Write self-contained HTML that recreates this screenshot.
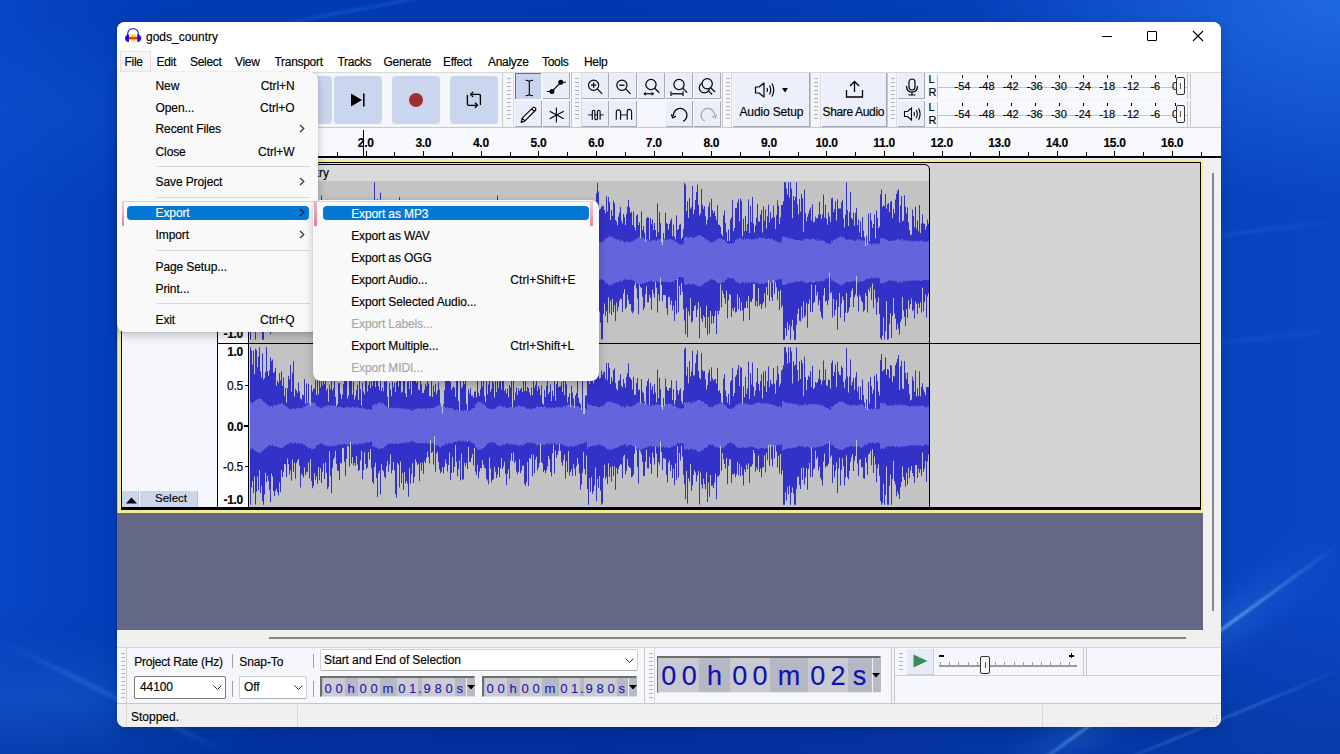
<!DOCTYPE html><html><head><meta charset="utf-8"><style>
*{margin:0;padding:0;box-sizing:border-box}
html,body{width:1340px;height:754px;overflow:hidden}
body{position:relative;font-family:"Liberation Sans",sans-serif;font-size:12px;color:#000;
 background:#003cb6;}
.abs{position:absolute}
.t{position:absolute;white-space:nowrap;line-height:1;-webkit-text-stroke:0.15px currentColor}
svg{position:absolute;overflow:visible}
</style></head><body>
<div class="abs" style="left:0;top:0;width:1340px;height:754px;background:linear-gradient(90deg,#0746c6 0%,#003cb6 12%,#0038b0 45%,#0540bc 80%,#0a46c4 100%)"></div>
<div class="abs" style="left:0;top:0;width:1340px;height:754px;background:linear-gradient(180deg,rgba(0,0,0,0) 0%,rgba(0,0,0,0) 80%,rgba(0,10,60,0.18) 100%)"></div>
<div class="abs" style="left:0;top:0;width:1340px;height:754px;background:radial-gradient(ellipse 380px 200px at 1340px 0px,rgba(40,120,235,0.7),rgba(40,120,235,0) 100%)"></div>
<div class="abs" style="left:0;top:0;width:1340px;height:754px;background:radial-gradient(ellipse 260px 90px at 60px 110px,rgba(30,100,220,0.22),rgba(30,100,220,0) 100%)"></div>
<div class="abs" style="left:980px;top:780.0px;width:442px;height:40px;transform-origin:0 50%;transform:rotate(-35.52deg);background:linear-gradient(90deg,rgba(60,140,240,0),rgba(60,140,240,0.22) 30%,rgba(60,140,240,0.22) 70%,rgba(60,140,240,0));filter:blur(10px)"></div>
<div class="abs" style="left:1000px;top:788.75px;width:420px;height:2.5px;transform-origin:0 50%;transform:rotate(-36.00deg);background:linear-gradient(90deg,rgba(130,195,250,0),rgba(130,195,250,0.6) 30%,rgba(130,195,250,0.6) 70%,rgba(130,195,250,0));filter:blur(1.3px)"></div>
<div class="abs" style="left:1100px;top:769.0px;width:260px;height:2px;transform-origin:0 50%;transform:rotate(-22.62deg);background:linear-gradient(90deg,rgba(120,180,250,0),rgba(120,180,250,0.35) 30%,rgba(120,180,250,0.35) 70%,rgba(120,180,250,0));filter:blur(1.3px)"></div>
<div class="abs" style="left:1180px;top:238.5px;width:161px;height:3px;transform-origin:0 50%;transform:rotate(-7.13deg);background:linear-gradient(90deg,rgba(90,150,240,0),rgba(90,150,240,0.15) 30%,rgba(90,150,240,0.15) 70%,rgba(90,150,240,0));filter:blur(1.5px)"></div>
<div class="abs" style="left:1190px;top:343.5px;width:151px;height:3px;transform-origin:0 50%;transform:rotate(-5.71deg);background:linear-gradient(90deg,rgba(90,150,240,0),rgba(90,150,240,0.12) 30%,rgba(90,150,240,0.12) 70%,rgba(90,150,240,0));filter:blur(1.5px)"></div>
<div class="abs" style="left:250px;top:29.0px;width:214px;height:2px;transform-origin:0 50%;transform:rotate(-10.78deg);background:linear-gradient(90deg,rgba(90,150,240,0),rgba(90,150,240,0.35) 30%,rgba(90,150,240,0.35) 70%,rgba(90,150,240,0));filter:blur(1.5px)"></div>
<div class="abs" style="left:0;top:0;width:1340px;height:754px;background:radial-gradient(ellipse 240px 70px at 60px 700px,rgba(40,120,230,0.28),rgba(40,120,230,0) 100%)"></div>
<div class="abs" style="left:0px;top:637.5px;width:257px;height:5px;transform-origin:0 50%;transform:rotate(26.37deg);background:linear-gradient(90deg,rgba(90,150,240,0),rgba(90,150,240,0.22) 30%,rgba(90,150,240,0.22) 70%,rgba(90,150,240,0));filter:blur(1.5px)"></div>
<div class="abs" style="left:117px;top:22px;width:1104px;height:705px;border-radius:8px;background:#f0f0f0;box-shadow:0 4px 14px rgba(0,0,20,0.18),0 0 1px rgba(0,0,0,0.3)"></div>
<div class="abs" style="left:117px;top:22px;width:1104px;height:51px;border-radius:8px 8px 0 0;background:#ffffff;"></div>
<svg style="left:122px;top:26px" width="24" height="20" viewBox="0 0 24 20">
<defs><radialGradient id="yg" cx="0.5" cy="0.45" r="0.55"><stop offset="0" stop-color="#f0d000"/><stop offset="0.7" stop-color="#ffd830"/><stop offset="1" stop-color="#fff0a0"/></radialGradient></defs>
<path d="M5.4 9.5 C5.2 4.8 7.8 2.7 11 2.7 C14.2 2.7 16.8 4.8 16.6 9.5" fill="none" stroke="#2a2ae8" stroke-width="1.3"/>
<ellipse cx="11.1" cy="11.8" rx="3.9" ry="3.8" fill="url(#yg)"/>
<rect x="7" y="11" width="8.4" height="2.3" fill="#ff2a00"/>
<path d="M7 8.2 V16 Q3 16 3 12.3 Q3 9 7 8.2Z" fill="#1010f0"/>
<path d="M15.2 8.2 V16 Q19.2 16 19.2 12.3 Q19.2 9 15.2 8.2Z" fill="#1010f0"/>
</svg>
<div class="t" style="left:146px;top:30.84px;font-size:12px;color:#000;">gods_country</div>
<div class="abs" style="left:1102px;top:36px;width:10px;height:1px;background:#000"></div>
<div class="abs" style="left:1147px;top:31px;width:10px;height:10px;border:1px solid #000;border-radius:1px"></div>
<svg style="left:1193px;top:31px" width="10" height="10"><path d="M0 0L10 10M10 0L0 10" stroke="#000" stroke-width="1.1"/></svg>
<div class="t" style="left:124.5px;top:55.64px;font-size:12px;color:#000;letter-spacing:-0.3px">File</div>
<div class="t" style="left:156.5px;top:55.64px;font-size:12px;color:#000;letter-spacing:-0.3px">Edit</div>
<div class="t" style="left:190px;top:55.64px;font-size:12px;color:#000;letter-spacing:-0.3px">Select</div>
<div class="t" style="left:235px;top:55.64px;font-size:12px;color:#000;letter-spacing:-0.3px">View</div>
<div class="t" style="left:274.5px;top:55.64px;font-size:12px;color:#000;letter-spacing:-0.3px">Transport</div>
<div class="t" style="left:337.5px;top:55.64px;font-size:12px;color:#000;letter-spacing:-0.3px">Tracks</div>
<div class="t" style="left:383.5px;top:55.64px;font-size:12px;color:#000;letter-spacing:-0.3px">Generate</div>
<div class="t" style="left:443px;top:55.64px;font-size:12px;color:#000;letter-spacing:-0.3px">Effect</div>
<div class="t" style="left:488px;top:55.64px;font-size:12px;color:#000;letter-spacing:-0.3px">Analyze</div>
<div class="t" style="left:542px;top:55.64px;font-size:12px;color:#000;letter-spacing:-0.3px">Tools</div>
<div class="t" style="left:584px;top:55.64px;font-size:12px;color:#000;letter-spacing:-0.3px">Help</div>
<div class="abs" style="left:120px;top:51px;width:31px;height:23px;border:1px solid #f4d8dc;border-bottom:none;background:#f6f6f6"></div>
<div class="t" style="left:124.5px;top:55.64px;font-size:12px;color:#000;letter-spacing:-0.3px">File</div>
<div class="abs" style="left:117px;top:72px;width:1104px;height:56px;background:#f4f6fb;border-top:1px solid #d8d8d8;border-bottom:1px solid #c8c8c8"></div>
<div class="abs" style="left:284px;top:76px;width:48px;height:48px;background:#cad6ee;border-radius:4px"></div>
<div class="abs" style="left:334px;top:76px;width:48px;height:48px;background:#cad6ee;border-radius:4px"></div>
<div class="abs" style="left:392px;top:76px;width:48px;height:48px;background:#cad6ee;border-radius:4px"></div>
<div class="abs" style="left:450px;top:76px;width:48px;height:48px;background:#cad6ee;border-radius:4px"></div>
<svg style="left:350px;top:93px" width="16" height="14"><path d="M1 0.5L12 7L1 13.5Z" fill="#000"/><rect x="13" y="0.5" width="1.6" height="13" fill="#000"/></svg>
<div class="abs" style="left:409px;top:93px;width:14px;height:14px;border-radius:50%;background:#a03030"></div>
<svg style="left:460px;top:86px" width="30" height="28"><g stroke="#000" stroke-width="1.35" fill="none" stroke-linecap="round" stroke-linejoin="round"><path d="M10.8 8.4H19.2Q20.4 8.4 20.4 9.6V18.6"/><path d="M12.8 6.2L10.6 8.4L12.8 10.6"/><path d="M7.4 9.3V18.1Q7.4 19.3 8.6 19.3H17.5"/><path d="M15.3 17.1L17.5 19.3L15.3 21.5"/></g></svg>
<div class="abs" style="left:502px;top:73px;width:1px;height:54px;background:#c8c8c8"></div>
<div class="abs" style="left:506px;top:75px;width:6px;height:50px"><div style="position:absolute;left:1px;top:3px;width:4px;height:1px;background:#b4b4b8"></div><div style="position:absolute;left:1px;top:7px;width:4px;height:1px;background:#b4b4b8"></div><div style="position:absolute;left:1px;top:11px;width:4px;height:1px;background:#b4b4b8"></div><div style="position:absolute;left:1px;top:15px;width:4px;height:1px;background:#b4b4b8"></div><div style="position:absolute;left:1px;top:19px;width:4px;height:1px;background:#b4b4b8"></div><div style="position:absolute;left:1px;top:23px;width:4px;height:1px;background:#b4b4b8"></div><div style="position:absolute;left:1px;top:27px;width:4px;height:1px;background:#b4b4b8"></div><div style="position:absolute;left:1px;top:31px;width:4px;height:1px;background:#b4b4b8"></div><div style="position:absolute;left:1px;top:35px;width:4px;height:1px;background:#b4b4b8"></div><div style="position:absolute;left:1px;top:39px;width:4px;height:1px;background:#b4b4b8"></div><div style="position:absolute;left:1px;top:43px;width:4px;height:1px;background:#b4b4b8"></div></div>
<div class="abs" style="left:513px;top:73px;width:1px;height:54px;background:#dcdcdc"></div>
<div class="abs" style="left:515px;top:73px;width:26px;height:26px;background:#c9d5ee;border-left:1px solid #6c7080;border-top:1px solid #6c7080"></div>
<div class="abs" style="left:543px;top:73px;width:27px;height:26px;background:#e9eef9;border-right:1px solid #a4a8b4;border-bottom:1px solid #a4a8b4"></div>
<div class="abs" style="left:515px;top:101px;width:27px;height:26px;background:#e9eef9;border-right:1px solid #a4a8b4;border-bottom:1px solid #a4a8b4"></div>
<div class="abs" style="left:543px;top:101px;width:27px;height:26px;background:#e9eef9;border-right:1px solid #a4a8b4;border-bottom:1px solid #a4a8b4"></div>
<svg style="left:515px;top:73px" width="28" height="28"><path d="M10.5 7.2Q12.5 7.2 14.3 8.2Q16.1 7.2 18.1 7.2M14.3 8.2V21.8M10.5 22.7Q12.5 22.7 14.3 21.7Q16.1 22.7 18.1 22.7" stroke="#000" fill="none" stroke-width="1.1"/></svg>
<svg style="left:543px;top:73px" width="28" height="28"><path d="M3.8 18.5H8.9L17.8 9.3H23" stroke="#000" fill="none" stroke-width="1.1"/><circle cx="8.9" cy="18.5" r="2.5" fill="#000"/><circle cx="17.8" cy="9.3" r="2.5" fill="#000"/></svg>
<svg style="left:515px;top:101px" width="28" height="28"><path d="M6.1 21.4L7.2 17.2L17.6 6.8A1.9 1.9 0 0 1 20.3 9.5L9.9 19.9Z M7.2 17.2L9.9 19.9 M16.6 7.8L19.3 10.5" stroke="#000" fill="none" stroke-width="1.1" stroke-linejoin="round"/><path d="M6.1 21.4L6.7 19.2L8.3 20.8Z" fill="#000"/></svg>
<svg style="left:543px;top:101px" width="28" height="28"><path d="M13.4 6.4V21.4M6.7 10.3L20.7 17.8M6.7 17.8L20.7 10.3" stroke="#000" fill="none" stroke-width="1.1"/><circle cx="13.4" cy="13.9" r="1" fill="#000"/></svg>
<div class="abs" style="left:571px;top:73px;width:1px;height:54px;background:#c8c8c8"></div>
<div class="abs" style="left:574px;top:75px;width:6px;height:50px"><div style="position:absolute;left:1px;top:3px;width:4px;height:1px;background:#b4b4b8"></div><div style="position:absolute;left:1px;top:7px;width:4px;height:1px;background:#b4b4b8"></div><div style="position:absolute;left:1px;top:11px;width:4px;height:1px;background:#b4b4b8"></div><div style="position:absolute;left:1px;top:15px;width:4px;height:1px;background:#b4b4b8"></div><div style="position:absolute;left:1px;top:19px;width:4px;height:1px;background:#b4b4b8"></div><div style="position:absolute;left:1px;top:23px;width:4px;height:1px;background:#b4b4b8"></div><div style="position:absolute;left:1px;top:27px;width:4px;height:1px;background:#b4b4b8"></div><div style="position:absolute;left:1px;top:31px;width:4px;height:1px;background:#b4b4b8"></div><div style="position:absolute;left:1px;top:35px;width:4px;height:1px;background:#b4b4b8"></div><div style="position:absolute;left:1px;top:39px;width:4px;height:1px;background:#b4b4b8"></div><div style="position:absolute;left:1px;top:43px;width:4px;height:1px;background:#b4b4b8"></div></div>
<div class="abs" style="left:581px;top:73px;width:1px;height:54px;background:#dcdcdc"></div>
<div class="abs" style="left:582px;top:73px;width:27px;height:26px;background:#e9eef9;border-right:1px solid #a4a8b4;border-bottom:1px solid #a4a8b4"></div>
<div class="abs" style="left:610px;top:73px;width:27px;height:26px;background:#e9eef9;border-right:1px solid #a4a8b4;border-bottom:1px solid #a4a8b4"></div>
<div class="abs" style="left:638px;top:73px;width:27px;height:26px;background:#e9eef9;border-right:1px solid #a4a8b4;border-bottom:1px solid #a4a8b4"></div>
<div class="abs" style="left:666px;top:73px;width:27px;height:26px;background:#e9eef9;border-right:1px solid #a4a8b4;border-bottom:1px solid #a4a8b4"></div>
<div class="abs" style="left:694px;top:73px;width:27px;height:26px;background:#e9eef9;border-right:1px solid #a4a8b4;border-bottom:1px solid #a4a8b4"></div>
<div class="abs" style="left:582px;top:101px;width:27px;height:26px;background:#e9eef9;border-right:1px solid #a4a8b4;border-bottom:1px solid #a4a8b4"></div>
<div class="abs" style="left:610px;top:101px;width:27px;height:26px;background:#e9eef9;border-right:1px solid #a4a8b4;border-bottom:1px solid #a4a8b4"></div>
<div class="abs" style="left:666px;top:101px;width:27px;height:26px;background:#e9eef9;border-right:1px solid #a4a8b4;border-bottom:1px solid #a4a8b4"></div>
<div class="abs" style="left:694px;top:101px;width:27px;height:26px;background:#e9eef9;border-right:1px solid #a4a8b4;border-bottom:1px solid #a4a8b4"></div>
<svg style="left:582px;top:73px" width="28" height="28"><circle cx="11.6" cy="12.2" r="5.1" stroke="#000" stroke-width="1.2" fill="none"/><path d="M15.3 15.899999999999999L20.2 20.8" stroke="#000" stroke-width="1.2"/><path d="M9 12.2H14.2M11.6 9.6V14.8" stroke="#000" stroke-width="1.3"/></svg>
<svg style="left:610px;top:73px" width="28" height="28"><circle cx="11.9" cy="12.2" r="5.1" stroke="#000" stroke-width="1.2" fill="none"/><path d="M15.600000000000001 15.899999999999999L20.5 20.8" stroke="#000" stroke-width="1.2"/><path d="M9.3 12.2H14.5" stroke="#000" stroke-width="1.3"/></svg>
<svg style="left:638px;top:73px" width="28" height="28"><circle cx="13" cy="11.5" r="5.1" stroke="#000" stroke-width="1.2" fill="none"/><path d="M16.7 15.2L21.3 19.7" stroke="#000" stroke-width="1.2"/><path d="M6 20.8H15.5" stroke="#000" stroke-width="1.2"/><path d="M5.3 20.8L7.8 18.8V22.8Z M16.2 20.8L13.7 18.8V22.8Z" fill="#000"/></svg>
<svg style="left:666px;top:73px" width="28" height="28"><circle cx="13" cy="11.5" r="5.1" stroke="#000" stroke-width="1.2" fill="none"/><path d="M16.7 15.2L21.2 19.7" stroke="#000" stroke-width="1.2"/><path d="M5.6 20.8H16.5" stroke="#000" stroke-width="1.3"/><path d="M5 18.6V23M17 18.6V23" stroke="#000" stroke-width="1.2"/></svg>
<svg style="left:694px;top:73px" width="28" height="28"><circle cx="10.4" cy="14.7" r="5.1" stroke="#000" fill="none" stroke-width="1.2"/><circle cx="13.2" cy="10.7" r="5.1" stroke="#000" stroke-width="1.2" fill="#e9eef9"/><path d="M16.6 14.8L21.1 19M14 17.3L18.2 21.5" stroke="#000" fill="none" stroke-width="1.2"/></svg>
<svg style="left:585px;top:105px" width="22" height="18"><path d="M3.2 9.9H18.7" stroke="#6a6e78" stroke-width="1.7"/><path d="M7.3 14.7V6.5A1.3 1.3 0 0 1 9.9 6.5V13.4A1.3 1.3 0 0 0 12.5 13.4V6.5A1.3 1.3 0 0 1 15.1 6.5V14.7" stroke="#000" stroke-width="1.1" fill="#e9eef9"/></svg>
<svg style="left:613px;top:105px" width="24" height="18"><path d="M7.6 9.9H14.2" stroke="#6a6e78" stroke-width="1.7"/><path d="M3.3 14.7V6.6A2.2 2.2 0 0 1 7.6 6.6V13.2A1.3 1.3 0 0 0 7.6 14.7" stroke="#000" stroke-width="1.1" fill="none"/><path d="M14.2 14.7V6.6A2.2 2.2 0 0 1 18.6 6.6V14.7" stroke="#000" stroke-width="1.1" fill="none"/></svg>
<svg style="left:666px;top:101px" width="28" height="28"><path d="M17.2 20.3A6.8 6.8 0 1 0 7.4 15" stroke="#000" stroke-width="1.3" fill="none"/><path d="M5.5 13.2L6.6 16.8L9.9 15.2" stroke="#000" stroke-width="1.3" fill="none" stroke-linejoin="round"/></svg>
<svg style="left:694px;top:101px" width="28" height="28"><path d="M10.8 20.3A6.8 6.8 0 1 1 20.6 15" stroke="#a0a0a8" stroke-width="1.1" fill="none"/><path d="M22.5 13.2L21.4 16.8L18.1 15.2" stroke="#a0a0a8" stroke-width="1.1" fill="none" stroke-linejoin="round"/></svg>
<div class="abs" style="left:722px;top:73px;width:1px;height:54px;background:#c8c8c8"></div>
<div class="abs" style="left:725px;top:75px;width:6px;height:50px"><div style="position:absolute;left:1px;top:3px;width:4px;height:1px;background:#b4b4b8"></div><div style="position:absolute;left:1px;top:7px;width:4px;height:1px;background:#b4b4b8"></div><div style="position:absolute;left:1px;top:11px;width:4px;height:1px;background:#b4b4b8"></div><div style="position:absolute;left:1px;top:15px;width:4px;height:1px;background:#b4b4b8"></div><div style="position:absolute;left:1px;top:19px;width:4px;height:1px;background:#b4b4b8"></div><div style="position:absolute;left:1px;top:23px;width:4px;height:1px;background:#b4b4b8"></div><div style="position:absolute;left:1px;top:27px;width:4px;height:1px;background:#b4b4b8"></div><div style="position:absolute;left:1px;top:31px;width:4px;height:1px;background:#b4b4b8"></div><div style="position:absolute;left:1px;top:35px;width:4px;height:1px;background:#b4b4b8"></div><div style="position:absolute;left:1px;top:39px;width:4px;height:1px;background:#b4b4b8"></div><div style="position:absolute;left:1px;top:43px;width:4px;height:1px;background:#b4b4b8"></div></div>
<div class="abs" style="left:731px;top:73px;width:1px;height:54px;background:#dcdcdc"></div>
<div class="abs" style="left:733px;top:73px;width:77px;height:54px;background:#edf0fa;border-right:1px solid #a4a8b4;border-bottom:1px solid #a4a8b4"></div>
<svg style="left:754px;top:82px" width="22" height="16"><path d="M1.5 5H5L10 1V15L5 11H1.5Z" stroke="#000" stroke-width="1.2" fill="none" stroke-linejoin="round"/><path d="M13 6Q14.2 8 13 10M15.5 3.5Q18 8 15.5 12.5M18 1.5Q21.5 8 18 14.5" stroke="#000" stroke-width="1.2" fill="none"/></svg>
<svg style="left:782px;top:88px" width="6" height="5"><path d="M0 0H6L3 4.5Z" fill="#000"/></svg>
<div class="t" style="left:739.5px;top:105.64px;font-size:12px;color:#000;letter-spacing:-0.15px">Audio Setup</div>
<div class="abs" style="left:810px;top:73px;width:1px;height:54px;background:#c8c8c8"></div>
<div class="abs" style="left:813px;top:75px;width:6px;height:50px"><div style="position:absolute;left:1px;top:3px;width:4px;height:1px;background:#b4b4b8"></div><div style="position:absolute;left:1px;top:7px;width:4px;height:1px;background:#b4b4b8"></div><div style="position:absolute;left:1px;top:11px;width:4px;height:1px;background:#b4b4b8"></div><div style="position:absolute;left:1px;top:15px;width:4px;height:1px;background:#b4b4b8"></div><div style="position:absolute;left:1px;top:19px;width:4px;height:1px;background:#b4b4b8"></div><div style="position:absolute;left:1px;top:23px;width:4px;height:1px;background:#b4b4b8"></div><div style="position:absolute;left:1px;top:27px;width:4px;height:1px;background:#b4b4b8"></div><div style="position:absolute;left:1px;top:31px;width:4px;height:1px;background:#b4b4b8"></div><div style="position:absolute;left:1px;top:35px;width:4px;height:1px;background:#b4b4b8"></div><div style="position:absolute;left:1px;top:39px;width:4px;height:1px;background:#b4b4b8"></div><div style="position:absolute;left:1px;top:43px;width:4px;height:1px;background:#b4b4b8"></div></div>
<div class="abs" style="left:820px;top:73px;width:1px;height:54px;background:#dcdcdc"></div>
<div class="abs" style="left:822px;top:73px;width:65px;height:54px;background:#edf0fa;border-right:1px solid #a4a8b4;border-bottom:1px solid #a4a8b4"></div>
<svg style="left:845px;top:80px" width="19" height="19"><path d="M9.5 1.5V12M5 6L9.5 1.5L14 6" stroke="#000" stroke-width="1.3" fill="none"/><path d="M1.5 10V17H17.5V10" stroke="#000" stroke-width="1.3" fill="none"/></svg>
<div class="t" style="left:822.5px;top:106.34px;font-size:12px;color:#000;letter-spacing:-0.35px">Share Audio</div>
<div class="abs" style="left:887px;top:73px;width:1px;height:54px;background:#c8c8c8"></div>
<div class="abs" style="left:890px;top:75px;width:6px;height:50px"><div style="position:absolute;left:1px;top:3px;width:4px;height:1px;background:#b4b4b8"></div><div style="position:absolute;left:1px;top:7px;width:4px;height:1px;background:#b4b4b8"></div><div style="position:absolute;left:1px;top:11px;width:4px;height:1px;background:#b4b4b8"></div><div style="position:absolute;left:1px;top:15px;width:4px;height:1px;background:#b4b4b8"></div><div style="position:absolute;left:1px;top:19px;width:4px;height:1px;background:#b4b4b8"></div><div style="position:absolute;left:1px;top:23px;width:4px;height:1px;background:#b4b4b8"></div><div style="position:absolute;left:1px;top:27px;width:4px;height:1px;background:#b4b4b8"></div><div style="position:absolute;left:1px;top:31px;width:4px;height:1px;background:#b4b4b8"></div><div style="position:absolute;left:1px;top:35px;width:4px;height:1px;background:#b4b4b8"></div><div style="position:absolute;left:1px;top:39px;width:4px;height:1px;background:#b4b4b8"></div><div style="position:absolute;left:1px;top:43px;width:4px;height:1px;background:#b4b4b8"></div></div>
<div class="abs" style="left:896px;top:73px;width:1px;height:54px;background:#dcdcdc"></div>
<div class="abs" style="left:898px;top:73px;width:27px;height:26px;background:#e9eef9;border-right:1px solid #a4a8b4;border-bottom:1px solid #a4a8b4"></div>
<div class="t" style="left:928.5px;top:73.89px;font-size:11px;color:#000;">L</div>
<div class="t" style="left:928.5px;top:87.49px;font-size:11px;color:#000;">R</div>
<div class="abs" style="left:937px;top:74px;width:250px;height:25px;background:#f8f9fd;border-left:1px solid #c4c4c8"></div>
<div class="abs" style="left:937px;top:87px;width:250px;height:1px;background:#c4c4c8"></div>
<div class="abs" style="left:962px;top:75px;width:1px;height:3px;background:#000"></div>
<div class="t" style="left:862.5px;width:200px;text-align:center;top:81.19px;font-size:11px;color:#000;">-54</div>
<div class="abs" style="left:987px;top:75px;width:1px;height:3px;background:#000"></div>
<div class="t" style="left:886.6px;width:200px;text-align:center;top:81.19px;font-size:11px;color:#000;">-48</div>
<div class="abs" style="left:1011px;top:75px;width:1px;height:3px;background:#000"></div>
<div class="t" style="left:910.7px;width:200px;text-align:center;top:81.19px;font-size:11px;color:#000;">-42</div>
<div class="abs" style="left:1035px;top:75px;width:1px;height:3px;background:#000"></div>
<div class="t" style="left:934.8px;width:200px;text-align:center;top:81.19px;font-size:11px;color:#000;">-36</div>
<div class="abs" style="left:1059px;top:75px;width:1px;height:3px;background:#000"></div>
<div class="t" style="left:958.9000000000001px;width:200px;text-align:center;top:81.19px;font-size:11px;color:#000;">-30</div>
<div class="abs" style="left:1083px;top:75px;width:1px;height:3px;background:#000"></div>
<div class="t" style="left:983.0px;width:200px;text-align:center;top:81.19px;font-size:11px;color:#000;">-24</div>
<div class="abs" style="left:1107px;top:75px;width:1px;height:3px;background:#000"></div>
<div class="t" style="left:1007.0999999999999px;width:200px;text-align:center;top:81.19px;font-size:11px;color:#000;">-18</div>
<div class="abs" style="left:1131px;top:75px;width:1px;height:3px;background:#000"></div>
<div class="t" style="left:1031.2px;width:200px;text-align:center;top:81.19px;font-size:11px;color:#000;">-12</div>
<div class="abs" style="left:1155px;top:75px;width:1px;height:3px;background:#000"></div>
<div class="t" style="left:1055.3px;width:200px;text-align:center;top:81.19px;font-size:11px;color:#000;">-6</div>
<div class="abs" style="left:1175px;top:75px;width:1px;height:3px;background:#000"></div>
<div class="t" style="left:1075px;width:200px;text-align:center;top:81.19px;font-size:11px;color:#000;">0</div>
<div class="abs" style="left:1176px;top:77px;width:9px;height:18px;background:#f8f8f8;border:1px solid #333;border-radius:2px"></div>
<div class="abs" style="left:1180px;top:83px;width:1px;height:6px;background:#555"></div>
<div class="abs" style="left:1187px;top:73px;width:1px;height:26px;background:#c8c8c8"></div>
<div class="abs" style="left:1190px;top:73px;width:1px;height:26px;background:#c8c8c8"></div>
<div class="abs" style="left:898px;top:101px;width:27px;height:26px;background:#e9eef9;border-right:1px solid #a4a8b4;border-bottom:1px solid #a4a8b4"></div>
<div class="t" style="left:928.5px;top:101.89px;font-size:11px;color:#000;">L</div>
<div class="t" style="left:928.5px;top:115.49px;font-size:11px;color:#000;">R</div>
<div class="abs" style="left:937px;top:102px;width:250px;height:25px;background:#f8f9fd;border-left:1px solid #c4c4c8"></div>
<div class="abs" style="left:937px;top:115px;width:250px;height:1px;background:#c4c4c8"></div>
<div class="abs" style="left:962px;top:103px;width:1px;height:3px;background:#000"></div>
<div class="t" style="left:862.5px;width:200px;text-align:center;top:109.19px;font-size:11px;color:#000;">-54</div>
<div class="abs" style="left:987px;top:103px;width:1px;height:3px;background:#000"></div>
<div class="t" style="left:886.6px;width:200px;text-align:center;top:109.19px;font-size:11px;color:#000;">-48</div>
<div class="abs" style="left:1011px;top:103px;width:1px;height:3px;background:#000"></div>
<div class="t" style="left:910.7px;width:200px;text-align:center;top:109.19px;font-size:11px;color:#000;">-42</div>
<div class="abs" style="left:1035px;top:103px;width:1px;height:3px;background:#000"></div>
<div class="t" style="left:934.8px;width:200px;text-align:center;top:109.19px;font-size:11px;color:#000;">-36</div>
<div class="abs" style="left:1059px;top:103px;width:1px;height:3px;background:#000"></div>
<div class="t" style="left:958.9000000000001px;width:200px;text-align:center;top:109.19px;font-size:11px;color:#000;">-30</div>
<div class="abs" style="left:1083px;top:103px;width:1px;height:3px;background:#000"></div>
<div class="t" style="left:983.0px;width:200px;text-align:center;top:109.19px;font-size:11px;color:#000;">-24</div>
<div class="abs" style="left:1107px;top:103px;width:1px;height:3px;background:#000"></div>
<div class="t" style="left:1007.0999999999999px;width:200px;text-align:center;top:109.19px;font-size:11px;color:#000;">-18</div>
<div class="abs" style="left:1131px;top:103px;width:1px;height:3px;background:#000"></div>
<div class="t" style="left:1031.2px;width:200px;text-align:center;top:109.19px;font-size:11px;color:#000;">-12</div>
<div class="abs" style="left:1155px;top:103px;width:1px;height:3px;background:#000"></div>
<div class="t" style="left:1055.3px;width:200px;text-align:center;top:109.19px;font-size:11px;color:#000;">-6</div>
<div class="abs" style="left:1175px;top:103px;width:1px;height:3px;background:#000"></div>
<div class="t" style="left:1075px;width:200px;text-align:center;top:109.19px;font-size:11px;color:#000;">0</div>
<div class="abs" style="left:1176px;top:105px;width:9px;height:18px;background:#f8f8f8;border:1px solid #333;border-radius:2px"></div>
<div class="abs" style="left:1180px;top:111px;width:1px;height:6px;background:#555"></div>
<div class="abs" style="left:1187px;top:101px;width:1px;height:26px;background:#c8c8c8"></div>
<div class="abs" style="left:1190px;top:101px;width:1px;height:26px;background:#c8c8c8"></div>
<svg style="left:905px;top:78px" width="14" height="18"><rect x="4" y="1" width="6" height="11" rx="3" stroke="#000" stroke-width="1.2" fill="none"/><path d="M1.5 8Q1.5 14 7 14Q12.5 14 12.5 8M7 14V17M3.5 17H10.5" stroke="#000" stroke-width="1.2" fill="none"/></svg>
<svg style="left:903px;top:107px" width="20" height="14"><path d="M1.5 4.5H4.5L8.5 1V13L4.5 9.5H1.5Z" stroke="#000" stroke-width="1.1" fill="none"/><path d="M11 5Q12 7 11 9M13.3 3Q15.3 7 13.3 11M15.6 1.2Q18.6 7 15.6 12.8" stroke="#000" stroke-width="1.1" fill="none"/></svg>
<div class="abs" style="left:117px;top:128px;width:1104px;height:29px;background:#f8f9fd"></div>
<div class="abs" style="left:117px;top:156px;width:1104px;height:2px;background:#000"></div>
<div class="abs" style="left:250px;top:151px;width:1px;height:5px;background:#000"></div>
<div class="abs" style="left:279px;top:152px;width:1px;height:4px;background:#000"></div>
<div class="abs" style="left:308px;top:151px;width:1px;height:5px;background:#000"></div>
<div class="t" style="left:208.10000000000002px;width:200px;text-align:center;top:137.34px;font-size:12px;color:#000;font-weight:bold;letter-spacing:-0.3px">1.0</div>
<div class="abs" style="left:337px;top:152px;width:1px;height:4px;background:#000"></div>
<div class="abs" style="left:366px;top:151px;width:1px;height:5px;background:#000"></div>
<div class="t" style="left:265.7px;width:200px;text-align:center;top:137.34px;font-size:12px;color:#000;font-weight:bold;letter-spacing:-0.3px">2.0</div>
<div class="abs" style="left:394px;top:152px;width:1px;height:4px;background:#000"></div>
<div class="abs" style="left:423px;top:151px;width:1px;height:5px;background:#000"></div>
<div class="t" style="left:323.3px;width:200px;text-align:center;top:137.34px;font-size:12px;color:#000;font-weight:bold;letter-spacing:-0.3px">3.0</div>
<div class="abs" style="left:452px;top:152px;width:1px;height:4px;background:#000"></div>
<div class="abs" style="left:481px;top:151px;width:1px;height:5px;background:#000"></div>
<div class="t" style="left:380.9px;width:200px;text-align:center;top:137.34px;font-size:12px;color:#000;font-weight:bold;letter-spacing:-0.3px">4.0</div>
<div class="abs" style="left:510px;top:152px;width:1px;height:4px;background:#000"></div>
<div class="abs" style="left:538px;top:151px;width:1px;height:5px;background:#000"></div>
<div class="t" style="left:438.5px;width:200px;text-align:center;top:137.34px;font-size:12px;color:#000;font-weight:bold;letter-spacing:-0.3px">5.0</div>
<div class="abs" style="left:567px;top:152px;width:1px;height:4px;background:#000"></div>
<div class="abs" style="left:596px;top:151px;width:1px;height:5px;background:#000"></div>
<div class="t" style="left:496.1px;width:200px;text-align:center;top:137.34px;font-size:12px;color:#000;font-weight:bold;letter-spacing:-0.3px">6.0</div>
<div class="abs" style="left:625px;top:152px;width:1px;height:4px;background:#000"></div>
<div class="abs" style="left:654px;top:151px;width:1px;height:5px;background:#000"></div>
<div class="t" style="left:553.7px;width:200px;text-align:center;top:137.34px;font-size:12px;color:#000;font-weight:bold;letter-spacing:-0.3px">7.0</div>
<div class="abs" style="left:682px;top:152px;width:1px;height:4px;background:#000"></div>
<div class="abs" style="left:711px;top:151px;width:1px;height:5px;background:#000"></div>
<div class="t" style="left:611.3px;width:200px;text-align:center;top:137.34px;font-size:12px;color:#000;font-weight:bold;letter-spacing:-0.3px">8.0</div>
<div class="abs" style="left:740px;top:152px;width:1px;height:4px;background:#000"></div>
<div class="abs" style="left:769px;top:151px;width:1px;height:5px;background:#000"></div>
<div class="t" style="left:668.9px;width:200px;text-align:center;top:137.34px;font-size:12px;color:#000;font-weight:bold;letter-spacing:-0.3px">9.0</div>
<div class="abs" style="left:798px;top:152px;width:1px;height:4px;background:#000"></div>
<div class="abs" style="left:826px;top:151px;width:1px;height:5px;background:#000"></div>
<div class="t" style="left:726.5px;width:200px;text-align:center;top:137.34px;font-size:12px;color:#000;font-weight:bold;letter-spacing:-0.3px">10.0</div>
<div class="abs" style="left:855px;top:152px;width:1px;height:4px;background:#000"></div>
<div class="abs" style="left:884px;top:151px;width:1px;height:5px;background:#000"></div>
<div class="t" style="left:784.1px;width:200px;text-align:center;top:137.34px;font-size:12px;color:#000;font-weight:bold;letter-spacing:-0.3px">11.0</div>
<div class="abs" style="left:913px;top:152px;width:1px;height:4px;background:#000"></div>
<div class="abs" style="left:942px;top:151px;width:1px;height:5px;background:#000"></div>
<div class="t" style="left:841.7px;width:200px;text-align:center;top:137.34px;font-size:12px;color:#000;font-weight:bold;letter-spacing:-0.3px">12.0</div>
<div class="abs" style="left:970px;top:152px;width:1px;height:4px;background:#000"></div>
<div class="abs" style="left:999px;top:151px;width:1px;height:5px;background:#000"></div>
<div class="t" style="left:899.3000000000001px;width:200px;text-align:center;top:137.34px;font-size:12px;color:#000;font-weight:bold;letter-spacing:-0.3px">13.0</div>
<div class="abs" style="left:1028px;top:152px;width:1px;height:4px;background:#000"></div>
<div class="abs" style="left:1057px;top:151px;width:1px;height:5px;background:#000"></div>
<div class="t" style="left:956.9000000000001px;width:200px;text-align:center;top:137.34px;font-size:12px;color:#000;font-weight:bold;letter-spacing:-0.3px">14.0</div>
<div class="abs" style="left:1086px;top:152px;width:1px;height:4px;background:#000"></div>
<div class="abs" style="left:1114px;top:151px;width:1px;height:5px;background:#000"></div>
<div class="t" style="left:1014.5px;width:200px;text-align:center;top:137.34px;font-size:12px;color:#000;font-weight:bold;letter-spacing:-0.3px">15.0</div>
<div class="abs" style="left:1143px;top:152px;width:1px;height:4px;background:#000"></div>
<div class="abs" style="left:1172px;top:151px;width:1px;height:5px;background:#000"></div>
<div class="t" style="left:1072.1px;width:200px;text-align:center;top:137.34px;font-size:12px;color:#000;font-weight:bold;letter-spacing:-0.3px">16.0</div>
<div class="abs" style="left:1201px;top:152px;width:1px;height:4px;background:#000"></div>
<div class="abs" style="left:363px;top:130px;width:1px;height:27px;background:#000"></div>
<div class="abs" style="left:117px;top:159px;width:1087px;height:354px;background:#f2ee90"></div>
<div class="abs" style="left:117px;top:159px;width:1px;height:354px;background:#c4c488"></div>
<div class="abs" style="left:121px;top:162px;width:1080px;height:348px;background:#000"></div>
<div class="abs" style="left:122px;top:163px;width:95px;height:345px;background:#f5f7fc"></div>
<div class="abs" style="left:218px;top:163px;width:30px;height:345px;background:#fdfdff"></div>
<div class="abs" style="left:249px;top:163px;width:951px;height:345px;background:#d4d4d4"></div>
<div class="abs" style="left:250px;top:165px;width:680px;height:343px;background:#c3c3c3;border-radius:5px 5px 0 0"></div>
<div class="abs" style="left:250px;top:165px;width:680px;height:16px;background:#d9d9d9;border-radius:5px 5px 0 0"></div>
<div class="abs" style="left:929px;top:168px;width:1px;height:340px;background:#000"></div>
<svg style="left:924px;top:164px" width="6" height="6"><path d="M0 0.5Q5.5 0.5 5.5 6" stroke="#000" stroke-width="1" fill="none"/></svg>
<div class="abs" style="left:250px;top:164px;width:675px;height:1px;background:#000"></div>
<div class="t" style="left:257.2px;top:166.84px;font-size:12px;color:#000;letter-spacing:-0.03px">gods_country</div>
<div class="abs" style="left:218px;top:343px;width:982px;height:1px;background:#000"></div>
<div class="abs" style="left:122px;top:343px;width:95px;height:1px;background:#f5f7fc"></div>
<div class="t" style="left:-57px;width:300px;text-align:right;top:328.34px;font-size:12px;color:#000;font-weight:bold;letter-spacing:-0.3px">-1.0</div>
<div class="t" style="left:-57px;width:300px;text-align:right;top:345.84px;font-size:12px;color:#000;font-weight:bold;letter-spacing:-0.3px">1.0</div>
<div class="t" style="left:-57px;width:300px;text-align:right;top:379.84px;font-size:12px;color:#000;letter-spacing:-0.2px">0.5</div>
<div class="abs" style="left:245px;top:385px;width:3px;height:1px;background:#000"></div>
<div class="t" style="left:-57px;width:300px;text-align:right;top:420.84px;font-size:12px;color:#000;font-weight:bold;letter-spacing:-0.3px">0.0</div>
<div class="abs" style="left:244px;top:425px;width:4px;height:2px;background:#000"></div>
<div class="t" style="left:-57px;width:300px;text-align:right;top:460.84px;font-size:12px;color:#000;letter-spacing:-0.2px">-0.5</div>
<div class="abs" style="left:245px;top:466px;width:3px;height:1px;background:#000"></div>
<div class="t" style="left:-57px;width:300px;text-align:right;top:494.34px;font-size:12px;color:#000;font-weight:bold;letter-spacing:-0.3px">-1.0</div>
<div class="abs" style="left:245px;top:507px;width:3px;height:1px;background:#000"></div>
<svg style="left:250px;top:181px;overflow:hidden" width="679" height="162"><path d="M0 1.3L1 1.3L1 2.6L2 2.6L2 20.4L3 20.4L3 3.1L4 3.1L4 27.9L5 27.9L5 4.6L6 4.6L6 2.8L7 2.8L7 24.0L8 24.0L8 14.2L9 14.2L9 1.3L10 1.3L10 24.3L11 24.3L11 31.7L12 31.7L12 5.8L13 5.8L13 31.7L14 31.7L14 31.5L15 31.5L15 25.7L16 25.7L16 1.3L17 1.3L17 25.7L18 25.7L18 26.3L19 26.3L19 24.7L20 24.7L20 13.6L21 13.6L21 15.8L22 15.8L22 13.2L23 13.2L23 30.2L24 30.2L24 28.7L25 28.7L25 23.5L26 23.5L26 43.3L27 43.3L27 31.1L28 31.1L28 40.3L29 40.3L29 24.7L30 24.7L30 35.9L31 35.9L31 25.8L32 25.8L32 41.1L33 41.1L33 32.9L34 32.9L34 48.8L35 48.8L35 38.8L36 38.8L36 55.8L37 55.8L37 45.3L38 45.3L38 30.3L39 30.3L39 31.6L40 31.6L40 21.2L41 21.2L41 45.1L42 45.1L42 27.3L43 27.3L43 15.2L44 15.2L44 48.7L45 48.7L45 43.7L46 43.7L46 47.8L47 47.8L47 49.2L48 49.2L48 35.1L49 35.1L49 45.2L50 45.2L50 52.9L51 52.9L51 54.6L52 54.6L52 46.6L53 46.6L53 48.1L54 48.1L54 33.8L55 33.8L55 56.4L56 56.4L56 35.0L57 35.0L57 52.8L58 52.8L58 36.1L59 36.1L59 54.8L60 54.8L60 61.9L61 61.9L61 40.1L62 40.1L62 41.4L63 41.4L63 44.4L64 44.4L64 42.0L65 42.0L65 34.0L66 34.0L66 51.1L67 51.1L67 33.7L68 33.7L68 49.3L69 49.3L69 20.5L70 20.5L70 40.0L71 40.0L71 14.6L72 14.6L72 40.6L73 40.6L73 31.4L74 31.4L74 37.2L75 37.2L75 30.9L76 30.9L76 46.0L77 46.0L77 43.6L78 43.6L78 54.6L79 54.6L79 39.7L80 39.7L80 40.3L81 40.3L81 33.5L82 33.5L82 43.0L83 43.0L83 41.3L84 41.3L84 35.1L85 35.1L85 52.5L86 52.5L86 59.9L87 59.9L87 58.2L88 58.2L88 38.0L89 38.0L89 36.4L90 36.4L90 48.9L91 48.9L91 54.5L92 54.5L92 48.7L93 48.7L93 36.6L94 36.6L94 25.7L95 25.7L95 29.7L96 29.7L96 37.1L97 37.1L97 49.4L98 49.4L98 47.8L99 47.8L99 31.7L100 31.7L100 37.7L101 37.7L101 22.6L102 22.6L102 50.4L103 50.4L103 34.6L104 34.6L104 51.5L105 51.5L105 49.9L106 49.9L106 44.4L107 44.4L107 36.3L108 36.3L108 54.7L109 54.7L109 33.1L110 33.1L110 42.4L111 42.4L111 57.3L112 57.3L112 38.4L113 38.4L113 46.5L114 46.5L114 48.0L115 48.0L115 30.3L116 30.3L116 27.3L117 27.3L117 47.1L118 47.1L118 37.5L119 37.5L119 32.5L120 32.5L120 39.5L121 39.5L121 33.1L122 33.1L122 41.0L123 41.0L123 22.3L124 22.3L124 1.3L125 1.3L125 41.1L126 41.1L126 30.2L127 30.2L127 18.1L128 18.1L128 40.7L129 40.7L129 41.2L130 41.2L130 11.8L131 11.8L131 45.9L132 45.9L132 41.8L133 41.8L133 45.8L134 45.8L134 26.2L135 26.2L135 35.4L136 35.4L136 29.7L137 29.7L137 47.9L138 47.9L138 59.8L139 59.8L139 36.7L140 36.7L140 40.3L141 40.3L141 49.6L142 49.6L142 39.0L143 39.0L143 40.8L144 40.8L144 39.0L145 39.0L145 43.6L146 43.6L146 38.0L147 38.0L147 29.5L148 29.5L148 41.8L149 41.8L149 16.2L150 16.2L150 21.3L151 21.3L151 43.0L152 43.0L152 47.6L153 47.6L153 32.3L154 32.3L154 34.8L155 34.8L155 47.6L156 47.6L156 48.8L157 48.8L157 33.0L158 33.0L158 22.6L159 22.6L159 41.3L160 41.3L160 36.0L161 36.0L161 47.5L162 47.5L162 28.0L163 28.0L163 30.5L164 30.5L164 27.0L165 27.0L165 23.6L166 23.6L166 35.6L167 35.6L167 31.8L168 31.8L168 44.5L169 44.5L169 45.9L170 45.9L170 35.3L171 35.3L171 42.3L172 42.3L172 49.2L173 49.2L173 49.4L174 49.4L174 44.7L175 44.7L175 38.6L176 38.6L176 39.7L177 39.7L177 23.7L178 23.7L178 41.3L179 41.3L179 48.4L180 48.4L180 51.3L181 51.3L181 25.2L182 25.2L182 53.8L183 53.8L183 41.1L184 41.1L184 47.5L185 47.5L185 38.1L186 38.1L186 50.8L187 50.8L187 45.5L188 45.5L188 37.8L189 37.8L189 43.1L190 43.1L190 58.1L191 58.1L191 59.7L192 59.7L192 65.4L193 65.4L193 57.2L194 57.2L194 45.9L195 45.9L195 21.1L196 21.1L196 27.3L197 27.3L197 33.2L198 33.2L198 30.6L199 30.6L199 32.8L200 32.8L200 38.8L201 38.8L201 45.3L202 45.3L202 40.3L203 40.3L203 40.1L204 40.1L204 46.3L205 46.3L205 52.8L206 52.8L206 28.0L207 28.0L207 28.6L208 28.6L208 57.5L209 57.5L209 65.9L210 65.9L210 33.5L211 33.5L211 39.5L212 39.5L212 38.9L213 38.9L213 32.2L214 32.2L214 40.1L215 40.1L215 28.9L216 28.9L216 59.1L217 59.1L217 64.1L218 64.1L218 44.9L219 44.9L219 50.6L220 50.6L220 44.6L221 44.6L221 48.0L222 48.0L222 50.6L223 50.6L223 51.8L224 51.8L224 45.2L225 45.2L225 43.4L226 43.4L226 54.4L227 54.4L227 22.3L228 22.3L228 48.2L229 48.2L229 48.1L230 48.1L230 43.6L231 43.6L231 26.9L232 26.9L232 40.0L233 40.0L233 27.0L234 27.0L234 47.0L235 47.0L235 57.0L236 57.0L236 30.2L237 30.2L237 45.2L238 45.2L238 41.9L239 41.9L239 27.8L240 27.8L240 46.1L241 46.1L241 43.3L242 43.3L242 32.0L243 32.0L243 33.7L244 33.7L244 47.8L245 47.8L245 29.1L246 29.1L246 43.6L247 43.6L247 14.5L248 14.5L248 44.0L249 44.0L249 34.0L250 34.0L250 30.6L251 30.6L251 40.1L252 40.1L252 24.0L253 24.0L253 28.9L254 28.9L254 46.7L255 46.7L255 46.6L256 46.6L256 47.7L257 47.7L257 44.9L258 44.9L258 54.1L259 54.1L259 37.0L260 37.0L260 42.7L261 42.7L261 30.8L262 30.8L262 59.2L263 59.2L263 31.7L264 31.7L264 55.4L265 55.4L265 45.1L266 45.1L266 44.0L267 44.0L267 46.1L268 46.1L268 44.6L269 44.6L269 45.4L270 45.4L270 41.9L271 41.9L271 40.6L272 40.6L272 48.7L273 48.7L273 29.5L274 29.5L274 45.7L275 45.7L275 35.0L276 35.0L276 44.4L277 44.4L277 40.0L278 40.0L278 40.0L279 40.0L279 44.9L280 44.9L280 49.6L281 49.6L281 43.7L282 43.7L282 49.5L283 49.5L283 20.7L284 20.7L284 41.8L285 41.8L285 38.1L286 38.1L286 32.4L287 32.4L287 43.1L288 43.1L288 39.5L289 39.5L289 43.8L290 43.8L290 47.5L291 47.5L291 38.8L292 38.8L292 52.7L293 52.7L293 58.2L294 58.2L294 43.7L295 43.7L295 48.6L296 48.6L296 36.9L297 36.9L297 21.2L298 21.2L298 47.0L299 47.0L299 45.6L300 45.6L300 38.7L301 38.7L301 55.4L302 55.4L302 44.6L303 44.6L303 50.5L304 50.5L304 36.3L305 36.3L305 51.8L306 51.8L306 40.1L307 40.1L307 28.4L308 28.4L308 38.0L309 38.0L309 42.7L310 42.7L310 36.5L311 36.5L311 34.4L312 34.4L312 43.7L313 43.7L313 25.0L314 25.0L314 51.6L315 51.6L315 34.1L316 34.1L316 41.8L317 41.8L317 54.1L318 54.1L318 48.3L319 48.3L319 48.2L320 48.2L320 62.5L321 62.5L321 38.6L322 38.6L322 46.6L323 46.6L323 52.5L324 52.5L324 59.4L325 59.4L325 50.1L326 50.1L326 46.2L327 46.2L327 31.7L328 31.7L328 51.5L329 51.5L329 55.6L330 55.6L330 55.8L331 55.8L331 66.1L332 66.1L332 32.7L333 32.7L333 66.7L334 66.7L334 65.8L335 65.8L335 49.0L336 49.0L336 49.4L337 49.4L337 27.4L338 27.4L338 31.3L339 31.3L339 37.1L340 37.1L340 30.9L341 30.9L341 23.2L342 23.2L342 26.2L343 26.2L343 37.1L344 37.1L344 30.0L345 30.0L345 35.4L346 35.4L346 12.3L347 12.3L347 1.7L348 1.7L348 10.4L349 10.4L349 29.0L350 29.0L350 27.7L351 27.7L351 25.9L352 25.9L352 24.6L353 24.6L353 25.2L354 25.2L354 29.1L355 29.1L355 32.2L356 32.2L356 15.3L357 15.3L357 30.6L358 30.6L358 16.1L359 16.1L359 21.3L360 21.3L360 39.1L361 39.1L361 28.9L362 28.9L362 34.8L363 34.8L363 19.8L364 19.8L364 22.2L365 22.2L365 38.9L366 38.9L366 40.6L367 40.6L367 44.3L368 44.3L368 35.5L369 35.5L369 31.6L370 31.6L370 25.9L371 25.9L371 39.6L372 39.6L372 42.5L373 42.5L373 33.0L374 33.0L374 36.3L375 36.3L375 43.9L376 43.9L376 33.3L377 33.3L377 25.6L378 25.6L378 18.9L379 18.9L379 26.3L380 26.3L380 32.1L381 32.1L381 30.8L382 30.8L382 43.9L383 43.9L383 30.5L384 30.5L384 46.0L385 46.0L385 49.3L386 49.3L386 34.5L387 34.5L387 33.2L388 33.2L388 43.9L389 43.9L389 41.2L390 41.2L390 57.0L391 57.0L391 30.6L392 30.6L392 48.9L393 48.9L393 45.1L394 45.1L394 51.6L395 51.6L395 60.9L396 60.9L396 37.5L397 37.5L397 36.0L398 36.0L398 36.6L399 36.6L399 58.8L400 58.8L400 37.1L401 37.1L401 43.2L402 43.2L402 38.6L403 38.6L403 49.0L404 49.0L404 42.1L405 42.1L405 48.9L406 48.9L406 55.8L407 55.8L407 22.6L408 22.6L408 51.2L409 51.2L409 31.2L410 31.2L410 42.0L411 42.0L411 61.4L412 61.4L412 64.5L413 64.5L413 51.9L414 51.9L414 57.7L415 57.7L415 31.8L416 31.8L416 42.0L417 42.0L417 42.9L418 42.9L418 48.5L419 48.5L419 42.7L420 42.7L420 39.4L421 39.4L421 37.5L422 37.5L422 55.2L423 55.2L423 43.5L424 43.5L424 55.6L425 55.6L425 58.2L426 58.2L426 34.3L427 34.3L427 48.9L428 48.9L428 48.0L429 48.0L429 43.7L430 43.7L430 42.8L431 42.8L431 58.0L432 58.0L432 56.3L433 56.3L433 48.1L434 48.1L434 1.9L435 1.9L435 3.4L436 3.4L436 29.9L437 29.9L437 20.2L438 20.2L438 37.1L439 37.1L439 16.8L440 16.8L440 27.7L441 27.7L441 25.9L442 25.9L442 4.9L443 4.9L443 33.2L444 33.2L444 28.4L445 28.4L445 19.1L446 19.1L446 11.0L447 11.0L447 3.6L448 3.6L448 23.7L449 23.7L449 34.6L450 34.6L450 32.6L451 32.6L451 8.0L452 8.0L452 23.8L453 23.8L453 27.7L454 27.7L454 25.0L455 25.0L455 35.3L456 35.3L456 43.4L457 43.4L457 38.7L458 38.7L458 25.7L459 25.7L459 21.6L460 21.6L460 36.1L461 36.1L461 17.8L462 17.8L462 29.1L463 29.1L463 32.0L464 32.0L464 29.9L465 29.9L465 35.1L466 35.1L466 39.3L467 39.3L467 24.3L468 24.3L468 43.4L469 43.4L469 44.0L470 44.0L470 45.7L471 45.7L471 53.0L472 53.0L472 55.3L473 55.3L473 34.5L474 34.5L474 29.6L475 29.6L475 41.9L476 41.9L476 51.3L477 51.3L477 59.9L478 59.9L478 48.6L479 48.6L479 60.1L480 60.1L480 38.5L481 38.5L481 36.4L482 36.4L482 19.3L483 19.3L483 50.2L484 50.2L484 46.9L485 46.9L485 27.1L486 27.1L486 27.3L487 27.3L487 21.5L488 21.5L488 18.2L489 18.2L489 40.2L490 40.2L490 17.6L491 17.6L491 19.7L492 19.7L492 55.6L493 55.6L493 37.7L494 37.7L494 50.2L495 50.2L495 34.8L496 34.8L496 49.9L497 49.9L497 43.1L498 43.1L498 18.2L499 18.2L499 52.0L500 52.0L500 24.8L501 24.8L501 41.1L502 41.1L502 16.1L503 16.1L503 42.4L504 42.4L504 51.5L505 51.5L505 44.5L506 44.5L506 36.8L507 36.8L507 23.0L508 23.0L508 40.4L509 40.4L509 40.6L510 40.6L510 33.6L511 33.6L511 29.0L512 29.0L512 51.6L513 51.6L513 25.6L514 25.6L514 39.8L515 39.8L515 28.4L516 28.4L516 47.4L517 47.4L517 35.3L518 35.3L518 23.4L519 23.4L519 41.6L520 41.6L520 30.8L521 30.8L521 37.9L522 37.9L522 36.6L523 36.6L523 24.6L524 24.6L524 36.3L525 36.3L525 48.1L526 48.1L526 34.0L527 34.0L527 19.3L528 19.3L528 24.7L529 24.7L529 43.1L530 43.1L530 36.3L531 36.3L531 24.0L532 24.0L532 23.7L533 23.7L533 20.0L534 20.0L534 1.3L535 1.3L535 1.3L536 1.3L536 7.6L537 7.6L537 13.7L538 13.7L538 1.3L539 1.3L539 16.7L540 16.7L540 1.3L541 1.3L541 7.7L542 7.7L542 37.3L543 37.3L543 15.0L544 15.0L544 19.3L545 19.3L545 16.1L546 16.1L546 1.3L547 1.3L547 23.3L548 23.3L548 33.4L549 33.4L549 18.0L550 18.0L550 30.5L551 30.5L551 13.0L552 13.0L552 17.2L553 17.2L553 50.7L554 50.7L554 8.6L555 8.6L555 31.9L556 31.9L556 40.3L557 40.3L557 35.7L558 35.7L558 32.6L559 32.6L559 29.3L560 29.3L560 26.4L561 26.4L561 39.6L562 39.6L562 23.3L563 23.3L563 41.3L564 41.3L564 40.8L565 40.8L565 35.4L566 35.4L566 37.6L567 37.6L567 37.1L568 37.1L568 33.5L569 33.5L569 20.8L570 20.8L570 33.4L571 33.4L571 38.1L572 38.1L572 33.2L573 33.2L573 13.4L574 13.4L574 36.4L575 36.4L575 23.7L576 23.7L576 37.8L577 37.8L577 43.8L578 43.8L578 31.5L579 31.5L579 35.5L580 35.5L580 41.1L581 41.1L581 17.4L582 17.4L582 16.7L583 16.7L583 30.9L584 30.9L584 28.1L585 28.1L585 20.3L586 20.3L586 39.5L587 39.5L587 18.3L588 18.3L588 27.4L589 27.4L589 27.5L590 27.5L590 27.4L591 27.4L591 21.2L592 21.2L592 18.8L593 18.8L593 37.6L594 37.6L594 46.4L595 46.4L595 33.7L596 33.7L596 1.3L597 1.3L597 29.0L598 29.0L598 44.9L599 44.9L599 31.0L600 31.0L600 10.9L601 10.9L601 36.9L602 36.9L602 38.6L603 38.6L603 31.4L604 31.4L604 44.8L605 44.8L605 31.9L606 31.9L606 27.1L607 27.1L607 43.9L608 43.9L608 38.5L609 38.5L609 51.5L610 51.5L610 40.0L611 40.0L611 56.1L612 56.1L612 36.1L613 36.1L613 49.7L614 49.7L614 56.2L615 56.2L615 65.4L616 65.4L616 54.4L617 54.4L617 64.5L618 64.5L618 32.7L619 32.7L619 60.2L620 60.2L620 31.8L621 31.8L621 39.5L622 39.5L622 47.1L623 47.1L623 43.0L624 43.0L624 33.4L625 33.4L625 57.5L626 57.5L626 29.5L627 29.5L627 37.1L628 37.1L628 47.3L629 47.3L629 45.6L630 45.6L630 13.5L631 13.5L631 8.4L632 8.4L632 25.9L633 25.9L633 24.3L634 24.3L634 25.2L635 25.2L635 13.1L636 13.1L636 27.8L637 27.8L637 23.2L638 23.2L638 22.3L639 22.3L639 31.1L640 31.1L640 20.8L641 20.8L641 19.9L642 19.9L642 37.3L643 37.3L643 27.8L644 27.8L644 32.4L645 32.4L645 18.4L646 18.4L646 12.9L647 12.9L647 10.1L648 10.1L648 8.2L649 8.2L649 41.6L650 41.6L650 24.6L651 24.6L651 14.9L652 14.9L652 40.4L653 40.4L653 39.6L654 39.6L654 14.3L655 14.3L655 25.8L656 25.8L656 32.4L657 32.4L657 26.5L658 26.5L658 41.6L659 41.6L659 48.9L660 48.9L660 54.3L661 54.3L661 53.4L662 53.4L662 28.5L663 28.5L663 35.1L664 35.1L664 46.2L665 46.2L665 25.8L666 25.8L666 47.8L667 47.8L667 39.6L668 39.6L668 50.3L669 50.3L669 23.9L670 23.9L670 51.9L671 51.9L671 42.6L672 42.6L672 33.4L673 33.4L673 42.2L674 42.2L674 42.9L675 42.9L675 48.6L676 48.6L676 45.1L677 45.1L677 38.5L678 38.5L678 42.4L679 42.4L679 35.6L680 35.6L680 121.2L679 121.2L679 112.4L678 112.4L678 115.6L677 115.6L677 136.6L676 136.6L676 113.6L675 113.6L675 120.7L674 120.7L674 130.3L673 130.3L673 106.7L672 106.7L672 131.5L671 131.5L671 121.2L670 121.2L670 127.0L669 127.0L669 122.6L668 122.6L668 133.1L667 133.1L667 122.8L666 122.8L666 120.6L665 120.6L665 137.6L664 137.6L664 128.6L663 128.6L663 130.0L662 130.0L662 117.6L661 117.6L661 123.0L660 123.0L660 127.6L659 127.6L659 119.2L658 119.2L658 136.9L657 136.9L657 128.3L656 128.3L656 144.9L655 144.9L655 135.7L654 135.7L654 129.6L653 129.6L653 116.0L652 116.0L652 138.2L651 138.2L651 141.0L650 141.0L650 153.7L649 153.7L649 147.7L648 147.7L648 142.8L647 142.8L647 148.8L646 148.8L646 137.7L645 137.7L645 132.6L644 132.6L644 117.1L643 117.1L643 135.1L642 135.1L642 157.0L641 157.0L641 132.2L640 132.2L640 142.8L639 142.8L639 158.1L638 158.1L638 158.7L637 158.7L637 120.3L636 120.3L636 150.3L635 150.3L635 158.7L634 158.7L634 136.5L633 136.5L633 154.8L632 154.8L632 158.7L631 158.7L631 157.2L630 157.2L630 133.0L629 133.0L629 116.5L628 116.5L628 121.2L627 121.2L627 133.8L626 133.8L626 117.5L625 117.5L625 108.4L624 108.4L624 127.0L623 127.0L623 102.4L622 102.4L622 119.0L621 119.0L621 106.2L620 106.2L620 110.4L619 110.4L619 108.0L618 108.0L618 131.4L617 131.4L617 114.9L616 114.9L616 111.9L615 111.9L615 129.3L614 129.3L614 130.7L613 130.7L613 121.5L612 121.5L612 120.0L611 120.0L611 115.8L610 115.8L610 114.0L609 114.0L609 130.4L608 130.4L608 115.6L607 115.6L607 94.5L606 94.5L606 113.5L605 113.5L605 116.1L604 116.1L604 125.9L603 125.9L603 107.2L602 107.2L602 110.0L601 110.0L601 116.6L600 116.6L600 126.4L599 126.4L599 130.6L598 130.6L598 132.0L597 132.0L597 112.0L596 112.0L596 131.7L595 131.7L595 140.4L594 140.4L594 119.3L593 119.3L593 115.6L592 115.6L592 122.5L591 122.5L591 136.8L590 136.8L590 111.9L589 111.9L589 125.9L588 125.9L588 148.8L587 148.8L587 119.1L586 119.1L586 129.1L585 129.1L585 134.7L584 134.7L584 117.7L583 117.7L583 136.6L582 136.6L582 111.3L581 111.3L581 112.2L580 112.2L580 91.5L579 91.5L579 119.3L578 119.3L578 123.9L577 123.9L577 119.8L576 119.8L576 120.5L575 120.5L575 107.0L574 107.0L574 114.4L573 114.4L573 138.0L572 138.0L572 135.8L571 135.8L571 130.5L570 130.5L570 119.5L569 119.5L569 124.3L568 124.3L568 111.1L567 111.1L567 114.4L566 114.4L566 104.1L565 104.1L565 120.9L564 120.9L564 122.2L563 122.2L563 131.0L562 131.0L562 103.5L561 103.5L561 131.2L560 131.2L560 118.7L559 118.7L559 123.1L558 123.1L558 146.8L557 146.8L557 122.0L556 122.0L556 134.5L555 134.5L555 136.3L554 136.3L554 120.6L553 120.6L553 137.4L552 137.4L552 125.4L551 125.4L551 140.6L550 140.6L550 139.7L549 139.7L549 127.7L548 127.7L548 132.9L547 132.9L547 143.8L546 143.8L546 158.7L545 158.7L545 158.7L544 158.7L544 149.6L543 149.6L543 138.9L542 138.9L542 145.6L541 145.6L541 158.6L540 158.6L540 143.8L539 143.8L539 149.0L538 149.0L538 141.1L537 141.1L537 154.8L536 154.8L536 147.0L535 147.0L535 158.7L534 158.7L534 158.7L533 158.7L533 124.3L532 124.3L532 126.6L531 126.6L531 108.9L530 108.9L530 128.9L529 128.9L529 110.2L528 110.2L528 119.1L527 119.1L527 106.3L526 106.3L526 101.1L525 101.1L525 112.7L524 112.7L524 98.6L523 98.6L523 120.1L522 120.1L522 116.2L521 116.2L521 101.2L520 101.2L520 120.3L519 120.3L519 98.8L518 98.8L518 113.9L517 113.9L517 106.0L516 106.0L516 126.5L515 126.5L515 112.5L514 112.5L514 121.2L513 121.2L513 123.5L512 123.5L512 128.1L511 128.1L511 122.8L510 122.8L510 124.4L509 124.4L509 107.2L508 107.2L508 125.6L507 125.6L507 120.0L506 120.0L506 125.2L505 125.2L505 102.9L504 102.9L504 103.1L503 103.1L503 117.8L502 117.8L502 120.9L501 120.9L501 120.5L500 120.5L500 139.3L499 139.3L499 114.8L498 114.8L498 127.0L497 127.0L497 120.3L496 120.3L496 127.1L495 127.1L495 126.8L494 126.8L494 140.1L493 140.1L493 129.4L492 129.4L492 121.3L491 121.3L491 130.1L490 130.1L490 116.8L489 116.8L489 128.2L488 128.2L488 113.4L487 113.4L487 130.8L486 130.8L486 131.6L485 131.6L485 126.6L484 126.6L484 130.0L483 130.0L483 127.4L482 127.4L482 136.0L481 136.0L481 114.0L480 114.0L480 113.0L479 113.0L479 119.2L478 119.2L478 137.4L477 137.4L477 109.5L476 109.5L476 122.7L475 122.7L475 117.2L474 117.2L474 113.1L473 113.1L473 109.4L472 109.4L472 126.2L471 126.2L471 103.2L470 103.2L470 129.2L469 129.2L469 133.3L468 133.3L468 130.1L467 130.1L467 153.0L466 153.0L466 129.8L465 129.8L465 135.2L464 135.2L464 142.2L463 142.2L463 134.8L462 134.8L462 142.7L461 142.7L461 130.0L460 130.0L460 152.4L459 152.4L459 136.1L458 136.1L458 154.3L457 154.3L457 124.8L456 124.8L456 146.8L455 146.8L455 136.1L454 136.1L454 134.6L453 134.6L453 141.0L452 141.0L452 137.6L451 137.6L451 126.3L450 126.3L450 157.2L449 157.2L449 120.9L448 120.9L448 128.6L447 128.6L447 136.1L446 136.1L446 124.0L445 124.0L445 125.2L444 125.2L444 130.0L443 130.0L443 140.3L442 140.3L442 141.6L441 141.6L441 117.0L440 117.0L440 134.6L439 134.6L439 130.2L438 130.2L438 156.2L437 156.2L437 126.8L436 126.8L436 153.3L435 153.3L435 139.4L434 139.4L434 128.2L433 128.2L433 111.0L432 111.0L432 102.3L431 102.3L431 114.1L430 114.1L430 104.9L429 104.9L429 131.2L428 131.2L428 97.8L427 97.8L427 132.8L426 132.8L426 119.8L425 119.8L425 140.0L424 140.0L424 124.4L423 124.4L423 129.5L422 129.5L422 119.6L421 119.6L421 123.8L420 123.8L420 115.8L419 115.8L419 116.3L418 116.3L418 134.0L417 134.0L417 127.3L416 127.3L416 114.2L415 114.2L415 113.9L414 113.9L414 113.9L413 113.9L413 120.2L412 120.2L412 104.0L411 104.0L411 96.4L410 96.4L410 119.9L409 119.9L409 113.2L408 113.2L408 131.4L407 131.4L407 106.7L406 106.7L406 100.8L405 100.8L405 116.5L404 116.5L404 112.6L403 112.6L403 108.5L402 108.5L402 128.7L401 128.7L401 117.1L400 117.1L400 114.0L399 114.0L399 121.2L398 121.2L398 121.2L397 121.2L397 105.3L396 105.3L396 113.2L395 113.2L395 126.5L394 126.5L394 129.1L393 129.1L393 115.8L392 115.8L392 106.9L391 106.9L391 105.9L390 105.9L390 103.9L389 103.9L389 133.2L388 133.2L388 117.4L387 117.4L387 107.6L386 107.6L386 101.5L385 101.5L385 104.5L384 104.5L384 130.5L383 130.5L383 132.2L382 132.2L382 130.5L381 130.5L381 122.9L380 122.9L380 123.2L379 123.2L379 119.1L378 119.1L378 113.7L377 113.7L377 126.6L376 126.6L376 128.0L375 128.0L375 108.1L374 108.1L374 112.4L373 112.4L373 131.1L372 131.1L372 118.2L371 118.2L371 117.4L370 117.4L370 119.8L369 119.8L369 125.9L368 125.9L368 130.2L367 130.2L367 121.4L366 121.4L366 140.0L365 140.0L365 124.3L364 124.3L364 131.2L363 131.2L363 118.0L362 118.0L362 134.1L361 134.1L361 119.7L360 119.7L360 132.1L359 132.1L359 116.6L358 116.6L358 141.6L357 141.6L357 129.9L356 129.9L356 135.0L355 135.0L355 122.4L354 122.4L354 133.1L353 133.1L353 157.9L352 157.9L352 158.7L351 158.7L351 141.6L350 141.6L350 130.6L349 130.6L349 143.8L348 143.8L348 132.6L347 132.6L347 155.7L346 155.7L346 122.1L345 122.1L345 137.3L344 137.3L344 147.7L343 147.7L343 148.5L342 148.5L342 130.2L341 130.2L341 144.5L340 144.5L340 134.8L339 134.8L339 158.7L338 158.7L338 141.7L337 141.7L337 113.6L336 113.6L336 126.4L335 126.4L335 123.8L334 123.8L334 107.6L333 107.6L333 127.6L332 127.6L332 140.0L331 140.0L331 141.5L330 141.5L330 128.8L329 128.8L329 118.5L328 118.5L328 111.1L327 111.1L327 118.4L326 118.4L326 127.2L325 127.2L325 122.6L324 122.6L324 119.3L323 119.3L323 127.3L322 127.3L322 122.6L321 122.6L321 127.5L320 127.5L320 129.4L319 129.4L319 108.1L318 108.1L318 128.5L317 128.5L317 118.1L316 118.1L316 130.4L315 130.4L315 111.5L314 111.5L314 112.9L313 112.9L313 116.4L312 116.4L312 113.9L311 113.9L311 103.6L310 103.6L310 98.1L309 98.1L309 107.5L308 107.5L308 107.9L307 107.9L307 112.1L306 112.1L306 103.6L305 103.6L305 128.8L304 128.8L304 101.7L303 101.7L303 109.0L302 109.0L302 128.0L301 128.0L301 128.6L300 128.6L300 110.9L299 110.9L299 105.4L298 105.4L298 119.1L297 119.1L297 124.7L296 124.7L296 124.8L295 124.8L295 120.0L294 120.0L294 127.5L293 127.5L293 117.7L292 117.7L292 117.1L291 117.1L291 100.7L290 100.7L290 117.7L289 117.7L289 121.0L288 121.0L288 126.3L287 126.3L287 112.4L286 112.4L286 113.2L285 113.2L285 126.3L284 126.3L284 106.2L283 106.2L283 129.1L282 129.1L282 110.4L281 110.4L281 113.2L280 113.2L280 111.7L279 111.7L279 139.0L278 139.0L278 120.1L277 120.1L277 135.6L276 135.6L276 142.5L275 142.5L275 135.0L274 135.0L274 117.2L273 117.2L273 122.6L272 122.6L272 123.1L271 123.1L271 129.3L270 129.3L270 113.6L269 113.6L269 125.1L268 125.1L268 129.0L267 129.0L267 123.2L266 123.2L266 115.0L265 115.0L265 115.9L264 115.9L264 108.6L263 108.6L263 114.2L262 114.2L262 108.1L261 108.1L261 115.2L260 115.2L260 135.9L259 135.9L259 125.9L258 125.9L258 125.7L257 125.7L257 141.5L256 141.5L256 125.3L255 125.3L255 115.3L254 115.3L254 117.5L253 117.5L253 124.3L252 124.3L252 111.9L251 111.9L251 122.3L250 122.3L250 129.2L249 129.2L249 120.2L248 120.2L248 128.0L247 128.0L247 130.2L246 130.2L246 126.8L245 126.8L245 120.5L244 120.5L244 136.8L243 136.8L243 131.8L242 131.8L242 137.5L241 137.5L241 125.4L240 125.4L240 109.8L239 109.8L239 141.1L238 141.1L238 133.2L237 133.2L237 132.7L236 132.7L236 123.6L235 123.6L235 123.4L234 123.4L234 120.4L233 120.4L233 113.7L232 113.7L232 123.0L231 123.0L231 121.5L230 121.5L230 123.5L229 123.5L229 132.4L228 132.4L228 115.8L227 115.8L227 126.5L226 126.5L226 127.5L225 127.5L225 104.5L224 104.5L224 118.9L223 118.9L223 108.8L222 108.8L222 110.8L221 110.8L221 116.6L220 116.6L220 116.6L219 116.6L219 97.8L218 97.8L218 121.5L217 121.5L217 116.8L216 116.8L216 121.1L215 121.1L215 119.5L214 119.5L214 132.4L213 132.4L213 131.0L212 131.0L212 110.1L211 110.1L211 134.5L210 134.5L210 117.1L209 117.1L209 124.6L208 124.6L208 130.1L207 130.1L207 115.8L206 115.8L206 101.1L205 101.1L205 118.2L204 118.2L204 127.6L203 127.6L203 111.6L202 111.6L202 125.8L201 125.8L201 132.7L200 132.7L200 110.2L199 110.2L199 118.3L198 118.3L198 127.3L197 127.3L197 116.2L196 116.2L196 111.9L195 111.9L195 118.7L194 118.7L194 128.0L193 128.0L193 120.9L192 120.9L192 126.7L191 126.7L191 131.4L190 131.4L190 126.6L189 126.6L189 116.5L188 116.5L188 107.1L187 107.1L187 111.8L186 111.8L186 125.7L185 125.7L185 89.8L184 89.8L184 118.7L183 118.7L183 102.8L182 102.8L182 109.7L181 109.7L181 93.4L180 93.4L180 115.4L179 115.4L179 114.4L178 114.4L178 105.8L177 105.8L177 112.1L176 112.1L176 120.8L175 120.8L175 118.5L174 118.5L174 125.2L173 125.2L173 118.4L172 118.4L172 123.4L171 123.4L171 116.6L170 116.6L170 138.5L169 138.5L169 116.9L168 116.9L168 118.6L167 118.6L167 115.9L166 115.9L166 113.0L165 113.0L165 129.3L164 129.3L164 140.5L163 140.5L163 120.0L162 120.0L162 128.1L161 128.1L161 140.6L160 140.6L160 123.4L159 123.4L159 147.9L158 147.9L158 136.6L157 136.6L157 132.0L156 132.0L156 133.8L155 133.8L155 127.0L154 127.0L154 146.1L153 146.1L153 125.4L152 125.4L152 136.5L151 136.5L151 118.6L150 118.6L150 144.4L149 144.4L149 115.8L148 115.8L148 116.7L147 116.7L147 147.0L146 147.0L146 147.6L145 147.6L145 125.2L144 125.2L144 117.7L143 117.7L143 124.5L142 124.5L142 125.4L141 125.4L141 106.2L140 106.2L140 117.9L139 117.9L139 122.6L138 122.6L138 115.6L137 115.6L137 119.5L136 119.5L136 131.5L135 131.5L135 130.1L134 130.1L134 127.7L133 127.7L133 119.8L132 119.8L132 118.5L131 118.5L131 147.3L130 147.3L130 124.5L129 124.5L129 125.6L128 125.6L128 152.7L127 152.7L127 127.6L126 127.6L126 116.9L125 116.9L125 118.2L124 118.2L124 139.1L123 139.1L123 134.4L122 134.4L122 123.6L121 123.6L121 102.8L120 102.8L120 112.4L119 112.4L119 105.5L118 105.5L118 124.2L117 124.2L117 119.6L116 119.6L116 121.0L115 121.0L115 107.6L114 107.6L114 122.8L113 122.8L113 135.9L112 135.9L112 102.8L111 102.8L111 114.2L110 114.2L110 125.1L109 125.1L109 124.1L108 124.1L108 116.5L107 116.5L107 107.4L106 107.4L106 119.8L105 119.8L105 116.5L104 116.5L104 115.4L103 115.4L103 110.9L102 110.9L102 115.7L101 115.7L101 99.9L100 99.9L100 119.7L99 119.7L99 100.0L98 100.0L98 103.2L97 103.2L97 112.7L96 112.7L96 131.9L95 131.9L95 117.0L94 117.0L94 104.1L93 104.1L93 105.1L92 105.1L92 119.6L91 119.6L91 114.0L90 114.0L90 134.0L89 134.0L89 123.9L88 123.9L88 126.6L87 126.6L87 115.3L86 115.3L86 102.4L85 102.4L85 108.6L84 108.6L84 111.1L83 111.1L83 123.4L82 123.4L82 147.5L81 147.5L81 131.8L80 131.8L80 104.1L79 104.1L79 141.2L78 141.2L78 141.5L77 141.5L77 126.5L76 126.5L76 119.2L75 119.2L75 131.3L74 131.3L74 117.6L73 117.6L73 126.4L72 126.4L72 134.3L71 134.3L71 124.0L70 124.0L70 131.2L69 131.2L69 117.6L68 117.6L68 140.1L67 140.1L67 130.6L66 130.6L66 133.3L65 133.3L65 130.9L64 130.9L64 141.5L63 141.5L63 142.4L62 142.4L62 133.9L61 133.9L61 112.0L60 112.0L60 132.3L59 132.3L59 118.5L58 118.5L58 125.7L57 125.7L57 125.1L56 125.1L56 132.5L55 132.5L55 123.6L54 123.6L54 131.9L53 131.9L53 129.2L52 129.2L52 126.2L51 126.2L51 141.1L50 141.1L50 120.0L49 120.0L49 109.3L48 109.3L48 112.8L47 112.8L47 115.9L46 115.9L46 135.3L45 135.3L45 117.5L44 117.5L44 125.6L43 125.6L43 114.9L42 114.9L42 133.7L41 133.7L41 126.2L40 126.2L40 125.8L39 125.8L39 119.8L38 119.8L38 115.5L37 115.5L37 132.2L36 132.2L36 117.7L35 117.7L35 116.2L34 116.2L34 124.3L33 124.3L33 129.4L32 129.4L32 121.0L31 121.0L31 143.5L30 143.5L30 134.4L29 134.4L29 146.7L28 146.7L28 145.3L27 145.3L27 142.1L26 142.1L26 141.6L25 141.6L25 149.1L24 149.1L24 144.3L23 144.3L23 128.9L22 128.9L22 127.2L21 127.2L21 153.3L20 153.3L20 143.4L19 143.4L19 136.5L18 136.5L18 130.3L17 130.3L17 138.4L16 138.4L16 128.1L15 128.1L15 148.3L14 148.3L14 158.7L13 158.7L13 158.7L12 158.7L12 139.0L11 139.0L11 149.9L10 149.9L10 123.3L9 123.3L9 143.6L8 143.6L8 129.9L7 129.9L7 148.5L6 148.5L6 158.7L5 158.7L5 134.1L4 134.1L4 146.3L3 146.3L3 136.9L2 136.9L2 141.1L1 141.1L1 158.7L0 158.7Z" fill="#3232c8"/><path d="M0 56.0L1 56.0L1 56.7L2 56.7L2 56.4L3 56.4L3 56.6L4 56.6L4 55.2L5 55.2L5 54.1L6 54.1L6 55.0L7 55.0L7 54.6L8 54.6L8 54.2L9 54.2L9 52.4L10 52.4L10 53.1L11 53.1L11 53.8L12 53.8L12 53.3L13 53.3L13 55.3L14 55.3L14 55.3L15 55.3L15 57.1L16 57.1L16 58.9L17 58.9L17 58.9L18 58.9L18 60.5L19 60.5L19 60.7L20 60.7L20 59.6L21 59.6L21 61.0L22 61.0L22 59.7L23 59.7L23 60.0L24 60.0L24 60.2L25 60.2L25 59.1L26 59.1L26 57.5L27 57.5L27 57.2L28 57.2L28 56.8L29 56.8L29 56.3L30 56.3L30 56.7L31 56.7L31 58.3L32 58.3L32 58.4L33 58.4L33 58.6L34 58.6L34 59.1L35 59.1L35 60.7L36 60.7L36 61.2L37 61.2L37 60.6L38 60.6L38 61.3L39 61.3L39 63.2L40 63.2L40 63.2L41 63.2L41 62.0L42 62.0L42 63.3L43 63.3L43 63.1L44 63.1L44 62.3L45 62.3L45 63.0L46 63.0L46 62.4L47 62.4L47 62.4L48 62.4L48 62.3L49 62.3L49 61.7L50 61.7L50 62.8L51 62.8L51 61.2L52 61.2L52 62.5L53 62.5L53 60.6L54 60.6L54 61.2L55 61.2L55 58.8L56 58.8L56 58.2L57 58.2L57 57.7L58 57.7L58 57.6L59 57.6L59 57.0L60 57.0L60 61.9L61 61.9L61 55.1L62 55.1L62 55.5L63 55.5L63 56.5L64 56.5L64 58.4L65 58.4L65 58.3L66 58.3L66 59.0L67 59.0L67 59.5L68 59.5L68 61.4L69 61.4L69 62.2L70 62.2L70 61.9L71 61.9L71 61.4L72 61.4L72 61.0L73 61.0L73 61.5L74 61.5L74 61.6L75 61.6L75 59.8L76 59.8L76 60.5L77 60.5L77 60.1L78 60.1L78 59.2L79 59.2L79 58.5L80 58.5L80 60.0L81 60.0L81 60.2L82 60.2L82 59.8L83 59.8L83 60.3L84 60.3L84 59.2L85 59.2L85 61.0L86 61.0L86 60.1L87 60.1L87 59.7L88 59.7L88 60.8L89 60.8L89 61.0L90 61.0L90 61.4L91 61.4L91 61.0L92 61.0L92 61.3L93 61.3L93 61.9L94 61.9L94 61.9L95 61.9L95 60.4L96 60.4L96 60.5L97 60.5L97 61.4L98 61.4L98 60.9L99 60.9L99 61.0L100 61.0L100 60.5L101 60.5L101 60.9L102 60.9L102 60.7L103 60.7L103 61.6L104 61.6L104 61.5L105 61.5L105 62.3L106 62.3L106 61.7L107 61.7L107 62.1L108 62.1L108 60.7L109 60.7L109 61.4L110 61.4L110 61.9L111 61.9L111 61.0L112 61.0L112 61.0L113 61.0L113 62.2L114 62.2L114 62.8L115 62.8L115 62.6L116 62.6L116 62.9L117 62.9L117 64.2L118 64.2L118 63.8L119 63.8L119 63.8L120 63.8L120 63.8L121 63.8L121 62.9L122 62.9L122 60.5L123 60.5L123 58.6L124 58.6L124 59.4L125 59.4L125 59.0L126 59.0L126 58.2L127 58.2L127 57.5L128 57.5L128 57.4L129 57.4L129 56.4L130 56.4L130 56.3L131 56.3L131 56.8L132 56.8L132 57.7L133 57.7L133 57.7L134 57.7L134 57.9L135 57.9L135 58.9L136 58.9L136 60.8L137 60.8L137 60.2L138 60.2L138 62.4L139 62.4L139 63.2L140 63.2L140 62.0L141 62.0L141 62.3L142 62.3L142 62.3L143 62.3L143 63.3L144 63.3L144 62.5L145 62.5L145 63.3L146 63.3L146 62.2L147 62.2L147 62.9L148 62.9L148 61.5L149 61.5L149 62.9L150 62.9L150 62.2L151 62.2L151 62.3L152 62.3L152 62.2L153 62.2L153 62.0L154 62.0L154 62.5L155 62.5L155 63.9L156 63.9L156 62.7L157 62.7L157 63.0L158 63.0L158 63.8L159 63.8L159 63.5L160 63.5L160 63.7L161 63.7L161 64.4L162 64.4L162 63.7L163 63.7L163 64.1L164 64.1L164 64.1L165 64.1L165 63.8L166 63.8L166 63.8L167 63.8L167 63.4L168 63.4L168 62.8L169 62.8L169 62.5L170 62.5L170 61.8L171 61.8L171 62.3L172 62.3L172 63.6L173 63.6L173 63.4L174 63.4L174 62.4L175 62.4L175 62.3L176 62.3L176 61.7L177 61.7L177 61.7L178 61.7L178 62.8L179 62.8L179 62.0L180 62.0L180 61.2L181 61.2L181 61.8L182 61.8L182 61.4L183 61.4L183 60.9L184 60.9L184 61.3L185 61.3L185 59.8L186 59.8L186 59.3L187 59.3L187 58.5L188 58.5L188 59.1L189 59.1L189 59.2L190 59.2L190 58.2L191 58.2L191 59.7L192 59.7L192 65.4L193 65.4L193 60.4L194 60.4L194 60.2L195 60.2L195 61.1L196 61.1L196 60.7L197 60.7L197 60.9L198 60.9L198 63.0L199 63.0L199 62.3L200 62.3L200 62.3L201 62.3L201 62.5L202 62.5L202 63.4L203 63.4L203 62.4L204 62.4L204 63.8L205 63.8L205 64.5L206 64.5L206 64.8L207 64.8L207 64.0L208 64.0L208 65.1L209 65.1L209 65.9L210 65.9L210 64.1L211 64.1L211 65.3L212 65.3L212 64.0L213 64.0L213 63.6L214 63.6L214 63.9L215 63.9L215 64.5L216 64.5L216 64.9L217 64.9L217 64.1L218 64.1L218 63.3L219 63.3L219 63.5L220 63.5L220 63.3L221 63.3L221 64.3L222 64.3L222 63.5L223 63.5L223 62.5L224 62.5L224 61.1L225 61.1L225 58.8L226 58.8L226 56.8L227 56.8L227 57.3L228 57.3L228 56.7L229 56.7L229 56.0L230 56.0L230 55.4L231 55.4L231 55.8L232 55.8L232 57.8L233 57.8L233 57.6L234 57.6L234 58.1L235 58.1L235 59.2L236 59.2L236 60.4L237 60.4L237 61.6L238 61.6L238 62.4L239 62.4L239 62.7L240 62.7L240 63.7L241 63.7L241 63.1L242 63.1L242 62.7L243 62.7L243 62.9L244 62.9L244 61.6L245 61.6L245 60.9L246 60.9L246 61.1L247 61.1L247 60.8L248 60.8L248 59.7L249 59.7L249 60.6L250 60.6L250 60.3L251 60.3L251 60.3L252 60.3L252 59.6L253 59.6L253 60.4L254 60.4L254 61.6L255 61.6L255 61.5L256 61.5L256 61.1L257 61.1L257 62.0L258 62.0L258 62.1L259 62.1L259 62.0L260 62.0L260 61.2L261 61.2L261 61.1L262 61.1L262 62.7L263 62.7L263 61.9L264 61.9L264 61.8L265 61.8L265 61.6L266 61.6L266 61.1L267 61.1L267 60.4L268 60.4L268 60.7L269 60.7L269 60.2L270 60.2L270 60.7L271 60.7L271 59.8L272 59.8L272 59.8L273 59.8L273 61.2L274 61.2L274 61.2L275 61.2L275 61.3L276 61.3L276 61.3L277 61.3L277 63.0L278 63.0L278 62.4L279 62.4L279 62.1L280 62.1L280 63.6L281 63.6L281 62.3L282 62.3L282 63.3L283 63.3L283 61.4L284 61.4L284 62.9L285 62.9L285 62.1L286 62.1L286 62.2L287 62.2L287 61.5L288 61.5L288 60.8L289 60.8L289 60.7L290 60.7L290 60.8L291 60.8L291 60.8L292 60.8L292 60.1L293 60.1L293 61.5L294 61.5L294 60.6L295 60.6L295 61.3L296 61.3L296 62.2L297 62.2L297 62.3L298 62.3L298 60.9L299 60.9L299 61.6L300 61.6L300 62.1L301 62.1L301 62.9L302 62.9L302 60.9L303 60.9L303 61.5L304 61.5L304 61.9L305 61.9L305 61.7L306 61.7L306 60.6L307 60.6L307 60.6L308 60.6L308 61.3L309 61.3L309 60.5L310 60.5L310 60.5L311 60.5L311 60.0L312 60.0L312 61.5L313 61.5L313 60.1L314 60.1L314 60.6L315 60.6L315 59.1L316 59.1L316 59.7L317 59.7L317 60.0L318 60.0L318 58.7L319 58.7L319 58.5L320 58.5L320 62.5L321 62.5L321 59.8L322 59.8L322 60.3L323 60.3L323 58.8L324 58.8L324 59.6L325 59.6L325 60.2L326 60.2L326 61.3L327 61.3L327 61.2L328 61.2L328 61.3L329 61.3L329 61.8L330 61.8L330 61.2L331 61.2L331 66.1L332 66.1L332 61.7L333 61.7L333 66.7L334 66.7L334 65.8L335 65.8L335 63.3L336 63.3L336 63.6L337 63.6L337 56.8L338 56.8L338 57.7L339 57.7L339 58.4L340 58.4L340 58.6L341 58.6L341 59.1L342 59.1L342 60.1L343 60.1L343 59.9L344 59.9L344 60.1L345 60.1L345 58.9L346 58.9L346 60.2L347 60.2L347 59.8L348 59.8L348 61.2L349 61.2L349 60.5L350 60.5L350 61.3L351 61.3L351 61.6L352 61.6L352 60.5L353 60.5L353 60.6L354 60.6L354 59.3L355 59.3L355 57.1L356 57.1L356 57.6L357 57.6L357 57.0L358 57.0L358 55.9L359 55.9L359 54.4L360 54.4L360 55.9L361 55.9L361 56.3L362 56.3L362 55.1L363 55.1L363 57.0L364 57.0L364 57.0L365 57.0L365 57.8L366 57.8L366 58.7L367 58.7L367 58.0L368 58.0L368 58.3L369 58.3L369 59.7L370 59.7L370 60.0L371 60.0L371 58.7L372 58.7L372 59.8L373 59.8L373 60.6L374 60.6L374 61.4L375 61.4L375 61.5L376 61.5L376 60.2L377 60.2L377 60.9L378 60.9L378 60.5L379 60.5L379 61.2L380 61.2L380 61.0L381 61.0L381 60.6L382 60.6L382 60.0L383 60.0L383 60.4L384 60.4L384 58.9L385 58.9L385 57.9L386 57.9L386 58.2L387 58.2L387 56.8L388 56.8L388 56.3L389 56.3L389 55.4L390 55.4L390 57.0L391 57.0L391 56.3L392 56.3L392 57.3L393 57.3L393 56.8L394 56.8L394 58.0L395 58.0L395 60.9L396 60.9L396 58.7L397 58.7L397 58.0L398 58.0L398 59.7L399 59.7L399 58.8L400 58.8L400 59.7L401 59.7L401 60.3L402 60.3L402 58.5L403 58.5L403 58.9L404 58.9L404 58.5L405 58.5L405 59.5L406 59.5L406 59.9L407 59.9L407 58.5L408 58.5L408 58.8L409 58.8L409 58.0L410 58.0L410 57.9L411 57.9L411 61.4L412 61.4L412 64.5L413 64.5L413 58.5L414 58.5L414 58.8L415 58.8L415 57.9L416 57.9L416 59.0L417 59.0L417 58.8L418 58.8L418 58.5L419 58.5L419 57.8L420 57.8L420 58.3L421 58.3L421 58.5L422 58.5L422 59.3L423 59.3L423 58.3L424 58.3L424 60.1L425 60.1L425 60.8L426 60.8L426 60.4L427 60.4L427 62.0L428 62.0L428 62.7L429 62.7L429 63.6L430 63.6L430 63.7L431 63.7L431 63.8L432 63.8L432 62.7L433 62.7L433 63.3L434 63.3L434 56.9L435 56.9L435 55.7L436 55.7L436 55.4L437 55.4L437 56.5L438 56.5L438 57.3L439 57.3L439 55.9L440 55.9L440 56.3L441 56.3L441 56.3L442 56.3L442 55.9L443 55.9L443 57.1L444 57.1L444 56.8L445 56.8L445 55.5L446 55.5L446 55.3L447 55.3L447 54.4L448 54.4L448 54.7L449 54.7L449 54.1L450 54.1L450 53.9L451 53.9L451 54.9L452 54.9L452 56.0L453 56.0L453 55.9L454 55.9L454 57.7L455 57.7L455 57.5L456 57.5L456 59.2L457 59.2L457 58.6L458 58.6L458 59.3L459 59.3L459 60.5L460 60.5L460 61.4L461 61.4L461 61.2L462 61.2L462 61.4L463 61.4L463 60.5L464 60.5L464 60.3L465 60.3L465 59.6L466 59.6L466 58.7L467 58.7L467 57.7L468 57.7L468 57.4L469 57.4L469 57.6L470 57.6L470 57.6L471 57.6L471 57.1L472 57.1L472 58.6L473 58.6L473 58.4L474 58.4L474 58.8L475 58.8L475 60.5L476 60.5L476 60.8L477 60.8L477 62.4L478 62.4L478 63.0L479 63.0L479 62.7L480 62.7L480 62.1L481 62.1L481 62.8L482 62.8L482 62.1L483 62.1L483 62.4L484 62.4L484 60.9L485 60.9L485 59.3L486 59.3L486 58.0L487 58.0L487 58.3L488 58.3L488 58.3L489 58.3L489 56.6L490 56.6L490 57.1L491 57.1L491 57.7L492 57.7L492 58.5L493 58.5L493 58.6L494 58.6L494 56.8L495 56.8L495 58.7L496 58.7L496 58.1L497 58.1L497 57.3L498 57.3L498 57.8L499 57.8L499 58.3L500 58.3L500 57.5L501 57.5L501 58.9L502 58.9L502 58.1L503 58.1L503 58.9L504 58.9L504 57.5L505 57.5L505 57.6L506 57.6L506 58.2L507 58.2L507 57.5L508 57.5L508 57.0L509 57.0L509 56.2L510 56.2L510 56.3L511 56.3L511 56.9L512 56.9L512 57.5L513 57.5L513 56.3L514 56.3L514 56.9L515 56.9L515 58.2L516 58.2L516 58.0L517 58.0L517 57.8L518 57.8L518 57.1L519 57.1L519 57.5L520 57.5L520 58.4L521 58.4L521 57.8L522 57.8L522 57.6L523 57.6L523 59.3L524 59.3L524 59.1L525 59.1L525 59.9L526 59.9L526 60.3L527 60.3L527 60.8L528 60.8L528 61.5L529 61.5L529 61.5L530 61.5L530 60.7L531 60.7L531 61.8L532 61.8L532 56.0L533 56.0L533 55.6L534 55.6L534 56.1L535 56.1L535 55.4L536 55.4L536 56.4L537 56.4L537 56.8L538 56.8L538 57.5L539 57.5L539 57.8L540 57.8L540 56.7L541 56.7L541 58.1L542 58.1L542 57.8L543 57.8L543 58.0L544 58.0L544 59.2L545 59.2L545 58.8L546 58.8L546 59.1L547 59.1L547 58.9L548 58.9L548 59.0L549 59.0L549 59.2L550 59.2L550 59.6L551 59.6L551 60.0L552 60.0L552 59.7L553 59.7L553 58.4L554 58.4L554 58.4L555 58.4L555 58.2L556 58.2L556 57.5L557 57.5L557 57.8L558 57.8L558 58.1L559 58.1L559 58.5L560 58.5L560 58.8L561 58.8L561 58.1L562 58.1L562 57.5L563 57.5L563 57.5L564 57.5L564 58.7L565 58.7L565 58.8L566 58.8L566 59.4L567 59.4L567 58.1L568 58.1L568 59.7L569 59.7L569 58.7L570 58.7L570 59.6L571 59.6L571 60.2L572 60.2L572 59.3L573 59.3L573 59.6L574 59.6L574 60.1L575 60.1L575 61.8L576 61.8L576 61.9L577 61.9L577 61.7L578 61.7L578 62.9L579 62.9L579 62.6L580 62.6L580 63.2L581 63.2L581 59.8L582 59.8L582 60.9L583 60.9L583 59.1L584 59.1L584 58.7L585 58.7L585 58.5L586 58.5L586 57.6L587 57.6L587 57.2L588 57.2L588 56.5L589 56.5L589 56.3L590 56.3L590 54.9L591 54.9L591 56.2L592 56.2L592 56.0L593 56.0L593 55.8L594 55.8L594 57.3L595 57.3L595 57.9L596 57.9L596 59.0L597 59.0L597 58.8L598 58.8L598 58.6L599 58.6L599 58.3L600 58.3L600 58.8L601 58.8L601 58.5L602 58.5L602 59.6L603 59.6L603 58.4L604 58.4L604 59.9L605 59.9L605 59.9L606 59.9L606 58.7L607 58.7L607 58.2L608 58.2L608 59.4L609 59.4L609 57.9L610 57.9L610 59.6L611 59.6L611 58.7L612 58.7L612 59.5L613 59.5L613 59.4L614 59.4L614 60.1L615 60.1L615 65.4L616 65.4L616 61.8L617 61.8L617 64.5L618 64.5L618 61.5L619 61.5L619 62.5L620 62.5L620 62.0L621 62.0L621 63.7L622 63.7L622 62.3L623 62.3L623 62.7L624 62.7L624 63.2L625 63.2L625 62.1L626 62.1L626 63.6L627 63.6L627 62.0L628 62.0L628 62.5L629 62.5L629 62.7L630 62.7L630 56.9L631 56.9L631 57.2L632 57.2L632 56.9L633 56.9L633 57.1L634 57.1L634 58.3L635 58.3L635 58.1L636 58.1L636 58.5L637 58.5L637 59.2L638 59.2L638 60.0L639 60.0L639 60.3L640 60.3L640 59.8L641 59.8L641 60.1L642 60.1L642 60.0L643 60.0L643 59.0L644 59.0L644 59.8L645 59.8L645 59.2L646 59.2L646 59.3L647 59.3L647 57.7L648 57.7L648 58.9L649 58.9L649 58.2L650 58.2L650 59.4L651 59.4L651 57.8L652 57.8L652 58.0L653 58.0L653 60.0L654 60.0L654 58.9L655 58.9L655 60.2L656 60.2L656 59.1L657 59.1L657 59.9L658 59.9L658 59.5L659 59.5L659 59.4L660 59.4L660 61.0L661 61.0L661 59.4L662 59.4L662 60.8L663 60.8L663 59.6L664 59.6L664 60.2L665 60.2L665 60.3L666 60.3L666 60.0L667 60.0L667 59.4L668 59.4L668 60.5L669 60.5L669 60.2L670 60.2L670 59.7L671 59.7L671 59.8L672 59.8L672 59.9L673 59.9L673 60.5L674 60.5L674 60.8L675 60.8L675 60.9L676 60.9L676 60.8L677 60.8L677 60.4L678 60.4L678 60.0L679 60.0L679 61.4L680 61.4L680 98.2L679 98.2L679 99.6L678 99.6L678 99.2L677 99.2L677 98.8L676 98.8L676 98.7L675 98.7L675 98.8L674 98.8L674 99.1L673 99.1L673 99.7L672 99.7L672 99.7L671 99.7L671 99.9L670 99.9L670 99.4L669 99.4L669 99.1L668 99.1L668 100.2L667 100.2L667 99.6L666 99.6L666 99.3L665 99.3L665 99.4L664 99.4L664 100.0L663 100.0L663 98.8L662 98.8L662 100.2L661 100.2L661 98.7L660 98.7L660 100.2L659 100.2L659 100.1L658 100.1L658 99.7L657 99.7L657 100.5L656 100.5L656 99.4L655 99.4L655 100.7L654 100.7L654 99.6L653 99.6L653 101.6L652 101.6L652 101.7L651 101.7L651 100.2L650 100.2L650 101.4L649 101.4L649 100.7L648 100.7L648 101.8L647 101.8L647 100.3L646 100.3L646 100.3L645 100.3L645 99.8L644 99.8L644 100.6L643 100.6L643 99.6L642 99.6L642 99.6L641 99.6L641 99.8L640 99.8L640 99.3L639 99.3L639 99.6L638 99.6L638 100.4L637 100.4L637 101.0L636 101.0L636 101.5L635 101.5L635 101.3L634 101.3L634 102.4L633 102.4L633 102.6L632 102.6L632 102.3L631 102.3L631 102.6L630 102.6L630 96.9L629 96.9L629 97.1L628 97.1L628 97.6L627 97.6L627 96.0L626 96.0L626 97.5L625 97.5L625 96.5L624 96.5L624 96.9L623 96.9L623 97.4L622 97.4L622 96.0L621 96.0L621 97.7L620 97.7L620 97.2L619 97.2L619 98.1L618 98.1L618 97.8L617 97.8L617 97.8L616 97.8L616 98.5L615 98.5L615 99.5L614 99.5L614 100.2L613 100.2L613 100.1L612 100.1L612 100.9L611 100.9L611 100.0L610 100.0L610 101.6L609 101.6L609 100.2L608 100.2L608 101.4L607 101.4L607 94.5L606 94.5L606 99.7L605 99.7L605 99.7L604 99.7L604 101.2L603 101.2L603 100.0L602 100.0L602 101.1L601 101.1L601 100.8L600 100.8L600 101.2L599 101.2L599 100.9L598 100.9L598 100.7L597 100.7L597 100.5L596 100.5L596 101.7L595 101.7L595 102.2L594 102.2L594 103.7L593 103.7L593 103.5L592 103.5L592 103.4L591 103.4L591 104.6L590 104.6L590 103.3L589 103.3L589 103.0L588 103.0L588 102.4L587 102.4L587 102.0L586 102.0L586 101.1L585 101.1L585 100.9L584 100.9L584 100.5L583 100.5L583 98.7L582 98.7L582 99.8L581 99.8L581 96.5L580 96.5L580 91.5L579 91.5L579 96.8L578 96.8L578 97.9L577 97.9L577 97.8L576 97.8L576 97.8L575 97.8L575 99.5L574 99.5L574 100.0L573 100.0L573 100.3L572 100.3L572 99.4L571 99.4L571 100.0L570 100.0L570 100.9L569 100.9L569 99.9L568 99.9L568 101.5L567 101.5L567 100.2L566 100.2L566 100.7L565 100.7L565 100.9L564 100.9L564 102.1L563 102.1L563 102.1L562 102.1L562 101.5L561 101.5L561 100.8L560 100.8L560 101.0L559 101.0L559 101.4L558 101.4L558 101.7L557 101.7L557 102.0L556 102.0L556 101.4L555 101.4L555 101.1L554 101.1L554 101.2L553 101.2L553 99.9L552 99.9L552 99.6L551 99.6L551 100.0L550 100.0L550 100.4L549 100.4L549 100.6L548 100.6L548 100.7L547 100.7L547 100.5L546 100.5L546 100.8L545 100.8L545 100.4L544 100.4L544 101.6L543 101.6L543 101.7L542 101.7L542 101.5L541 101.5L541 102.8L540 102.8L540 101.8L539 101.8L539 102.0L538 102.0L538 102.7L537 102.7L537 103.2L536 103.2L536 104.1L535 104.1L535 103.4L534 103.4L534 103.9L533 103.9L533 103.6L532 103.6L532 97.8L531 97.8L531 98.9L530 98.9L530 98.1L529 98.1L529 98.1L528 98.1L528 98.8L527 98.8L527 99.3L526 99.3L526 99.7L525 99.7L525 100.5L524 100.5L524 98.6L523 98.6L523 101.9L522 101.9L522 101.8L521 101.8L521 101.2L520 101.2L520 102.1L519 102.1L519 98.8L518 98.8L518 101.7L517 101.7L517 101.6L516 101.6L516 101.4L515 101.4L515 102.6L514 102.6L514 103.3L513 103.3L513 102.0L512 102.0L512 102.7L511 102.7L511 103.2L510 103.2L510 103.3L509 103.3L509 102.5L508 102.5L508 102.0L507 102.0L507 101.4L506 101.4L506 102.0L505 102.0L505 102.1L504 102.1L504 100.7L503 100.7L503 101.5L502 101.5L502 100.7L501 100.7L501 102.0L500 102.0L500 101.3L499 101.3L499 101.8L498 101.8L498 102.3L497 102.3L497 101.4L496 101.4L496 100.8L495 100.8L495 102.8L494 102.8L494 101.0L493 101.0L493 101.1L492 101.1L492 101.8L491 101.8L491 102.5L490 102.5L490 102.9L489 102.9L489 101.2L488 101.2L488 101.2L487 101.2L487 101.6L486 101.6L486 100.3L485 100.3L485 98.7L484 98.7L484 97.2L483 97.2L483 97.6L482 97.6L482 96.9L481 96.9L481 97.5L480 97.5L480 97.0L479 97.0L479 96.7L478 96.7L478 97.2L477 97.2L477 98.8L476 98.8L476 99.1L475 99.1L475 100.8L474 100.8L474 101.2L473 101.2L473 101.0L472 101.0L472 102.5L471 102.5L471 102.0L470 102.0L470 102.0L469 102.0L469 102.1L468 102.1L468 101.9L467 101.9L467 100.8L466 100.8L466 100.0L465 100.0L465 99.3L464 99.3L464 99.1L463 99.1L463 98.2L462 98.2L462 98.5L461 98.5L461 98.2L460 98.2L460 99.1L459 99.1L459 100.3L458 100.3L458 101.0L457 101.0L457 100.4L456 100.4L456 102.0L455 102.0L455 101.9L454 101.9L454 103.6L453 103.6L453 103.5L452 103.5L452 104.6L451 104.6L451 105.6L450 105.6L450 105.4L449 105.4L449 104.7L448 104.7L448 105.1L447 105.1L447 104.2L446 104.2L446 104.0L445 104.0L445 102.7L444 102.7L444 102.4L443 102.4L443 103.7L442 103.7L442 103.2L441 103.2L441 103.2L440 103.2L440 103.6L439 103.6L439 102.2L438 102.2L438 103.0L437 103.0L437 104.1L436 104.1L436 103.8L435 103.8L435 102.7L434 102.7L434 96.4L433 96.4L433 96.9L432 96.9L432 95.9L431 95.9L431 95.9L430 95.9L430 96.1L429 96.1L429 97.0L428 97.0L428 97.6L427 97.6L427 99.2L426 99.2L426 98.9L425 98.9L425 99.5L424 99.5L424 101.2L423 101.2L423 100.3L422 100.3L422 101.0L421 101.0L421 101.2L420 101.2L420 101.8L419 101.8L419 101.0L418 101.0L418 100.7L417 100.7L417 100.6L416 100.6L416 101.6L415 101.6L415 100.8L414 100.8L414 101.0L413 101.0L413 100.5L412 100.5L412 100.5L411 100.5L411 96.4L410 96.4L410 101.6L409 101.6L409 100.8L408 100.8L408 101.1L407 101.1L407 99.7L406 99.7L406 100.1L405 100.1L405 101.1L404 101.1L404 100.7L403 100.7L403 101.1L402 101.1L402 99.3L401 99.3L401 99.9L400 99.9L400 100.9L399 100.9L399 99.9L398 99.9L398 101.5L397 101.5L397 100.9L396 100.9L396 101.5L395 101.5L395 101.6L394 101.6L394 102.8L393 102.8L393 102.2L392 102.2L392 103.2L391 103.2L391 102.6L390 102.6L390 103.9L389 103.9L389 103.3L388 103.3L388 102.7L387 102.7L387 101.4L386 101.4L386 101.5L385 101.5L385 100.7L384 100.7L384 99.2L383 99.2L383 99.6L382 99.6L382 99.0L381 99.0L381 98.6L380 98.6L380 98.4L379 98.4L379 99.1L378 99.1L378 98.8L377 98.8L377 99.4L376 99.4L376 98.2L375 98.2L375 98.2L374 98.2L374 99.0L373 99.0L373 99.8L372 99.8L372 100.9L371 100.9L371 99.6L370 99.6L370 99.8L369 99.8L369 101.3L368 101.3L368 101.6L367 101.6L367 100.9L366 100.9L366 101.7L365 101.7L365 102.6L364 102.6L364 102.5L363 102.5L363 104.4L362 104.4L362 103.2L361 103.2L361 103.6L360 103.6L360 105.1L359 105.1L359 103.7L358 103.7L358 102.5L357 102.5L357 101.9L356 101.9L356 102.4L355 102.4L355 100.3L354 100.3L354 99.0L353 99.0L353 99.1L352 99.1L352 98.1L351 98.1L351 98.4L350 98.4L350 99.1L349 99.1L349 98.4L348 98.4L348 99.8L347 99.8L347 99.4L346 99.4L346 100.7L345 100.7L345 99.5L344 99.5L344 99.7L343 99.7L343 99.5L342 99.5L342 100.5L341 100.5L341 100.9L340 100.9L340 101.2L339 101.2L339 101.8L338 101.8L338 102.7L337 102.7L337 96.0L336 96.0L336 96.3L335 96.3L335 97.6L334 97.6L334 97.9L333 97.9L333 98.0L332 98.0L332 98.2L331 98.2L331 98.4L330 98.4L330 97.8L329 97.8L329 98.4L328 98.4L328 98.4L327 98.4L327 98.3L326 98.3L326 99.4L325 99.4L325 99.9L324 99.9L324 100.8L323 100.8L323 99.3L322 99.3L322 99.8L321 99.8L321 100.0L320 100.0L320 101.0L319 101.0L319 100.9L318 100.9L318 99.6L317 99.6L317 99.9L316 99.9L316 100.5L315 100.5L315 99.1L314 99.1L314 99.5L313 99.5L313 98.1L312 98.1L312 99.6L311 99.6L311 99.1L310 99.1L310 98.1L309 98.1L309 98.3L308 98.3L308 99.0L307 99.0L307 99.0L306 99.0L306 98.0L305 98.0L305 97.8L304 97.8L304 98.1L303 98.1L303 98.7L302 98.7L302 96.8L301 96.8L301 97.5L300 97.5L300 98.1L299 98.1L299 98.7L298 98.7L298 97.3L297 97.3L297 97.5L296 97.5L296 98.3L295 98.3L295 99.0L294 99.0L294 98.1L293 98.1L293 99.5L292 99.5L292 98.9L291 98.9L291 98.8L290 98.8L290 98.9L289 98.9L289 98.8L288 98.8L288 98.2L287 98.2L287 97.5L286 97.5L286 97.5L285 97.5L285 96.7L284 96.7L284 98.3L283 98.3L283 96.3L282 96.3L282 97.3L281 97.3L281 96.0L280 96.0L280 97.6L279 97.6L279 97.2L278 97.2L278 96.6L277 96.6L277 98.3L276 98.3L276 98.3L275 98.3L275 98.5L274 98.5L274 98.4L273 98.4L273 99.8L272 99.8L272 99.8L271 99.8L271 99.0L270 99.0L270 99.4L269 99.4L269 98.9L268 98.9L268 99.2L267 99.2L267 98.5L266 98.5L266 98.0L265 98.0L265 97.8L264 97.8L264 97.8L263 97.8L263 96.9L262 96.9L262 98.5L261 98.5L261 98.4L260 98.4L260 97.7L259 97.7L259 97.5L258 97.5L258 97.7L257 97.7L257 98.6L256 98.6L256 98.1L255 98.1L255 98.1L254 98.1L254 99.2L253 99.2L253 100.0L252 100.0L252 99.3L251 99.3L251 99.3L250 99.3L250 99.0L249 99.0L249 99.9L248 99.9L248 98.8L247 98.8L247 98.5L246 98.5L246 98.7L245 98.7L245 98.1L244 98.1L244 96.7L243 96.7L243 96.9L242 96.9L242 96.6L241 96.6L241 96.0L240 96.0L240 96.9L239 96.9L239 97.3L238 97.3L238 98.0L237 98.0L237 99.2L236 99.2L236 100.3L235 100.3L235 101.4L234 101.4L234 102.0L233 102.0L233 101.7L232 101.7L232 103.7L231 103.7L231 104.1L230 104.1L230 103.5L229 103.5L229 102.8L228 102.8L228 102.3L227 102.3L227 102.7L226 102.7L226 100.8L225 100.8L225 98.5L224 98.5L224 97.2L223 97.2L223 96.2L222 96.2L222 95.3L221 95.3L221 96.3L220 96.3L220 96.2L219 96.2L219 96.3L218 96.3L218 95.7L217 95.7L217 94.8L216 94.8L216 95.2L215 95.2L215 95.8L214 95.8L214 96.1L213 96.1L213 95.6L212 95.6L212 94.4L211 94.4L211 95.6L210 95.6L210 95.7L209 95.7L209 94.6L208 94.6L208 95.7L207 95.7L207 94.9L206 94.9L206 95.2L205 95.2L205 95.8L204 95.8L204 97.3L203 97.3L203 96.3L202 96.3L202 97.2L201 97.2L201 97.4L200 97.4L200 97.4L199 97.4L199 96.7L198 96.7L198 98.7L197 98.7L197 98.9L196 98.9L196 98.5L195 98.5L195 99.4L194 99.4L194 99.2L193 99.2L193 100.8L192 100.8L192 101.5L191 101.5L191 101.4L190 101.4L190 100.4L189 100.4L189 100.5L188 100.5L188 101.1L187 101.1L187 100.3L186 100.3L186 99.8L185 99.8L185 89.8L184 89.8L184 98.7L183 98.7L183 98.2L182 98.2L182 97.9L181 97.9L181 93.4L180 93.4L180 97.6L179 97.6L179 96.9L178 96.9L178 98.0L177 98.0L177 98.0L176 98.0L176 97.4L175 97.4L175 97.2L174 97.2L174 96.2L173 96.2L173 96.1L172 96.1L172 97.3L171 97.3L171 97.8L170 97.8L170 97.1L169 97.1L169 96.8L168 96.8L168 96.3L167 96.3L167 95.9L166 95.9L166 95.9L165 95.9L165 95.6L164 95.6L164 95.5L163 95.5L163 95.9L162 95.9L162 95.3L161 95.3L161 95.9L160 95.9L160 96.1L159 96.1L159 95.9L158 95.9L158 96.6L157 96.6L157 96.9L156 96.9L156 95.8L155 95.8L155 97.2L154 97.2L154 97.7L153 97.7L153 97.4L152 97.4L152 97.3L151 97.3L151 97.4L150 97.4L150 96.7L149 96.7L149 98.1L148 98.1L148 96.7L147 96.7L147 97.4L146 97.4L146 96.4L145 96.4L145 97.1L144 97.1L144 96.3L143 96.3L143 97.4L142 97.4L142 97.4L141 97.4L141 97.6L140 97.6L140 96.5L139 96.5L139 97.2L138 97.2L138 99.4L137 99.4L137 98.8L136 98.8L136 100.7L135 100.7L135 101.6L134 101.6L134 101.8L133 101.8L133 101.9L132 101.9L132 102.8L131 102.8L131 103.2L130 103.2L130 103.1L129 103.1L129 102.1L128 102.1L128 102.1L127 102.1L127 101.3L126 101.3L126 100.6L125 100.6L125 100.1L124 100.1L124 101.0L123 101.0L123 99.1L122 99.1L122 96.8L121 96.8L121 95.9L120 95.9L120 95.9L119 95.9L119 95.9L118 95.9L118 95.4L117 95.4L117 96.7L116 96.7L116 97.1L115 97.1L115 96.8L114 96.8L114 97.5L113 97.5L113 98.6L112 98.6L112 98.6L111 98.6L111 97.7L110 97.7L110 98.2L109 98.2L109 98.9L108 98.9L108 97.6L107 97.6L107 97.9L106 97.9L106 97.4L105 97.4L105 98.2L104 98.2L104 98.1L103 98.1L103 98.9L102 98.9L102 98.8L101 98.8L101 99.1L100 99.1L100 98.7L99 98.7L99 98.7L98 98.7L98 98.3L97 98.3L97 99.1L96 99.1L96 99.2L95 99.2L95 97.7L94 97.7L94 97.7L93 97.7L93 98.3L92 98.3L92 98.6L91 98.6L91 98.2L90 98.2L90 98.6L89 98.6L89 98.8L88 98.8L88 99.9L87 99.9L87 99.5L86 99.5L86 98.6L85 98.6L85 100.4L84 100.4L84 99.3L83 99.3L83 99.8L82 99.8L82 99.4L81 99.4L81 99.6L80 99.6L80 101.0L79 101.0L79 100.4L78 100.4L78 99.5L77 99.5L77 99.1L76 99.1L76 99.8L75 99.8L75 98.0L74 98.0L74 98.1L73 98.1L73 98.7L72 98.7L72 98.2L71 98.2L71 97.8L70 97.8L70 97.5L69 97.5L69 98.2L68 98.2L68 100.1L67 100.1L67 100.6L66 100.6L66 101.3L65 101.3L65 101.2L64 101.2L64 103.0L63 103.0L63 104.0L62 104.0L62 104.4L61 104.4L61 102.7L60 102.7L60 102.6L59 102.6L59 101.9L58 101.9L58 101.9L57 101.9L57 101.4L56 101.4L56 100.8L55 100.8L55 98.5L54 98.5L54 99.0L53 99.0L53 97.1L52 97.1L52 98.5L51 98.5L51 96.9L50 96.9L50 97.9L49 97.9L49 97.3L48 97.3L48 97.2L47 97.2L47 97.3L46 97.3L46 96.7L45 96.7L45 97.4L44 97.4L44 96.5L43 96.5L43 96.4L42 96.4L42 97.6L41 97.6L41 96.5L40 96.5L40 96.4L39 96.4L39 98.4L38 98.4L38 99.0L37 99.0L37 98.4L36 98.4L36 98.9L35 98.9L35 100.5L34 100.5L34 101.0L33 101.0L33 101.1L32 101.1L32 101.2L31 101.2L31 102.8L30 102.8L30 103.2L29 103.2L29 102.7L28 102.7L28 102.4L27 102.4L27 102.1L26 102.1L26 100.5L25 100.5L25 99.4L24 99.4L24 99.6L23 99.6L23 99.9L22 99.9L22 98.6L21 98.6L21 100.0L20 100.0L20 98.9L19 98.9L19 99.1L18 99.1L18 100.7L17 100.7L17 100.7L16 100.7L16 102.5L15 102.5L15 104.2L14 104.2L14 104.2L13 104.2L13 106.1L12 106.1L12 105.7L11 105.7L11 106.4L10 106.4L10 107.1L9 107.1L9 105.2L8 105.2L8 104.9L7 104.9L7 104.5L6 104.5L6 105.4L5 105.4L5 104.3L4 104.3L4 103.0L3 103.0L3 103.2L2 103.2L2 102.9L1 102.9L1 103.5L0 103.5Z" fill="#6464dc"/></svg>
<svg style="left:250px;top:344px;overflow:hidden" width="679" height="163"><path d="M0 3.3L1 3.3L1 6.5L2 6.5L2 20.7L3 20.7L3 6.8L4 6.8L4 30.2L5 30.2L5 4.7L6 4.7L6 6.3L7 6.3L7 23.2L8 23.2L8 12.4L9 12.4L9 3.3L10 3.3L10 27.3L11 27.3L11 33.4L12 33.4L12 9.6L13 9.6L13 35.6L14 35.6L14 34.3L15 34.3L15 28.3L16 28.3L16 3.3L17 3.3L17 27.2L18 27.2L18 31.8L19 31.8L19 26.3L20 26.3L20 13.4L21 13.4L21 16.9L22 16.9L22 15.5L23 15.5L23 29.1L24 29.1L24 27.7L25 27.7L25 23.8L26 23.8L26 41.6L27 41.6L27 36.7L28 36.7L28 38.8L29 38.8L29 29.3L30 29.3L30 36.3L31 36.3L31 27.4L32 27.4L32 41.9L33 41.9L33 33.5L34 33.5L34 52.1L35 52.1L35 43.9L36 43.9L36 58.5L37 58.5L37 44.2L38 44.2L38 31.7L39 31.7L39 35.3L40 35.3L40 20.7L41 20.7L41 47.8L42 47.8L42 28.7L43 28.7L43 16.9L44 16.9L44 52.5L45 52.5L45 44.8L46 44.8L46 46.4L47 46.4L47 48.8L48 48.8L48 38.4L49 38.4L49 47.3L50 47.3L50 54.4L51 54.4L51 55.4L52 55.4L52 50.6L53 50.6L53 51.4L54 51.4L54 35.1L55 35.1L55 59.8L56 59.8L56 39.4L57 39.4L57 58.8L58 58.8L58 39.8L59 39.8L59 59.4L60 59.4L60 62.2L61 62.2L61 41.1L62 41.1L62 47.5L63 47.5L63 44.7L64 44.7L64 44.7L65 44.7L65 36.5L66 36.5L66 51.0L67 51.0L67 35.1L68 35.1L68 50.3L69 50.3L69 22.1L70 22.1L70 43.5L71 43.5L71 20.5L72 20.5L72 41.5L73 41.5L73 35.3L74 35.3L74 40.3L75 40.3L75 30.8L76 30.8L76 46.6L77 46.6L77 44.6L78 44.6L78 57.4L79 57.4L79 40.4L80 40.4L80 45.2L81 45.2L81 33.6L82 33.6L82 46.4L83 46.4L83 43.9L84 43.9L84 35.3L85 35.3L85 53.0L86 53.0L86 62.0L87 62.0L87 60.2L88 60.2L88 39.3L89 39.3L89 39.0L90 39.0L90 49.6L91 49.6L91 54.9L92 54.9L92 50.7L93 50.7L93 39.9L94 39.9L94 32.0L95 32.0L95 30.8L96 30.8L96 37.2L97 37.2L97 54.4L98 54.4L98 51.7L99 51.7L99 35.0L100 35.0L100 36.0L101 36.0L101 26.6L102 26.6L102 50.6L103 50.6L103 37.7L104 37.7L104 55.6L105 55.6L105 51.7L106 51.7L106 45.7L107 45.7L107 40.8L108 40.8L108 56.0L109 56.0L109 34.8L110 34.8L110 45.1L111 45.1L111 61.5L112 61.5L112 38.8L113 38.8L113 47.6L114 47.6L114 50.2L115 50.2L115 32.6L116 32.6L116 29.6L117 29.6L117 47.4L118 47.4L118 41.0L119 41.0L119 37.5L120 37.5L120 44.2L121 44.2L121 32.3L122 32.3L122 41.9L123 41.9L123 23.8L124 23.8L124 3.3L125 3.3L125 43.2L126 43.2L126 31.4L127 31.4L127 18.7L128 18.7L128 42.0L129 42.0L129 46.3L130 46.3L130 10.7L131 10.7L131 47.3L132 47.3L132 43.5L133 43.5L133 47.3L134 47.3L134 29.3L135 29.3L135 38.3L136 38.3L136 32.5L137 32.5L137 52.8L138 52.8L138 63.8L139 63.8L139 39.0L140 39.0L140 45.5L141 45.5L141 52.1L142 52.1L142 37.7L143 37.7L143 43.5L144 43.5L144 38.9L145 38.9L145 48.3L146 48.3L146 38.0L147 38.0L147 30.9L148 30.9L148 42.8L149 42.8L149 21.1L150 21.1L150 23.6L151 23.6L151 48.4L152 48.4L152 47.6L153 47.6L153 30.2L154 30.2L154 34.7L155 34.7L155 49.5L156 49.5L156 52.9L157 52.9L157 37.7L158 37.7L158 24.3L159 24.3L159 45.0L160 45.0L160 35.6L161 35.6L161 50.4L162 50.4L162 32.6L163 32.6L163 35.7L164 35.7L164 31.9L165 31.9L165 26.2L166 26.2L166 39.1L167 39.1L167 36.2L168 36.2L168 45.5L169 45.5L169 46.2L170 46.2L170 36.9L171 36.9L171 40.3L172 40.3L172 49.3L173 49.3L173 48.8L174 48.8L174 45.8L175 45.8L175 39.8L176 39.8L176 42.2L177 42.2L177 21.2L178 21.2L178 39.6L179 39.6L179 51.9L180 51.9L180 52.4L181 52.4L181 27.4L182 27.4L182 52.9L183 52.9L183 41.7L184 41.7L184 47.8L185 47.8L185 39.9L186 39.9L186 50.2L187 50.2L187 46.7L188 46.7L188 38.4L189 38.4L189 45.4L190 45.4L190 59.6L191 59.6L191 62.7L192 62.7L192 69.9L193 69.9L193 60.2L194 60.2L194 46.3L195 46.3L195 23.9L196 23.9L196 31.9L197 31.9L197 35.3L198 35.3L198 36.2L199 36.2L199 36.4L200 36.4L200 37.8L201 37.8L201 45.9L202 45.9L202 43.6L203 43.6L203 42.7L204 42.7L204 43.7L205 43.7L205 53.0L206 53.0L206 28.2L207 28.2L207 32.0L208 32.0L208 56.9L209 56.9L209 67.1L210 67.1L210 35.3L211 35.3L211 44.3L212 44.3L212 42.5L213 42.5L213 35.9L214 35.9L214 40.1L215 40.1L215 30.9L216 30.9L216 59.9L217 59.9L217 65.8L218 65.8L218 45.6L219 45.6L219 49.4L220 49.4L220 44.3L221 44.3L221 51.7L222 51.7L222 51.5L223 51.5L223 53.4L224 53.4L224 47.8L225 47.8L225 47.2L226 47.2L226 53.2L227 53.2L227 25.0L228 25.0L228 48.7L229 48.7L229 51.9L230 51.9L230 45.2L231 45.2L231 30.8L232 30.8L232 42.5L233 42.5L233 28.8L234 28.8L234 52.1L235 52.1L235 58.1L236 58.1L236 28.0L237 28.0L237 50.3L238 50.3L238 40.5L239 40.5L239 28.9L240 28.9L240 47.7L241 47.7L241 45.0L242 45.0L242 34.4L243 34.4L243 39.1L244 39.1L244 53.5L245 53.5L245 33.6L246 33.6L246 48.2L247 48.2L247 18.1L248 18.1L248 44.1L249 44.1L249 37.4L250 37.4L250 32.9L251 32.9L251 45.7L252 45.7L252 25.9L253 25.9L253 28.3L254 28.3L254 46.9L255 46.9L255 45.1L256 45.1L256 49.5L257 49.5L257 44.8L258 44.8L258 53.2L259 53.2L259 41.1L260 41.1L260 43.6L261 43.6L261 31.2L262 31.2L262 63.2L263 63.2L263 35.1L264 35.1L264 56.3L265 56.3L265 48.6L266 48.6L266 43.6L267 43.6L267 51.0L268 51.0L268 44.4L269 44.4L269 47.0L270 47.0L270 45.2L271 45.2L271 43.4L272 43.4L272 48.2L273 48.2L273 33.0L274 33.0L274 46.9L275 46.9L275 36.8L276 36.8L276 47.2L277 47.2L277 42.9L278 42.9L278 44.3L279 44.3L279 48.5L280 48.5L280 51.7L281 51.7L281 43.5L282 43.5L282 51.1L283 51.1L283 22.9L284 22.9L284 43.8L285 43.8L285 41.0L286 41.0L286 32.8L287 32.8L287 47.0L288 47.0L288 41.9L289 41.9L289 44.6L290 44.6L290 51.0L291 51.0L291 41.5L292 41.5L292 59.3L293 59.3L293 60.7L294 60.7L294 46.1L295 46.1L295 52.9L296 52.9L296 41.8L297 41.8L297 23.0L298 23.0L298 49.9L299 49.9L299 48.0L300 48.0L300 40.3L301 40.3L301 56.9L302 56.9L302 46.6L303 46.6L303 52.1L304 52.1L304 37.6L305 37.6L305 56.7L306 56.7L306 40.1L307 40.1L307 31.8L308 31.8L308 43.3L309 43.3L309 42.6L310 42.6L310 42.2L311 42.2L311 38.0L312 38.0L312 48.1L313 48.1L313 23.7L314 23.7L314 50.9L315 50.9L315 36.1L316 36.1L316 40.2L317 40.2L317 58.5L318 58.5L318 53.0L319 53.0L319 49.6L320 49.6L320 63.6L321 63.6L321 42.1L322 42.1L322 48.6L323 48.6L323 54.5L324 54.5L324 63.9L325 63.9L325 51.6L326 51.6L326 49.0L327 49.0L327 33.3L328 33.3L328 53.8L329 53.8L329 58.4L330 58.4L330 59.9L331 59.9L331 66.2L332 66.2L332 36.8L333 36.8L333 70.4L334 70.4L334 70.1L335 70.1L335 51.6L336 51.6L336 51.4L337 51.4L337 29.8L338 29.8L338 30.6L339 30.6L339 40.3L340 40.3L340 34.0L341 34.0L341 21.1L342 21.1L342 29.9L343 29.9L343 39.4L344 39.4L344 29.5L345 29.5L345 34.2L346 34.2L346 14.5L347 14.5L347 6.1L348 6.1L348 12.6L349 12.6L349 34.5L350 34.5L350 33.7L351 33.7L351 26.7L352 26.7L352 30.7L353 30.7L353 28.2L354 28.2L354 27.8L355 27.8L355 34.7L356 34.7L356 18.9L357 18.9L357 36.2L358 36.2L358 19.1L359 19.1L359 23.8L360 23.8L360 40.0L361 40.0L361 33.3L362 33.3L362 37.3L363 37.3L363 26.1L364 26.1L364 24.6L365 24.6L365 39.0L366 39.0L366 44.8L367 44.8L367 46.3L368 46.3L368 36.7L369 36.7L369 35.9L370 35.9L370 30.2L371 30.2L371 41.5L372 41.5L372 43.2L373 43.2L373 35.0L374 35.0L374 39.3L375 39.3L375 43.6L376 43.6L376 32.7L377 32.7L377 29.2L378 29.2L378 19.3L379 19.3L379 32.7L380 32.7L380 34.3L381 34.3L381 36.0L382 36.0L382 45.5L383 45.5L383 32.7L384 32.7L384 51.1L385 51.1L385 50.8L386 50.8L386 38.9L387 38.9L387 33.9L388 33.9L388 46.3L389 46.3L389 45.4L390 45.4L390 59.4L391 59.4L391 35.0L392 35.0L392 47.5L393 47.5L393 48.9L394 48.9L394 57.4L395 57.4L395 60.5L396 60.5L396 42.1L397 42.1L397 36.9L398 36.9L398 34.7L399 34.7L399 61.6L400 61.6L400 39.0L401 39.0L401 46.0L402 46.0L402 42.2L403 42.2L403 50.0L404 50.0L404 39.9L405 39.9L405 48.5L406 48.5L406 58.6L407 58.6L407 25.5L408 25.5L408 54.3L409 54.3L409 33.8L410 33.8L410 45.2L411 45.2L411 63.0L412 63.0L412 66.3L413 66.3L413 53.9L414 53.9L414 62.6L415 62.6L415 34.4L416 34.4L416 43.0L417 43.0L417 45.9L418 45.9L418 47.1L419 47.1L419 44.0L420 44.0L420 43.7L421 43.7L421 36.3L422 36.3L422 56.1L423 56.1L423 45.2L424 45.2L424 60.4L425 60.4L425 56.2L426 56.2L426 36.7L427 36.7L427 46.3L428 46.3L428 50.4L429 50.4L429 46.2L430 46.2L430 44.2L431 44.2L431 57.3L432 57.3L432 59.8L433 59.8L433 46.4L434 46.4L434 5.2L435 5.2L435 3.8L436 3.8L436 31.5L437 31.5L437 23.0L438 23.0L438 39.2L439 39.2L439 17.1L440 17.1L440 32.4L441 32.4L441 27.6L442 27.6L442 6.8L443 6.8L443 31.8L444 31.8L444 31.3L445 31.3L445 19.3L446 19.3L446 10.6L447 10.6L447 6.4L448 6.4L448 26.8L449 26.8L449 33.8L450 33.8L450 35.3L451 35.3L451 8.8L452 8.8L452 26.0L453 26.0L453 27.6L454 27.6L454 27.1L455 27.1L455 35.5L456 35.5L456 45.4L457 45.4L457 41.1L458 41.1L458 28.8L459 28.8L459 25.7L460 25.7L460 37.2L461 37.2L461 23.2L462 23.2L462 34.2L463 34.2L463 36.4L464 36.4L464 35.2L465 35.2L465 35.0L466 35.0L466 39.6L467 39.6L467 23.7L468 23.7L468 47.3L469 47.3L469 45.9L470 45.9L470 49.1L471 49.1L471 57.9L472 57.9L472 59.7L473 59.7L473 34.7L474 34.7L474 30.1L475 30.1L475 46.4L476 46.4L476 52.4L477 52.4L477 58.4L478 58.4L478 49.7L479 49.7L479 60.6L480 60.6L480 37.7L481 37.7L481 36.0L482 36.0L482 24.2L483 24.2L483 52.2L484 52.2L484 49.1L485 49.1L485 32.8L486 32.8L486 31.0L487 31.0L487 25.7L488 25.7L488 21.0L489 21.0L489 42.0L490 42.0L490 23.1L491 23.1L491 23.7L492 23.7L492 60.5L493 60.5L493 42.3L494 42.3L494 53.2L495 53.2L495 32.7L496 32.7L496 49.8L497 49.8L497 44.2L498 44.2L498 17.4L499 17.4L499 55.1L500 55.1L500 29.3L501 29.3L501 40.5L502 40.5L502 18.4L503 18.4L503 42.5L504 42.5L504 52.2L505 52.2L505 46.4L506 46.4L506 38.0L507 38.0L507 24.1L508 24.1L508 39.7L509 39.7L509 46.8L510 46.8L510 37.2L511 37.2L511 30.2L512 30.2L512 54.5L513 54.5L513 27.4L514 27.4L514 42.3L515 42.3L515 26.7L516 26.7L516 48.0L517 48.0L517 36.9L518 36.9L518 22.5L519 22.5L519 43.0L520 43.0L520 35.8L521 35.8L521 39.6L522 39.6L522 40.4L523 40.4L523 24.3L524 24.3L524 39.7L525 39.7L525 49.4L526 49.4L526 36.2L527 36.2L527 21.9L528 21.9L528 29.7L529 29.7L529 42.5L530 42.5L530 39.6L531 39.6L531 26.7L532 26.7L532 25.1L533 25.1L533 21.2L534 21.2L534 3.3L535 3.3L535 3.3L536 3.3L536 8.5L537 8.5L537 19.7L538 19.7L538 3.3L539 3.3L539 18.4L540 18.4L540 3.3L541 3.3L541 7.6L542 7.6L542 39.5L543 39.5L543 17.3L544 17.3L544 21.8L545 21.8L545 20.5L546 20.5L546 3.3L547 3.3L547 26.0L548 26.0L548 37.1L549 37.1L549 17.5L550 17.5L550 35.0L551 35.0L551 15.7L552 15.7L552 19.3L553 19.3L553 52.2L554 52.2L554 12.8L555 12.8L555 33.3L556 33.3L556 46.3L557 46.3L557 36.0L558 36.0L558 31.6L559 31.6L559 33.1L560 33.1L560 27.1L561 27.1L561 43.1L562 43.1L562 21.8L563 21.8L563 45.0L564 45.0L564 43.8L565 43.8L565 37.9L566 37.9L566 39.3L567 39.3L567 37.9L568 37.9L568 34.7L569 34.7L569 25.4L570 25.4L570 35.4L571 35.4L571 40.4L572 40.4L572 36.8L573 36.8L573 16.6L574 16.6L574 35.9L575 35.9L575 25.3L576 25.3L576 41.2L577 41.2L577 41.8L578 41.8L578 35.3L579 35.3L579 36.3L580 36.3L580 44.4L581 44.4L581 19.1L582 19.1L582 16.6L583 16.6L583 31.9L584 31.9L584 28.0L585 28.0L585 20.6L586 20.6L586 42.9L587 42.9L587 17.7L588 17.7L588 27.8L589 27.8L589 31.0L590 31.0L590 31.3L591 31.3L591 21.7L592 21.7L592 23.9L593 23.9L593 37.9L594 37.9L594 44.1L595 44.1L595 35.4L596 35.4L596 3.8L597 3.8L597 32.5L598 32.5L598 48.6L599 48.6L599 32.6L600 32.6L600 15.6L601 15.6L601 41.6L602 41.6L602 37.8L603 37.8L603 34.1L604 34.1L604 45.8L605 45.8L605 33.3L606 33.3L606 28.3L607 28.3L607 47.6L608 47.6L608 42.5L609 42.5L609 55.6L610 55.6L610 42.6L611 42.6L611 56.2L612 56.2L612 35.5L613 35.5L613 50.9L614 50.9L614 58.4L615 58.4L615 64.2L616 64.2L616 55.3L617 55.3L617 66.5L618 66.5L618 38.1L619 38.1L619 59.5L620 59.5L620 33.0L621 33.0L621 42.3L622 42.3L622 49.7L623 49.7L623 45.8L624 45.8L624 31.7L625 31.7L625 63.7L626 63.7L626 30.1L627 30.1L627 36.9L628 36.9L628 47.8L629 47.8L629 51.6L630 51.6L630 16.3L631 16.3L631 9.9L632 9.9L632 27.3L633 27.3L633 26.2L634 26.2L634 25.3L635 25.3L635 13.3L636 13.3L636 30.8L637 30.8L637 24.9L638 24.9L638 25.8L639 25.8L639 34.1L640 34.1L640 21.1L641 21.1L641 21.8L642 21.8L642 37.9L643 37.9L643 32.0L644 32.0L644 32.5L645 32.5L645 21.2L646 21.2L646 18.5L647 18.5L647 15.0L648 15.0L648 11.0L649 11.0L649 46.1L650 46.1L650 22.6L651 22.6L651 16.8L652 16.8L652 44.4L653 44.4L653 45.1L654 45.1L654 16.9L655 16.9L655 29.1L656 29.1L656 35.3L657 35.3L657 28.3L658 28.3L658 40.0L659 40.0L659 50.3L660 50.3L660 56.4L661 56.4L661 55.7L662 55.7L662 32.4L663 32.4L663 36.4L664 36.4L664 47.8L665 47.8L665 26.6L666 26.6L666 52.5L667 52.5L667 44.4L668 44.4L668 51.9L669 51.9L669 27.2L670 27.2L670 52.3L671 52.3L671 43.0L672 43.0L672 39.3L673 39.3L673 45.4L674 45.4L674 48.2L675 48.2L675 51.2L676 51.2L676 42.9L677 42.9L677 43.1L678 43.1L678 42.9L679 42.9L679 36.8L680 36.8L680 121.0L679 121.0L679 110.5L678 110.5L678 117.4L677 117.4L677 137.9L676 137.9L676 116.8L675 116.8L675 124.5L674 124.5L674 127.8L673 127.8L673 108.6L672 108.6L672 131.8L671 131.8L671 125.2L670 125.2L670 128.7L669 128.7L669 124.7L668 124.7L668 134.0L667 134.0L667 121.0L666 121.0L666 121.2L665 121.2L665 139.1L664 139.1L664 132.2L663 132.2L663 129.0L662 129.0L662 122.0L661 122.0L661 126.4L660 126.4L660 133.9L659 133.9L659 123.4L658 123.4L658 140.6L657 140.6L657 128.7L656 128.7L656 142.8L655 142.8L655 136.1L654 136.1L654 133.1L653 133.1L653 122.6L652 122.6L652 137.9L651 137.9L651 143.2L650 143.2L650 154.9L649 154.9L649 150.2L648 150.2L648 147.6L647 147.6L647 152.2L646 152.2L646 140.6L645 140.6L645 137.2L644 137.2L644 116.7L643 116.7L643 135.0L642 135.0L642 160.7L641 160.7L641 130.5L640 130.5L640 141.8L639 141.8L639 160.7L638 160.7L638 160.7L637 160.7L637 122.4L636 122.4L636 150.9L635 150.9L635 160.7L634 160.7L634 139.7L633 139.7L633 159.0L632 159.0L632 160.7L631 160.7L631 157.0L630 157.0L630 131.7L629 131.7L629 120.3L628 120.3L628 124.2L627 124.2L627 138.2L626 138.2L626 120.6L625 120.6L625 112.4L624 112.4L624 129.1L623 129.1L623 105.2L622 105.2L622 121.2L621 121.2L621 106.7L620 106.7L620 109.7L619 109.7L619 110.5L618 110.5L618 131.1L617 131.1L617 118.6L616 118.6L616 113.4L615 113.4L615 134.7L614 134.7L614 134.2L613 134.2L613 123.0L612 123.0L612 123.3L611 123.3L611 115.0L610 115.0L610 116.1L609 116.1L609 132.1L608 132.1L608 119.6L607 119.6L607 95.8L606 95.8L606 111.9L605 111.9L605 116.7L604 116.7L604 127.0L603 127.0L603 109.9L602 109.9L602 113.3L601 113.3L601 117.9L600 117.9L600 126.9L599 126.9L599 135.2L598 135.2L598 133.3L597 133.3L597 111.2L596 111.2L596 133.6L595 133.6L595 141.4L594 141.4L594 122.5L593 122.5L593 114.2L592 114.2L592 125.9L591 125.9L591 141.4L590 141.4L590 113.8L589 113.8L589 124.5L588 124.5L588 148.9L587 148.9L587 118.4L586 118.4L586 126.6L585 126.6L585 133.6L584 133.6L584 120.8L583 120.8L583 139.0L582 139.0L582 111.4L581 111.4L581 113.3L580 113.3L580 97.0L579 97.0L579 119.7L578 119.7L578 122.2L577 122.2L577 121.7L576 121.7L576 123.5L575 123.5L575 109.6L574 109.6L574 117.8L573 117.8L573 141.5L572 141.5L572 136.2L571 136.2L571 133.7L570 133.7L570 122.7L569 122.7L569 126.4L568 126.4L568 113.0L567 113.0L567 115.1L566 115.1L566 106.7L565 106.7L565 124.2L564 124.2L564 125.5L563 125.5L563 133.1L562 133.1L562 103.0L561 103.0L561 133.3L560 133.3L560 118.9L559 118.9L559 125.1L558 125.1L558 145.8L557 145.8L557 124.2L556 124.2L556 133.4L555 133.4L555 140.5L554 140.5L554 123.6L553 123.6L553 135.9L552 135.9L552 124.1L551 124.1L551 145.1L550 145.1L550 140.9L549 140.9L549 132.6L548 132.6L548 133.2L547 133.2L547 144.8L546 144.8L546 160.7L545 160.7L545 160.7L544 160.7L544 149.4L543 149.4L543 143.5L542 143.5L542 148.8L541 148.8L541 160.7L540 160.7L540 141.5L539 141.5L539 150.2L538 150.2L538 143.1L537 143.1L537 156.4L536 156.4L536 148.3L535 148.3L535 160.7L534 160.7L534 160.7L533 160.7L533 126.2L532 126.2L532 130.4L531 130.4L531 110.1L530 110.1L530 129.5L529 129.5L529 111.8L528 111.8L528 123.5L527 123.5L527 107.6L526 107.6L526 101.5L525 101.5L525 114.6L524 114.6L524 101.0L523 101.0L523 122.5L522 122.5L522 115.2L521 115.2L521 100.1L520 100.1L520 121.8L519 121.8L519 101.0L518 101.0L518 116.2L517 116.2L517 108.8L516 108.8L516 128.6L515 128.6L515 111.3L514 111.3L514 123.3L513 123.3L513 123.4L512 123.4L512 133.3L511 133.3L511 124.5L510 124.5L510 127.9L509 127.9L509 111.4L508 111.4L508 125.8L507 125.8L507 123.5L506 123.5L506 127.5L505 127.5L505 109.0L504 109.0L504 105.9L503 105.9L503 120.2L502 120.2L502 122.5L501 122.5L501 122.8L500 122.8L500 138.9L499 138.9L499 119.2L498 119.2L498 125.3L497 125.3L497 120.7L496 120.7L496 128.3L495 128.3L495 125.4L494 125.4L494 141.5L493 141.5L493 131.3L492 131.3L492 123.0L491 123.0L491 132.2L490 132.2L490 119.8L489 119.8L489 131.3L488 131.3L488 118.1L487 118.1L487 130.2L486 130.2L486 133.3L485 133.3L485 129.4L484 129.4L484 130.5L483 130.5L483 130.3L482 130.3L482 139.1L481 139.1L481 115.6L480 115.6L480 115.0L479 115.0L479 122.0L478 122.0L478 140.3L477 140.3L477 114.0L476 114.0L476 124.4L475 124.4L475 120.1L474 120.1L474 115.2L473 115.2L473 109.0L472 109.0L472 126.8L471 126.8L471 101.8L470 101.8L470 131.0L469 131.0L469 132.6L468 132.6L468 132.5L467 132.5L467 155.2L466 155.2L466 129.7L465 129.7L465 138.5L464 138.5L464 143.9L463 143.9L463 141.4L462 141.4L462 141.7L461 141.7L461 131.0L460 131.0L460 152.8L459 152.8L459 138.4L458 138.4L458 158.0L457 158.0L457 128.3L456 128.3L456 145.3L455 145.3L455 140.3L454 140.3L454 134.8L453 134.8L453 144.6L452 144.6L452 140.6L451 140.6L451 128.4L450 128.4L450 160.4L449 160.4L449 127.1L448 127.1L448 131.2L447 131.2L447 137.4L446 137.4L446 128.5L445 128.5L445 126.2L444 126.2L444 130.9L443 130.9L443 141.2L442 141.2L442 146.7L441 146.7L441 120.0L440 120.0L440 137.6L439 137.6L439 134.2L438 134.2L438 159.5L437 159.5L437 127.0L436 127.0L436 155.0L435 155.0L435 140.3L434 140.3L434 131.0L433 131.0L433 112.8L432 112.8L432 101.8L431 101.8L431 116.5L430 116.5L430 109.0L429 109.0L429 133.6L428 133.6L428 102.2L427 102.2L427 135.8L426 135.8L426 119.2L425 119.2L425 141.1L424 141.1L424 124.8L423 124.8L423 133.9L422 133.9L422 121.1L421 121.1L421 126.9L420 126.9L420 116.5L419 116.5L419 118.4L418 118.4L418 138.6L417 138.6L417 130.7L416 130.7L416 115.0L415 115.0L415 114.6L414 114.6L414 114.1L413 114.1L413 126.0L412 126.0L412 108.1L411 108.1L411 97.5L410 97.5L410 120.6L409 120.6L409 117.9L408 117.9L408 133.5L407 133.5L407 109.4L406 109.4L406 102.6L405 102.6L405 120.4L404 120.4L404 113.7L403 113.7L403 108.7L402 108.7L402 129.7L401 129.7L401 119.7L400 119.7L400 112.8L399 112.8L399 124.5L398 124.5L398 124.2L397 124.2L397 105.9L396 105.9L396 117.7L395 117.7L395 132.2L394 132.2L394 131.7L393 131.7L393 118.1L392 118.1L392 110.4L391 110.4L391 107.5L390 107.5L390 105.4L389 105.4L389 139.5L388 139.5L388 122.8L387 122.8L387 105.7L386 105.7L386 102.1L385 102.1L385 109.8L384 109.8L384 130.4L383 130.4L383 132.5L382 132.5L382 133.2L381 133.2L381 124.1L380 124.1L380 123.6L379 123.6L379 121.7L378 121.7L378 115.0L377 115.0L377 126.8L376 126.8L376 130.3L375 130.3L375 110.8L374 110.8L374 112.4L373 112.4L373 134.3L372 134.3L372 120.7L371 120.7L371 119.9L370 119.9L370 122.1L369 122.1L369 125.0L368 125.0L368 130.1L367 130.1L367 124.1L366 124.1L366 145.7L365 145.7L365 122.5L364 122.5L364 131.7L363 131.7L363 122.0L362 122.0L362 137.6L361 137.6L361 123.2L360 123.2L360 132.9L359 132.9L359 119.2L358 119.2L358 140.0L357 140.0L357 132.7L356 132.7L356 135.1L355 135.1L355 120.8L354 120.8L354 133.8L353 133.8L353 159.6L352 159.6L352 160.7L351 160.7L351 146.6L350 146.6L350 132.1L349 132.1L349 144.0L348 144.0L348 134.8L347 134.8L347 157.1L346 157.1L346 123.6L345 123.6L345 141.6L344 141.6L344 147.2L343 147.2L343 150.0L342 150.0L342 133.0L341 133.0L341 147.7L340 147.7L340 134.2L339 134.2L339 160.7L338 160.7L338 144.9L337 144.9L337 111.4L336 111.4L336 130.6L335 130.6L335 124.9L334 124.9L334 108.1L333 108.1L333 128.8L332 128.8L332 140.5L331 140.5L331 145.5L330 145.5L330 129.4L329 129.4L329 119.8L328 119.8L328 114.1L327 114.1L327 122.3L326 122.3L326 131.8L325 131.8L325 124.6L324 124.6L324 120.3L323 120.3L323 132.3L322 132.3L322 125.2L321 125.2L321 128.0L320 128.0L320 131.6L319 131.6L319 107.1L318 107.1L318 128.1L317 128.1L317 117.2L316 117.2L316 134.7L315 134.7L315 110.7L314 110.7L314 116.1L313 116.1L313 121.8L312 121.8L312 118.5L311 118.5L311 106.8L310 106.8L310 99.6L309 99.6L309 106.9L308 106.9L308 110.8L307 110.8L307 113.5L306 113.5L306 106.6L305 106.6L305 129.5L304 129.5L304 101.1L303 101.1L303 109.2L302 109.2L302 132.3L301 132.3L301 128.1L300 128.1L300 115.3L299 115.3L299 111.9L298 111.9L298 122.6L297 122.6L297 126.4L296 126.4L296 129.2L295 129.2L295 126.1L294 126.1L294 128.1L293 128.1L293 119.3L292 119.3L292 117.9L291 117.9L291 99.5L290 99.5L290 119.0L289 119.0L289 123.8L288 123.8L288 126.4L287 126.4L287 112.5L286 112.5L286 115.6L285 115.6L285 129.2L284 129.2L284 110.8L283 110.8L283 132.1L282 132.1L282 110.4L281 110.4L281 114.9L280 114.9L280 114.1L279 114.1L279 141.9L278 141.9L278 117.8L277 117.8L277 138.2L276 138.2L276 141.7L275 141.7L275 139.7L274 139.7L274 121.4L273 121.4L273 121.4L272 121.4L272 126.5L271 126.5L271 129.3L270 129.3L270 115.2L269 115.2L269 127.9L268 127.9L268 130.3L267 130.3L267 127.5L266 127.5L266 117.0L265 117.0L265 119.0L264 119.0L264 108.4L263 108.4L263 117.1L262 117.1L262 109.2L261 109.2L261 116.4L260 116.4L260 135.0L259 135.0L259 125.3L258 125.3L258 129.7L257 129.7L257 141.1L256 141.1L256 129.8L255 129.8L255 117.7L254 117.7L254 122.2L253 122.2L253 124.9L252 124.9L252 114.1L251 114.1L251 124.2L250 124.2L250 133.1L249 133.1L249 123.1L248 123.1L248 130.5L247 130.5L247 134.0L246 134.0L246 127.7L245 127.7L245 122.8L244 122.8L244 134.9L243 134.9L243 136.0L242 136.0L242 138.5L241 138.5L241 124.6L240 124.6L240 113.6L239 113.6L239 140.3L238 140.3L238 136.4L237 136.4L237 135.0L236 135.0L236 124.5L235 124.5L235 123.8L234 123.8L234 120.7L233 120.7L233 116.2L232 116.2L232 124.3L231 124.3L231 123.9L230 123.9L230 127.4L229 127.4L229 134.3L228 134.3L228 120.8L227 120.8L227 130.9L226 130.9L226 127.8L225 127.8L225 104.1L224 104.1L224 121.4L223 121.4L223 110.0L222 110.0L222 113.7L221 113.7L221 118.3L220 118.3L220 117.7L219 117.7L219 103.1L218 103.1L218 125.1L217 125.1L217 118.7L216 118.7L216 122.3L215 122.3L215 119.1L214 119.1L214 135.2L213 135.2L213 135.7L212 135.7L212 109.6L211 109.6L211 136.4L210 136.4L210 116.5L209 116.5L209 125.3L208 125.3L208 132.2L207 132.2L207 117.7L206 117.7L206 101.2L205 101.2L205 122.9L204 122.9L204 128.5L203 128.5L203 113.1L202 113.1L202 129.0L201 129.0L201 136.0L200 136.0L200 108.5L199 108.5L199 121.1L198 121.1L198 127.4L197 127.4L197 119.4L196 119.4L196 115.6L195 115.6L195 122.7L194 122.7L194 129.6L193 129.6L193 123.3L192 123.3L192 127.7L191 127.7L191 129.2L190 129.2L190 125.4L189 125.4L189 117.7L188 117.7L188 107.8L187 107.8L187 109.6L186 109.6L186 127.8L185 127.8L185 91.8L184 91.8L184 120.5L183 120.5L183 107.7L182 107.7L182 109.1L181 109.1L181 95.7L180 95.7L180 119.6L179 119.6L179 113.1L178 113.1L178 107.8L177 107.8L177 113.8L176 113.8L176 119.0L175 119.0L175 117.2L174 117.2L174 129.9L173 129.9L173 118.7L172 118.7L172 126.4L171 126.4L171 118.7L170 118.7L170 137.0L169 137.0L169 119.8L168 119.8L168 120.9L167 120.9L167 117.7L166 117.7L166 115.5L165 115.5L165 133.1L164 133.1L164 139.0L163 139.0L163 119.2L162 119.2L162 130.2L161 130.2L161 139.8L160 139.8L160 124.2L159 124.2L159 152.7L158 152.7L158 139.7L157 139.7L157 137.0L156 137.0L156 139.2L155 139.2L155 127.9L154 127.9L154 146.0L153 146.0L153 129.1L152 129.1L152 139.2L151 139.2L151 117.5L150 117.5L150 143.5L149 143.5L149 120.5L148 120.5L148 119.0L147 119.0L147 153.5L146 153.5L146 150.1L145 150.1L145 126.6L144 126.6L144 118.1L143 118.1L143 126.1L142 126.1L142 129.6L141 129.6L141 110.5L140 110.5L140 120.4L139 120.4L139 127.8L138 127.8L138 117.0L137 117.0L137 122.2L136 122.2L136 134.4L135 134.4L135 132.8L134 132.8L134 127.3L133 127.3L133 125.9L132 125.9L132 119.8L131 119.8L131 150.6L130 150.6L130 127.1L129 127.1L129 129.3L128 129.3L128 153.1L127 153.1L127 134.0L126 134.0L126 118.4L125 118.4L125 122.7L124 122.7L124 140.0L123 140.0L123 138.0L122 138.0L122 123.9L121 123.9L121 105.2L120 105.2L120 115.6L119 115.6L119 108.0L118 108.0L118 123.6L117 123.6L117 125.0L116 125.0L116 119.9L115 119.9L115 108.3L114 108.3L114 126.0L113 126.0L113 135.3L112 135.3L112 106.7L111 106.7L111 116.6L110 116.6L110 126.1L109 126.1L109 126.9L108 126.9L108 120.6L107 120.6L107 111.7L106 111.7L106 121.7L105 121.7L105 118.8L104 118.8L104 121.5L103 121.5L103 113.1L102 113.1L102 119.5L101 119.5L101 97.6L100 97.6L100 122.4L99 122.4L99 102.3L98 102.3L98 102.3L97 102.3L97 114.9L96 114.9L96 132.3L95 132.3L95 117.8L94 117.8L94 104.3L93 104.3L93 103.7L92 103.7L92 119.5L91 119.5L91 118.8L90 118.8L90 136.1L89 136.1L89 126.8L88 126.8L88 126.7L87 126.7L87 119.7L86 119.7L86 106.8L85 106.8L85 113.3L84 113.3L84 115.2L83 115.2L83 123.8L82 123.8L82 149.2L81 149.2L81 131.9L80 131.9L80 107.2L79 107.2L79 143.1L78 143.1L78 145.1L77 145.1L77 128.7L76 128.7L76 118.6L75 118.6L75 134.9L74 134.9L74 119.5L73 119.5L73 127.8L72 127.8L72 138.9L71 138.9L71 124.3L70 124.3L70 136.2L69 136.2L69 123.1L68 123.1L68 139.8L67 139.8L67 132.3L66 132.3L66 136.0L65 136.0L65 129.2L64 129.2L64 141.9L63 141.9L63 144.2L62 144.2L62 136.9L61 136.9L61 115.2L60 115.2L60 134.2L59 134.2L59 118.4L58 118.4L58 128.3L57 128.3L57 127.8L56 127.8L56 131.3L55 131.3L55 123.4L54 123.4L54 133.6L53 133.6L53 131.2L52 131.2L52 129.7L51 129.7L51 143.5L50 143.5L50 121.5L49 121.5L49 115.1L48 115.1L48 116.7L47 116.7L47 119.0L46 119.0L46 134.8L45 134.8L45 118.7L44 118.7L44 128.0L43 128.0L43 115.5L42 115.5L42 136.8L41 136.8L41 126.2L40 126.2L40 130.4L39 130.4L39 119.9L38 119.9L38 114.4L37 114.4L37 133.0L36 133.0L36 120.3L35 120.3L35 119.9L34 119.9L34 127.8L33 127.8L33 133.0L32 133.0L32 126.0L31 126.0L31 148.2L30 148.2L30 138.6L29 138.6L29 151.4L28 151.4L28 148.1L27 148.1L27 144.7L26 144.7L26 146.7L25 146.7L25 152.2L24 152.2L24 147.0L23 147.0L23 132.6L22 132.6L22 129.4L21 129.4L21 158.2L20 158.2L20 145.7L19 145.7L19 137.1L18 137.1L18 131.7L17 131.7L17 138.1L16 138.1L16 128.7L15 128.7L15 150.5L14 150.5L14 160.7L13 160.7L13 157.2L12 157.2L12 141.7L11 141.7L11 149.1L10 149.1L10 126.0L9 126.0L9 146.2L8 146.2L8 132.5L7 132.5L7 147.7L6 147.7L6 160.4L5 160.4L5 132.6L4 132.6L4 148.9L3 148.9L3 137.0L2 137.0L2 143.5L1 143.5L1 160.7L0 160.7Z" fill="#3232c8"/><path d="M0 58.0L1 58.0L1 59.0L2 59.0L2 59.2L3 59.2L3 58.3L4 58.3L4 57.2L5 57.2L5 56.5L6 56.5L6 55.8L7 55.8L7 55.5L8 55.5L8 54.8L9 54.8L9 54.7L10 54.7L10 55.1L11 55.1L11 55.5L12 55.5L12 56.6L13 56.6L13 57.4L14 57.4L14 58.7L15 58.7L15 58.2L16 58.2L16 60.3L17 60.3L17 60.7L18 60.7L18 61.1L19 61.1L19 62.8L20 62.8L20 62.3L21 62.3L21 61.6L22 61.6L22 63.3L23 63.3L23 61.0L24 61.0L24 61.4L25 61.4L25 61.2L26 61.2L26 61.0L27 61.0L27 60.5L28 60.5L28 60.1L29 60.1L29 60.0L30 60.0L30 59.8L31 59.8L31 59.6L32 59.6L32 59.3L33 59.3L33 60.7L34 60.7L34 61.0L35 61.0L35 62.2L36 62.2L36 62.6L37 62.6L37 63.2L38 63.2L38 63.4L39 63.4L39 65.3L40 65.3L40 65.2L41 65.2L41 64.8L42 64.8L42 64.9L43 64.9L43 63.9L44 63.9L44 65.1L45 65.1L45 65.2L46 65.2L46 63.9L47 63.9L47 64.1L48 64.1L48 64.9L49 64.9L49 64.0L50 64.0L50 63.9L51 63.9L51 64.3L52 64.3L52 63.9L53 63.9L53 62.4L54 62.4L54 62.8L55 62.8L55 62.1L56 62.1L56 60.8L57 60.8L57 60.8L58 60.8L58 58.8L59 58.8L59 59.6L60 59.6L60 62.2L61 62.2L61 57.7L62 57.7L62 58.7L63 58.7L63 58.3L64 58.3L64 58.7L65 58.7L65 59.5L66 59.5L66 62.4L67 62.4L67 61.8L68 61.8L68 62.9L69 62.9L69 63.3L70 63.3L70 64.5L71 64.5L71 64.3L72 64.3L72 63.3L73 63.3L73 63.4L74 63.4L74 62.4L75 62.4L75 61.7L76 61.7L76 62.8L77 62.8L77 61.0L78 61.0L78 61.0L79 61.0L79 61.8L80 61.8L80 61.5L81 61.5L81 61.1L82 61.1L82 61.8L83 61.8L83 62.3L84 62.3L84 60.9L85 60.9L85 62.2L86 62.2L86 62.0L87 62.0L87 63.4L88 63.4L88 63.0L89 63.0L89 63.1L90 63.1L90 62.6L91 62.6L91 63.7L92 63.7L92 62.9L93 62.9L93 63.9L94 63.9L94 63.9L95 63.9L95 63.0L96 63.0L96 63.2L97 63.2L97 62.4L98 62.4L98 63.4L99 63.4L99 63.8L100 63.8L100 62.8L101 62.8L101 64.1L102 64.1L102 63.1L103 63.1L103 62.5L104 62.5L104 64.3L105 64.3L105 63.0L106 63.0L106 63.4L107 63.4L107 62.4L108 62.4L108 64.0L109 64.0L109 64.2L110 64.2L110 63.9L111 63.9L111 64.2L112 64.2L112 63.1L113 63.1L113 63.8L114 63.8L114 65.0L115 65.0L115 64.5L116 64.5L116 65.2L117 65.2L117 65.6L118 65.6L118 64.9L119 64.9L119 65.2L120 65.2L120 65.7L121 65.7L121 65.9L122 65.9L122 61.7L123 61.7L123 60.5L124 60.5L124 61.3L125 61.3L125 59.8L126 59.8L126 60.4L127 60.4L127 59.7L128 59.7L128 58.1L129 58.1L129 58.7L130 58.7L130 59.0L131 59.0L131 59.5L132 59.5L132 58.6L133 58.6L133 59.7L134 59.7L134 60.7L135 60.7L135 62.0L136 62.0L136 61.9L137 61.9L137 63.4L138 63.4L138 64.1L139 64.1L139 63.9L140 63.9L140 63.7L141 63.7L141 64.1L142 64.1L142 64.2L143 64.2L143 63.7L144 63.7L144 63.7L145 63.7L145 64.4L146 64.4L146 64.0L147 64.0L147 63.4L148 63.4L148 64.0L149 64.0L149 64.8L150 64.8L150 64.6L151 64.6L151 64.6L152 64.6L152 64.1L153 64.1L153 65.4L154 65.4L154 64.0L155 64.0L155 65.7L156 65.7L156 65.1L157 65.1L157 64.8L158 64.8L158 65.0L159 65.0L159 65.7L160 65.7L160 66.1L161 66.1L161 67.1L162 67.1L162 65.5L163 65.5L163 66.7L164 66.7L164 65.0L165 65.0L165 65.2L166 65.2L166 64.8L167 64.8L167 64.8L168 64.8L168 64.1L169 64.1L169 64.8L170 64.8L170 64.3L171 64.3L171 64.7L172 64.7L172 64.8L173 64.8L173 64.0L174 64.0L174 63.8L175 63.8L175 65.3L176 65.3L176 65.1L177 65.1L177 63.7L178 63.7L178 64.0L179 64.0L179 64.2L180 64.2L180 64.6L181 64.6L181 64.1L182 64.1L182 64.3L183 64.3L183 63.8L184 63.8L184 63.4L185 63.4L185 62.9L186 62.9L186 61.7L187 61.7L187 62.3L188 62.3L188 61.9L189 61.9L189 60.7L190 60.7L190 59.9L191 59.9L191 62.7L192 62.7L192 69.9L193 69.9L193 62.3L194 62.3L194 62.0L195 62.0L195 63.5L196 63.5L196 64.2L197 64.2L197 63.1L198 63.1L198 64.6L199 64.6L199 64.0L200 64.0L200 64.3L201 64.3L201 64.1L202 64.1L202 64.3L203 64.3L203 65.5L204 65.5L204 65.8L205 65.8L205 66.2L206 66.2L206 65.3L207 65.3L207 65.9L208 65.9L208 67.3L209 67.3L209 67.1L210 67.1L210 66.6L211 66.6L211 66.9L212 66.9L212 65.9L213 65.9L213 67.2L214 67.2L214 65.9L215 65.9L215 66.9L216 66.9L216 65.6L217 65.6L217 65.8L218 65.8L218 66.5L219 66.5L219 66.4L220 66.4L220 66.3L221 66.3L221 64.8L222 64.8L222 64.8L223 64.8L223 64.1L224 64.1L224 63.8L225 63.8L225 60.1L226 60.1L226 60.0L227 60.0L227 58.1L228 58.1L228 57.8L229 57.8L229 58.2L230 58.2L230 58.7L231 58.7L231 57.8L232 57.8L232 59.4L233 59.4L233 59.7L234 59.7L234 60.4L235 60.4L235 61.7L236 61.7L236 63.3L237 63.3L237 63.9L238 63.9L238 64.3L239 64.3L239 65.3L240 65.3L240 65.3L241 65.3L241 65.3L242 65.3L242 65.8L243 65.8L243 64.4L244 64.4L244 65.1L245 65.1L245 64.6L246 64.6L246 62.7L247 62.7L247 62.5L248 62.5L248 62.4L249 62.4L249 61.6L250 61.6L250 62.2L251 62.2L251 61.5L252 61.5L252 63.1L253 63.1L253 63.2L254 63.2L254 62.2L255 62.2L255 63.9L256 63.9L256 64.2L257 64.2L257 63.8L258 63.8L258 64.2L259 64.2L259 63.2L260 63.2L260 63.3L261 63.3L261 63.1L262 63.1L262 63.2L263 63.2L263 63.0L264 63.0L264 63.9L265 63.9L265 62.4L266 62.4L266 62.4L267 62.4L267 63.2L268 63.2L268 61.4L269 61.4L269 61.6L270 61.6L270 62.7L271 62.7L271 61.9L272 61.9L272 62.2L273 62.2L273 62.9L274 62.9L274 62.8L275 62.8L275 63.6L276 63.6L276 64.7L277 64.7L277 65.1L278 65.1L278 64.6L279 64.6L279 64.8L280 64.8L280 64.8L281 64.8L281 65.7L282 65.7L282 64.3L283 64.3L283 63.9L284 63.9L284 64.9L285 64.9L285 63.8L286 63.8L286 62.4L287 62.4L287 62.2L288 62.2L288 63.2L289 63.2L289 62.8L290 62.8L290 62.8L291 62.8L291 62.7L292 62.7L292 63.0L293 63.0L293 63.0L294 63.0L294 62.0L295 62.0L295 63.0L296 63.0L296 63.8L297 63.8L297 64.5L298 64.5L298 63.2L299 63.2L299 64.2L300 64.2L300 63.1L301 63.1L301 64.6L302 64.6L302 63.3L303 63.3L303 63.9L304 63.9L304 64.3L305 64.3L305 63.6L306 63.6L306 62.7L307 62.7L307 63.3L308 63.3L308 63.4L309 63.4L309 62.9L310 62.9L310 63.8L311 63.8L311 62.9L312 62.9L312 63.7L313 63.7L313 61.8L314 61.8L314 62.0L315 62.0L315 62.3L316 62.3L316 61.6L317 61.6L317 60.7L318 60.7L318 60.3L319 60.3L319 61.1L320 61.1L320 63.6L321 63.6L321 61.0L322 61.0L322 60.9L323 60.9L323 61.7L324 61.7L324 63.9L325 63.9L325 62.3L326 62.3L326 62.2L327 62.2L327 62.1L328 62.1L328 62.7L329 62.7L329 63.6L330 63.6L330 63.7L331 63.7L331 66.2L332 66.2L332 64.7L333 64.7L333 70.4L334 70.4L334 70.1L335 70.1L335 64.2L336 64.2L336 66.1L337 66.1L337 58.7L338 58.7L338 60.9L339 60.9L339 60.4L340 60.4L340 61.1L341 61.1L341 61.3L342 61.3L342 61.9L343 61.9L343 61.9L344 61.9L344 61.9L345 61.9L345 61.5L346 61.5L346 62.4L347 62.4L347 62.8L348 62.8L348 63.1L349 63.1L349 63.2L350 63.2L350 62.1L351 62.1L351 62.9L352 62.9L352 61.8L353 61.8L353 61.3L354 61.3L354 61.2L355 61.2L355 59.4L356 59.4L356 58.4L357 58.4L357 57.9L358 57.9L358 57.9L359 57.9L359 57.9L360 57.9L360 57.3L361 57.3L361 57.9L362 57.9L362 58.6L363 58.6L363 59.0L364 59.0L364 58.9L365 58.9L365 59.8L366 59.8L366 59.7L367 59.7L367 60.2L368 60.2L368 60.3L369 60.3L369 61.3L370 61.3L370 62.2L371 62.2L371 62.4L372 62.4L372 62.7L373 62.7L373 62.1L374 62.1L374 63.5L375 63.5L375 63.2L376 63.2L376 61.0L377 61.0L377 61.4L378 61.4L378 62.8L379 62.8L379 62.1L380 62.1L380 62.8L381 62.8L381 62.5L382 62.5L382 61.6L383 61.6L383 61.2L384 61.2L384 60.9L385 60.9L385 60.4L386 60.4L386 59.0L387 59.0L387 58.5L388 58.5L388 59.0L389 59.0L389 57.8L390 57.8L390 59.4L391 59.4L391 58.2L392 58.2L392 58.5L393 58.5L393 59.3L394 59.3L394 59.2L395 59.2L395 60.6L396 60.6L396 59.3L397 59.3L397 60.8L398 60.8L398 61.4L399 61.4L399 61.6L400 61.6L400 62.2L401 62.2L401 61.4L402 61.4L402 60.7L403 60.7L403 61.4L404 61.4L404 61.3L405 61.3L405 60.3L406 60.3L406 61.1L407 61.1L407 60.6L408 60.6L408 60.0L409 60.0L409 61.4L410 61.4L410 60.8L411 60.8L411 63.0L412 63.0L412 66.3L413 66.3L413 61.6L414 61.6L414 62.6L415 62.6L415 60.8L416 60.8L416 59.4L417 59.4L417 60.4L418 60.4L418 59.6L419 59.6L419 59.6L420 59.6L420 59.9L421 59.9L421 60.6L422 60.6L422 60.9L423 60.9L423 62.0L424 62.0L424 62.1L425 62.1L425 61.7L426 61.7L426 62.9L427 62.9L427 64.6L428 64.6L428 64.6L429 64.6L429 63.7L430 63.7L430 64.7L431 64.7L431 64.2L432 64.2L432 64.2L433 64.2L433 64.1L434 64.1L434 58.2L435 58.2L435 58.4L436 58.4L436 58.0L437 58.0L437 59.1L438 59.1L438 57.9L439 57.9L439 57.9L440 57.9L440 58.6L441 58.6L441 59.7L442 59.7L442 57.8L443 57.8L443 58.5L444 58.5L444 57.2L445 57.2L445 57.9L446 57.9L446 57.1L447 57.1L447 55.8L448 55.8L448 56.1L449 56.1L449 55.5L450 55.5L450 56.1L451 56.1L451 57.2L452 57.2L452 58.1L453 58.1L453 57.1L454 57.1L454 59.1L455 59.1L455 60.2L456 60.2L456 59.8L457 59.8L457 60.6L458 60.6L458 62.7L459 62.7L459 63.2L460 63.2L460 63.3L461 63.3L461 62.4L462 62.4L462 63.4L463 63.4L463 62.2L464 62.2L464 61.2L465 61.2L465 60.4L466 60.4L466 60.8L467 60.8L467 60.0L468 60.0L468 60.0L469 60.0L469 59.5L470 59.5L470 58.4L471 58.4L471 60.3L472 60.3L472 59.7L473 59.7L473 59.9L474 59.9L474 60.7L475 60.7L475 61.4L476 61.4L476 62.6L477 62.6L477 64.2L478 64.2L478 64.2L479 64.2L479 65.0L480 65.0L480 64.8L481 64.8L481 64.9L482 64.9L482 63.8L483 63.8L483 64.3L484 64.3L484 63.1L485 63.1L485 61.4L486 61.4L486 60.4L487 60.4L487 60.9L488 60.9L488 59.4L489 59.4L489 59.4L490 59.4L490 58.8L491 58.8L491 59.9L492 59.9L492 60.5L493 60.5L493 59.9L494 59.9L494 59.4L495 59.4L495 59.6L496 59.6L496 60.5L497 60.5L497 59.8L498 59.8L498 60.8L499 60.8L499 60.2L500 60.2L500 60.8L501 60.8L501 61.1L502 61.1L502 60.3L503 60.3L503 60.9L504 60.9L504 60.1L505 60.1L505 59.2L506 59.2L506 59.1L507 59.1L507 59.1L508 59.1L508 58.0L509 58.0L509 58.7L510 58.7L510 59.4L511 59.4L511 59.4L512 59.4L512 59.3L513 59.3L513 59.5L514 59.5L514 58.6L515 58.6L515 59.7L516 59.7L516 59.4L517 59.4L517 58.9L518 58.9L518 59.6L519 59.6L519 59.9L520 59.9L520 60.4L521 60.4L521 60.3L522 60.3L522 60.8L523 60.8L523 60.7L524 60.7L524 61.7L525 61.7L525 61.7L526 61.7L526 61.8L527 61.8L527 62.9L528 62.9L528 63.1L529 63.1L529 62.1L530 62.1L530 62.8L531 62.8L531 63.4L532 63.4L532 56.7L533 56.7L533 57.2L534 57.2L534 58.2L535 58.2L535 58.4L536 58.4L536 58.3L537 58.3L537 59.0L538 59.0L538 59.6L539 59.6L539 59.3L540 59.3L540 59.3L541 59.3L541 58.9L542 58.9L542 59.7L543 59.7L543 60.0L544 60.0L544 59.8L545 59.8L545 59.7L546 59.7L546 60.9L547 60.9L547 60.5L548 60.5L548 60.7L549 60.7L549 62.3L550 62.3L550 61.0L551 61.0L551 61.7L552 61.7L552 60.9L553 60.9L553 61.1L554 61.1L554 60.2L555 60.2L555 60.0L556 60.0L556 61.4L557 61.4L557 61.0L558 61.0L558 60.0L559 60.0L559 60.5L560 60.5L560 59.1L561 59.1L561 60.7L562 60.7L562 60.5L563 60.5L563 60.1L564 60.1L564 60.2L565 60.2L565 59.9L566 59.9L566 60.3L567 60.3L567 60.6L568 60.6L568 61.3L569 61.3L569 60.5L570 60.5L570 60.7L571 60.7L571 62.1L572 62.1L572 61.4L573 61.4L573 61.6L574 61.6L574 62.9L575 62.9L575 62.9L576 62.9L576 63.9L577 63.9L577 64.0L578 64.0L578 64.8L579 64.8L579 65.0L580 65.0L580 65.9L581 65.9L581 62.3L582 62.3L582 62.7L583 62.7L583 62.3L584 62.3L584 60.2L585 60.2L585 59.9L586 59.9L586 59.5L587 59.5L587 59.4L588 59.4L588 57.4L589 57.4L589 58.0L590 58.0L590 58.1L591 58.1L591 57.8L592 57.8L592 57.5L593 57.5L593 58.3L594 58.3L594 59.1L595 59.1L595 59.4L596 59.4L596 60.6L597 60.6L597 60.7L598 60.7L598 60.7L599 60.7L599 60.7L600 60.7L600 62.0L601 62.0L601 61.1L602 61.1L602 61.6L603 61.6L603 61.0L604 61.0L604 60.3L605 60.3L605 61.6L606 61.6L606 61.9L607 61.9L607 60.4L608 60.4L608 61.4L609 61.4L609 61.3L610 61.3L610 59.8L611 59.8L611 59.9L612 59.9L612 60.5L613 60.5L613 61.2L614 61.2L614 63.0L615 63.0L615 64.2L616 64.2L616 63.2L617 63.2L617 66.5L618 66.5L618 64.6L619 64.6L619 64.9L620 64.9L620 65.3L621 65.3L621 64.3L622 64.3L622 65.4L623 65.4L623 65.1L624 65.1L624 63.8L625 63.8L625 64.0L626 64.0L626 65.3L627 65.3L627 64.8L628 64.8L628 65.2L629 65.2L629 64.4L630 64.4L630 58.4L631 58.4L631 58.9L632 58.9L632 59.7L633 59.7L633 58.7L634 58.7L634 58.6L635 58.6L635 60.0L636 60.0L636 60.6L637 60.6L637 61.4L638 61.4L638 61.8L639 61.8L639 61.2L640 61.2L640 61.7L641 61.7L641 60.8L642 60.8L642 62.0L643 62.0L643 61.7L644 61.7L644 60.4L645 60.4L645 60.7L646 60.7L646 61.6L647 61.6L647 61.4L648 61.4L648 60.2L649 60.2L649 61.3L650 61.3L650 60.8L651 60.8L651 60.4L652 60.4L652 61.6L653 61.6L653 60.7L654 60.7L654 61.3L655 61.3L655 60.8L656 60.8L656 61.6L657 61.6L657 61.7L658 61.7L658 62.0L659 62.0L659 62.5L660 62.5L660 62.8L661 62.8L661 61.8L662 61.8L662 62.0L663 62.0L663 62.3L664 62.3L664 62.3L665 62.3L665 62.6L666 62.6L666 62.0L667 62.0L667 61.5L668 61.5L668 62.8L669 62.8L669 61.8L670 61.8L670 62.0L671 62.0L671 61.8L672 61.8L672 61.3L673 61.3L673 61.3L674 61.3L674 63.0L675 63.0L675 63.2L676 63.2L676 63.3L677 63.3L677 62.1L678 62.1L678 62.0L679 62.0L679 62.8L680 62.8L680 100.8L679 100.8L679 101.6L678 101.6L678 101.5L677 101.5L677 100.3L676 100.3L676 100.4L675 100.4L675 100.6L674 100.6L674 102.3L673 102.3L673 102.3L672 102.3L672 101.8L671 101.8L671 101.6L670 101.6L670 101.8L669 101.8L669 100.8L668 100.8L668 102.1L667 102.1L667 101.6L666 101.6L666 101.0L665 101.0L665 101.3L664 101.3L664 101.3L663 101.3L663 101.6L662 101.6L662 101.8L661 101.8L661 100.8L660 100.8L660 101.2L659 101.2L659 101.6L658 101.6L658 101.9L657 101.9L657 102.0L656 102.0L656 102.8L655 102.8L655 102.3L654 102.3L654 102.9L653 102.9L653 102.0L652 102.0L652 103.1L651 103.1L651 102.8L650 102.8L650 102.3L649 102.3L649 103.4L648 103.4L648 102.2L647 102.2L647 102.0L646 102.0L646 102.9L645 102.9L645 103.1L644 103.1L644 101.9L643 101.9L643 101.6L642 101.6L642 102.7L641 102.7L641 101.9L640 101.9L640 102.4L639 102.4L639 101.8L638 101.8L638 102.2L637 102.2L637 103.0L636 103.0L636 103.6L635 103.6L635 104.9L634 104.9L634 104.8L633 104.8L633 103.8L632 103.8L632 104.6L631 104.6L631 105.1L630 105.1L630 99.3L629 99.3L629 98.5L628 98.5L628 98.9L627 98.9L627 98.4L626 98.4L626 99.6L625 99.6L625 99.8L624 99.8L624 98.5L623 98.5L623 98.3L622 98.3L622 99.3L621 99.3L621 98.4L620 98.4L620 98.7L619 98.7L619 99.1L618 99.1L618 100.5L617 100.5L617 100.4L616 100.4L616 101.8L615 101.8L615 100.7L614 100.7L614 102.4L613 102.4L613 103.1L612 103.1L612 103.7L611 103.7L611 103.7L610 103.7L610 102.3L609 102.3L609 102.2L608 102.2L608 103.1L607 103.1L607 95.8L606 95.8L606 102.0L605 102.0L605 103.2L604 103.2L604 102.6L603 102.6L603 102.0L602 102.0L602 102.5L601 102.5L601 101.6L600 101.6L600 102.8L599 102.8L599 102.9L598 102.9L598 102.9L597 102.9L597 102.9L596 102.9L596 104.1L595 104.1L595 104.5L594 104.5L594 105.2L593 105.2L593 106.0L592 106.0L592 105.8L591 105.8L591 105.4L590 105.4L590 105.5L589 105.5L589 106.1L588 106.1L588 104.2L587 104.2L587 104.0L586 104.0L586 103.7L585 103.7L585 103.4L584 103.4L584 101.3L583 101.3L583 100.9L582 100.9L582 101.3L581 101.3L581 97.8L580 97.8L580 97.0L579 97.0L579 98.8L578 98.8L578 99.7L577 99.7L577 99.7L576 99.7L576 100.7L575 100.7L575 100.8L574 100.8L574 102.0L573 102.0L573 102.2L572 102.2L572 101.5L571 101.5L571 102.9L570 102.9L570 103.1L569 103.1L569 102.3L568 102.3L568 103.0L567 103.0L567 103.2L566 103.2L566 103.7L565 103.7L565 103.3L564 103.3L564 103.4L563 103.4L563 103.1L562 103.1L562 102.9L561 102.9L561 104.5L560 104.5L560 103.1L559 103.1L559 103.6L558 103.6L558 102.6L557 102.6L557 102.2L556 102.2L556 103.6L555 103.6L555 103.4L554 103.4L554 102.4L553 102.4L553 102.7L552 102.7L552 101.8L551 101.8L551 102.5L550 102.5L550 101.3L549 101.3L549 102.8L548 102.8L548 103.1L547 103.1L547 102.7L546 102.7L546 103.8L545 103.8L545 103.7L544 103.7L544 103.6L543 103.6L543 103.9L542 103.9L542 104.6L541 104.6L541 104.3L540 104.3L540 104.3L539 104.3L539 104.0L538 104.0L538 104.5L537 104.5L537 105.3L536 105.3L536 105.2L535 105.2L535 105.3L534 105.3L534 106.3L533 106.3L533 106.8L532 106.8L532 100.2L531 100.2L531 100.8L530 100.8L530 101.5L529 101.5L529 100.5L528 100.5L528 100.7L527 100.7L527 101.8L526 101.8L526 101.5L525 101.5L525 101.9L524 101.9L524 101.0L523 101.0L523 102.8L522 102.8L522 103.2L521 103.2L521 100.1L520 100.1L520 103.6L519 103.6L519 101.0L518 101.0L518 104.6L517 104.6L517 104.2L516 104.2L516 103.9L515 103.9L515 104.9L514 104.9L514 104.0L513 104.0L513 104.3L512 104.3L512 104.1L511 104.1L511 104.1L510 104.1L510 104.8L509 104.8L509 105.5L508 105.5L508 104.5L507 104.5L507 104.4L506 104.4L506 104.3L505 104.3L505 103.4L504 103.4L504 102.7L503 102.7L503 103.3L502 103.3L502 102.5L501 102.5L501 102.8L500 102.8L500 103.4L499 103.4L499 102.8L498 102.8L498 103.8L497 103.8L497 103.0L496 103.0L496 103.9L495 103.9L495 104.2L494 104.2L494 103.6L493 103.6L493 103.3L492 103.3L492 103.7L491 103.7L491 104.7L490 104.7L490 104.1L489 104.1L489 104.1L488 104.1L488 102.7L487 102.7L487 103.2L486 103.2L486 102.1L485 102.1L485 100.5L484 100.5L484 99.3L483 99.3L483 99.8L482 99.8L482 98.8L481 98.8L481 98.8L480 98.8L480 98.7L479 98.7L479 99.4L478 99.4L478 99.4L477 99.4L477 101.0L476 101.0L476 102.2L475 102.2L475 102.9L474 102.9L474 103.7L473 103.7L473 104.6L472 104.6L472 103.3L471 103.3L471 101.8L470 101.8L470 104.1L469 104.1L469 103.6L468 103.6L468 103.6L467 103.6L467 102.8L466 102.8L466 103.2L465 103.2L465 102.4L464 102.4L464 101.4L463 101.4L463 100.2L462 100.2L462 101.2L461 101.2L461 100.3L460 100.3L460 100.4L459 100.4L459 100.9L458 100.9L458 103.0L457 103.0L457 103.8L456 103.8L456 103.4L455 103.4L455 104.5L454 104.5L454 106.4L453 106.4L453 105.5L452 105.5L452 106.3L451 106.3L451 107.4L450 107.4L450 108.0L449 108.0L449 107.4L448 107.4L448 107.7L447 107.7L447 106.4L446 106.4L446 105.6L445 105.6L445 106.3L444 106.3L444 105.0L443 105.0L443 105.7L442 105.7L442 103.9L441 103.9L441 105.0L440 105.0L440 105.6L439 105.6L439 105.7L438 105.7L438 104.4L437 104.4L437 105.5L436 105.5L436 105.2L435 105.2L435 105.3L434 105.3L434 99.6L433 99.6L433 99.5L432 99.5L432 99.4L431 99.4L431 99.0L430 99.0L430 99.9L429 99.9L429 99.0L428 99.0L428 99.0L427 99.0L427 100.7L426 100.7L426 101.9L425 101.9L425 101.5L424 101.5L424 101.6L423 101.6L423 102.7L422 102.7L422 103.0L421 103.0L421 103.7L420 103.7L420 103.9L419 103.9L419 103.9L418 103.9L418 103.1L417 103.1L417 104.1L416 104.1L416 102.8L415 102.8L415 103.8L414 103.8L414 102.0L413 102.0L413 103.7L412 103.7L412 102.8L411 102.8L411 97.5L410 97.5L410 102.2L409 102.2L409 103.5L408 103.5L408 103.0L407 103.0L407 102.5L406 102.5L406 102.6L405 102.6L405 102.3L404 102.3L404 102.2L403 102.2L403 102.9L402 102.9L402 102.2L401 102.2L401 101.4L400 101.4L400 102.4L399 102.4L399 102.2L398 102.2L398 102.8L397 102.8L397 104.3L396 104.3L396 103.0L395 103.0L395 104.4L394 104.4L394 104.2L393 104.2L393 105.0L392 105.0L392 105.3L391 105.3L391 106.3L390 106.3L390 105.4L389 105.4L389 104.6L388 104.6L388 105.1L387 105.1L387 104.5L386 104.5L386 102.1L385 102.1L385 102.7L384 102.7L384 102.4L383 102.4L383 102.0L382 102.0L382 101.1L381 101.1L381 100.8L380 100.8L380 101.5L379 101.5L379 100.8L378 100.8L378 102.2L377 102.2L377 102.6L376 102.6L376 100.4L375 100.4L375 100.1L374 100.1L374 101.5L373 101.5L373 100.9L372 100.9L372 101.2L371 101.2L371 101.4L370 101.4L370 102.3L369 102.3L369 103.2L368 103.2L368 103.4L367 103.4L367 103.8L366 103.8L366 103.8L365 103.8L365 104.7L364 104.7L364 104.6L363 104.6L363 104.9L362 104.9L362 105.6L361 105.6L361 106.2L360 106.2L360 105.6L359 105.6L359 105.6L358 105.6L358 105.6L357 105.6L357 105.1L356 105.1L356 104.1L355 104.1L355 102.4L354 102.4L354 102.2L353 102.2L353 101.8L352 101.8L352 100.8L351 100.8L351 101.5L350 101.5L350 100.4L349 100.4L349 100.6L348 100.6L348 100.8L347 100.8L347 101.2L346 101.2L346 102.1L345 102.1L345 101.7L344 101.7L344 101.7L343 101.7L343 101.7L342 101.7L342 102.3L341 102.3L341 102.5L340 102.5L340 103.2L339 103.2L339 102.7L338 102.7L338 104.8L337 104.8L337 97.6L336 97.6L336 99.4L335 99.4L335 98.3L334 98.3L334 100.1L333 100.1L333 99.0L332 99.0L332 100.3L331 100.3L331 100.0L330 100.0L330 100.1L329 100.1L329 100.9L328 100.9L328 101.5L327 101.5L327 101.4L326 101.4L326 101.3L325 101.3L325 102.6L324 102.6L324 101.9L323 101.9L323 102.7L322 102.7L322 102.6L321 102.6L321 102.0L320 102.0L320 102.5L319 102.5L319 103.2L318 103.2L318 102.8L317 102.8L317 102.0L316 102.0L316 101.4L315 101.4L315 101.6L314 101.6L314 101.8L313 101.8L313 100.0L312 100.0L312 100.7L311 100.7L311 99.8L310 99.8L310 99.6L309 99.6L309 100.2L308 100.2L308 100.3L307 100.3L307 100.9L306 100.9L306 100.1L305 100.1L305 99.3L304 99.3L304 99.7L303 99.7L303 100.4L302 100.4L302 99.0L301 99.0L301 100.5L300 100.5L300 99.4L299 99.4L299 100.4L298 100.4L298 99.2L297 99.2L297 99.8L296 99.8L296 100.6L295 100.6L295 101.6L294 101.6L294 100.6L293 100.6L293 100.7L292 100.7L292 100.9L291 100.9L291 99.5L290 99.5L290 100.8L289 100.8L289 100.4L288 100.4L288 101.4L287 101.4L287 101.3L286 101.3L286 99.8L285 99.8L285 98.8L284 98.8L284 99.7L283 99.7L283 99.3L282 99.3L282 98.0L281 98.0L281 98.8L280 98.8L280 98.8L279 98.8L279 99.1L278 99.1L278 98.6L277 98.6L277 98.9L276 98.9L276 100.0L275 100.0L275 100.8L274 100.8L274 100.7L273 100.7L273 101.4L272 101.4L272 101.7L271 101.7L271 100.9L270 100.9L270 102.0L269 102.0L269 102.2L268 102.2L268 100.5L267 100.5L267 101.2L266 101.2L266 101.2L265 101.2L265 99.8L264 99.8L264 100.6L263 100.6L263 100.5L262 100.5L262 100.6L261 100.6L261 100.3L260 100.3L260 100.4L259 100.4L259 99.5L258 99.5L258 99.8L257 99.8L257 99.5L256 99.5L256 99.8L255 99.8L255 101.5L254 101.5L254 100.4L253 100.4L253 100.6L252 100.6L252 102.1L251 102.1L251 101.4L250 101.4L250 102.0L249 102.0L249 101.2L248 101.2L248 101.1L247 101.1L247 100.9L246 100.9L246 99.0L245 99.0L245 98.6L244 98.6L244 99.3L243 99.3L243 97.9L242 97.9L242 98.4L241 98.4L241 98.4L240 98.4L240 98.4L239 98.4L239 99.4L238 99.4L238 99.7L237 99.7L237 100.4L236 100.4L236 101.9L235 101.9L235 103.2L234 103.2L234 103.9L233 103.9L233 104.1L232 104.1L232 105.7L231 105.7L231 104.9L230 104.9L230 105.3L229 105.3L229 105.8L228 105.8L228 105.4L227 105.4L227 103.6L226 103.6L226 103.4L225 103.4L225 99.8L224 99.8L224 99.5L223 99.5L223 98.9L222 98.9L222 98.8L221 98.8L221 97.4L220 97.4L220 97.3L219 97.3L219 97.1L218 97.1L218 98.2L217 98.2L217 98.1L216 98.1L216 96.8L215 96.8L215 97.8L214 97.8L214 96.5L213 96.5L213 97.8L212 97.8L212 96.8L211 96.8L211 97.1L210 97.1L210 96.9L209 96.9L209 96.4L208 96.4L208 97.8L207 97.8L207 98.4L206 98.4L206 97.5L205 97.5L205 97.9L204 97.9L204 98.2L203 98.2L203 99.3L202 99.3L202 99.6L201 99.6L201 99.3L200 99.3L200 99.6L199 99.6L199 99.1L198 99.1L198 100.5L197 100.5L197 99.5L196 99.5L196 100.1L195 100.1L195 101.6L194 101.6L194 101.3L193 101.3L193 101.7L192 101.7L192 102.1L191 102.1L191 103.7L190 103.7L190 102.9L189 102.9L189 101.7L188 101.7L188 101.3L187 101.3L187 101.9L186 101.9L186 100.7L185 100.7L185 91.8L184 91.8L184 99.8L183 99.8L183 99.3L182 99.3L182 99.5L181 99.5L181 95.7L180 95.7L180 99.5L179 99.5L179 99.6L178 99.6L178 100.0L177 100.0L177 98.6L176 98.6L176 98.3L175 98.3L175 99.9L174 99.9L174 99.7L173 99.7L173 98.9L172 98.9L172 99.0L171 99.0L171 99.3L170 99.3L170 98.9L169 98.9L169 99.5L168 99.5L168 98.8L167 98.8L167 98.9L166 98.9L166 98.5L165 98.5L165 98.6L164 98.6L164 97.0L163 97.0L163 98.1L162 98.1L162 96.6L161 96.6L161 97.5L160 97.5L160 98.0L159 98.0L159 98.6L158 98.6L158 98.8L157 98.8L157 98.5L156 98.5L156 98.0L155 98.0L155 99.7L154 99.7L154 98.2L153 98.2L153 99.5L152 99.5L152 99.1L151 99.1L151 99.1L150 99.1L150 98.8L149 98.8L149 99.7L148 99.7L148 100.3L147 100.3L147 99.6L146 99.6L146 99.3L145 99.3L145 100.0L144 100.0L144 100.0L143 100.0L143 99.5L142 99.5L142 99.5L141 99.5L141 99.9L140 99.9L140 99.7L139 99.7L139 99.5L138 99.5L138 100.3L137 100.3L137 101.7L136 101.7L136 101.6L135 101.6L135 102.8L134 102.8L134 103.9L133 103.9L133 105.0L132 105.0L132 104.0L131 104.0L131 104.5L130 104.5L130 104.9L129 104.9L129 105.4L128 105.4L128 103.9L127 103.9L127 103.2L126 103.2L126 103.7L125 103.7L125 102.3L124 102.3L124 103.0L123 103.0L123 101.8L122 101.8L122 97.8L121 97.8L121 98.0L120 98.0L120 98.5L119 98.5L119 98.7L118 98.7L118 98.0L117 98.0L117 98.5L116 98.5L116 99.2L115 99.2L115 98.7L114 98.7L114 99.8L113 99.8L113 100.6L112 100.6L112 99.5L111 99.5L111 99.7L110 99.7L110 99.4L109 99.4L109 99.7L108 99.7L108 101.2L107 101.2L107 100.3L106 100.3L106 100.6L105 100.6L105 99.4L104 99.4L104 101.1L103 101.1L103 100.5L102 100.5L102 99.5L101 99.5L101 97.6L100 97.6L100 99.9L99 99.9L99 100.3L98 100.3L98 101.2L97 101.2L97 100.4L96 100.4L96 100.6L95 100.6L95 99.8L94 99.8L94 99.8L93 99.8L93 100.7L92 100.7L92 99.9L91 99.9L91 101.0L90 101.0L90 100.5L89 100.5L89 100.6L88 100.6L88 100.2L87 100.2L87 102.2L86 102.2L86 101.4L85 101.4L85 102.6L84 102.6L84 101.3L83 101.3L83 101.8L82 101.8L82 102.5L81 102.5L81 102.1L80 102.1L80 101.8L79 101.8L79 102.6L78 102.6L78 102.5L77 102.5L77 100.8L76 100.8L76 101.9L75 101.9L75 101.2L74 101.2L74 100.2L73 100.2L73 100.3L72 100.3L72 99.3L71 99.3L71 99.2L70 99.2L70 100.3L69 100.3L69 100.7L68 100.7L68 101.8L67 101.8L67 101.2L66 101.2L66 104.0L65 104.0L65 104.8L64 104.8L64 105.2L63 105.2L63 104.8L62 104.8L62 105.8L61 105.8L61 103.7L60 103.7L60 103.9L59 103.9L59 104.8L58 104.8L58 102.8L57 102.8L57 102.8L56 102.8L56 101.5L55 101.5L55 100.8L54 100.8L54 101.2L53 101.2L53 99.7L52 99.7L52 99.4L51 99.4L51 99.8L50 99.8L50 99.6L49 99.6L49 98.8L48 98.8L48 99.5L47 99.5L47 99.8L46 99.8L46 98.5L45 98.5L45 98.5L44 98.5L44 99.8L43 99.8L43 98.8L42 98.8L42 98.9L41 98.9L41 98.5L40 98.5L40 98.4L39 98.4L39 100.3L38 100.3L38 100.4L37 100.4L37 101.0L36 101.0L36 101.4L35 101.4L35 102.6L34 102.6L34 102.9L33 102.9L33 104.2L32 104.2L32 103.9L31 103.9L31 103.8L30 103.8L30 103.6L29 103.6L29 103.5L28 103.5L28 103.1L27 103.1L27 102.6L26 102.6L26 102.3L25 102.3L25 102.2L24 102.2L24 102.6L23 102.6L23 100.4L22 100.4L22 102.0L21 102.0L21 101.3L20 101.3L20 100.9L19 100.9L19 102.5L18 102.5L18 102.8L17 102.8L17 103.3L16 103.3L16 105.3L15 105.3L15 104.8L14 104.8L14 106.1L13 106.1L13 106.9L12 106.9L12 108.0L11 108.0L11 108.4L10 108.4L10 108.7L9 108.7L9 108.6L8 108.6L8 107.9L7 107.9L7 107.7L6 107.7L6 107.0L5 107.0L5 106.3L4 106.3L4 105.3L3 105.3L3 104.3L2 104.3L2 104.5L1 104.5L1 105.5L0 105.5Z" fill="#6464dc"/></svg>
<div class="abs" style="left:122px;top:507px;width:1078px;height:2px;background:#000"></div>
<div class="abs" style="left:122px;top:491px;width:17px;height:16px;background:#ccd6ea;border-right:1px solid #b8bccc"></div>
<svg style="left:126px;top:497px" width="11" height="7"><path d="M0 6.5L5.5 0.5L11 6.5Z" fill="#000"/></svg>
<div class="abs" style="left:140px;top:491px;width:58px;height:16px;background:#ccd6ea;border-right:1px solid #b8bccc"></div>
<div class="t" style="left:71px;width:200px;text-align:center;top:493.27px;font-size:11.5px;color:#000;">Select</div>
<div class="abs" style="left:117px;top:513px;width:1086px;height:117px;background:#646886"></div>
<div class="abs" style="left:1203px;top:159px;width:18px;height:471px;background:#f0f0f0"></div>
<div class="abs" style="left:1212px;top:173px;width:2px;height:438px;background:#858585"></div>
<div class="abs" style="left:117px;top:630px;width:1104px;height:17px;background:#f0f0f0"></div>
<div class="abs" style="left:269px;top:637px;width:917px;height:2px;background:#858585"></div>
<div class="abs" style="left:117px;top:647px;width:1104px;height:57px;background:#f5f7fc;border-top:1px solid #d4d4d4;border-bottom:1px solid #c8c8c8"></div>
<div class="abs" style="left:126px;top:648px;width:1px;height:55px;background:#d0d0d0"></div>
<div class="abs" style="left:120px;top:650px;width:6px;height:52px"><div style="position:absolute;left:1px;top:3px;width:4px;height:1px;background:#b4b4b8"></div><div style="position:absolute;left:1px;top:7px;width:4px;height:1px;background:#b4b4b8"></div><div style="position:absolute;left:1px;top:11px;width:4px;height:1px;background:#b4b4b8"></div><div style="position:absolute;left:1px;top:15px;width:4px;height:1px;background:#b4b4b8"></div><div style="position:absolute;left:1px;top:19px;width:4px;height:1px;background:#b4b4b8"></div><div style="position:absolute;left:1px;top:23px;width:4px;height:1px;background:#b4b4b8"></div><div style="position:absolute;left:1px;top:27px;width:4px;height:1px;background:#b4b4b8"></div><div style="position:absolute;left:1px;top:31px;width:4px;height:1px;background:#b4b4b8"></div><div style="position:absolute;left:1px;top:35px;width:4px;height:1px;background:#b4b4b8"></div><div style="position:absolute;left:1px;top:39px;width:4px;height:1px;background:#b4b4b8"></div><div style="position:absolute;left:1px;top:43px;width:4px;height:1px;background:#b4b4b8"></div><div style="position:absolute;left:1px;top:47px;width:4px;height:1px;background:#b4b4b8"></div></div>
<div class="t" style="left:134.2px;top:656.14px;font-size:12px;color:#000;letter-spacing:-0.2px">Project Rate (Hz)</div>
<div class="abs" style="left:232px;top:654px;width:1px;height:14px;background:#a0a0a0"></div>
<div class="t" style="left:239.3px;top:656.14px;font-size:12px;color:#000;letter-spacing:-0.1px">Snap-To</div>
<div class="abs" style="left:313px;top:654px;width:1px;height:14px;background:#a0a0a0"></div>
<div class="abs" style="left:134px;top:676px;width:92px;height:23px;background:#fff;border:1px solid #d0d0d0;border-bottom-color:#b0b0b0;border-radius:2px"></div>
<div class="t" style="left:140px;top:680.84px;font-size:12px;color:#000;letter-spacing:-0.1px">44100</div>
<svg style="left:213px;top:685.0px" width="9" height="5"><path d="M0.5 0.5L4.5 4.5L8.5 0.5" stroke="#333" stroke-width="1" fill="none"/></svg>
<div class="abs" style="left:134px;top:676px;width:92px;height:23px;border:1px solid #7c7c7c;border-radius:2px"></div>
<div class="abs" style="left:232px;top:681px;width:1px;height:16px;background:#a0a0a0"></div>
<div class="abs" style="left:239px;top:676px;width:68px;height:23px;background:#fff;border:1px solid #d0d0d0;border-bottom-color:#b0b0b0;border-radius:2px"></div>
<div class="t" style="left:244px;top:680.84px;font-size:12px;color:#000;letter-spacing:-0.1px">Off</div>
<svg style="left:294px;top:685.0px" width="9" height="5"><path d="M0.5 0.5L4.5 4.5L8.5 0.5" stroke="#333" stroke-width="1" fill="none"/></svg>
<div class="abs" style="left:313px;top:681px;width:1px;height:16px;background:#a0a0a0"></div>
<div class="abs" style="left:320px;top:649px;width:318px;height:22px;background:#fff;border:1px solid #d0d0d0;border-bottom-color:#b0b0b0;border-radius:2px"></div>
<div class="t" style="left:324px;top:653.84px;font-size:12px;color:#000;letter-spacing:-0.1px">Start and End of Selection</div>
<svg style="left:625px;top:657.5px" width="9" height="5"><path d="M0.5 0.5L4.5 4.5L8.5 0.5" stroke="#333" stroke-width="1" fill="none"/></svg>
<div class="abs" style="left:320px;top:676px;width:155px;height:21px;background:#b6b9c6;border-top:2px solid #6e6e6e;border-left:2px solid #6e6e6e;border-right:1px solid #e0e0e0;border-bottom:1px solid #e0e0e0"></div>
<div class="abs" style="left:322.5px;top:678px;width:22px;height:18px;background:#cdcdd1"></div>
<div class="abs" style="left:345px;top:678px;width:12px;height:18px;background:#b6b9c5"></div>
<div class="abs" style="left:357.5px;top:678px;width:22px;height:18px;background:#cdcdd1"></div>
<div class="abs" style="left:380px;top:678px;width:16px;height:18px;background:#b6b9c5"></div>
<div class="abs" style="left:396.5px;top:678px;width:21.5px;height:18px;background:#cdcdd1"></div>
<div class="abs" style="left:418.5px;top:678px;width:3px;height:18px;background:#b6b9c5"></div>
<div class="abs" style="left:421.5px;top:678px;width:33px;height:18px;background:#cdcdd1"></div>
<div class="abs" style="left:454.5px;top:678px;width:10.5px;height:18px;background:#b6b9c5"></div>
<div class="t" style="left:228.0px;width:200px;text-align:center;top:681.60px;font-size:13px;color:#1c1cb4;">0</div>
<div class="t" style="left:239.0px;width:200px;text-align:center;top:681.60px;font-size:13px;color:#1c1cb4;">0</div>
<div class="t" style="left:251.0px;width:200px;text-align:center;top:681.60px;font-size:13px;color:#1c1cb4;">h</div>
<div class="t" style="left:263.0px;width:200px;text-align:center;top:681.60px;font-size:13px;color:#1c1cb4;">0</div>
<div class="t" style="left:274.0px;width:200px;text-align:center;top:681.60px;font-size:13px;color:#1c1cb4;">0</div>
<div class="t" style="left:288.0px;width:200px;text-align:center;top:681.60px;font-size:13px;color:#1c1cb4;">m</div>
<div class="t" style="left:301.875px;width:200px;text-align:center;top:681.60px;font-size:13px;color:#1c1cb4;">0</div>
<div class="t" style="left:312.625px;width:200px;text-align:center;top:681.60px;font-size:13px;color:#1c1cb4;">1</div>
<div class="t" style="left:327.0px;width:200px;text-align:center;top:681.60px;font-size:13px;color:#1c1cb4;">9</div>
<div class="t" style="left:338.0px;width:200px;text-align:center;top:681.60px;font-size:13px;color:#1c1cb4;">8</div>
<div class="t" style="left:349.0px;width:200px;text-align:center;top:681.60px;font-size:13px;color:#1c1cb4;">0</div>
<div class="t" style="left:359.75px;width:200px;text-align:center;top:681.60px;font-size:13px;color:#1c1cb4;">s</div>
<div class="abs" style="left:466px;top:678px;width:9px;height:18px;background:#b8bac4;border-left:1px solid #f0f0f0"></div>
<svg style="left:467px;top:684.5px" width="8" height="5"><path d="M0 0H8L4 4.5Z" fill="#000"/></svg>
<div class="t" style="left:320px;width:200px;text-align:center;top:681.50px;font-size:13px;color:#1c1cb4;">.</div>
<div class="abs" style="left:482px;top:676px;width:155px;height:21px;background:#b6b9c6;border-top:2px solid #6e6e6e;border-left:2px solid #6e6e6e;border-right:1px solid #e0e0e0;border-bottom:1px solid #e0e0e0"></div>
<div class="abs" style="left:484.5px;top:678px;width:22px;height:18px;background:#cdcdd1"></div>
<div class="abs" style="left:507px;top:678px;width:12px;height:18px;background:#b6b9c5"></div>
<div class="abs" style="left:519.5px;top:678px;width:22px;height:18px;background:#cdcdd1"></div>
<div class="abs" style="left:542px;top:678px;width:16px;height:18px;background:#b6b9c5"></div>
<div class="abs" style="left:558.5px;top:678px;width:21.5px;height:18px;background:#cdcdd1"></div>
<div class="abs" style="left:580.5px;top:678px;width:3px;height:18px;background:#b6b9c5"></div>
<div class="abs" style="left:583.5px;top:678px;width:33px;height:18px;background:#cdcdd1"></div>
<div class="abs" style="left:616.5px;top:678px;width:10.5px;height:18px;background:#b6b9c5"></div>
<div class="t" style="left:390.0px;width:200px;text-align:center;top:681.60px;font-size:13px;color:#1c1cb4;">0</div>
<div class="t" style="left:401.0px;width:200px;text-align:center;top:681.60px;font-size:13px;color:#1c1cb4;">0</div>
<div class="t" style="left:413.0px;width:200px;text-align:center;top:681.60px;font-size:13px;color:#1c1cb4;">h</div>
<div class="t" style="left:425.0px;width:200px;text-align:center;top:681.60px;font-size:13px;color:#1c1cb4;">0</div>
<div class="t" style="left:436.0px;width:200px;text-align:center;top:681.60px;font-size:13px;color:#1c1cb4;">0</div>
<div class="t" style="left:450.0px;width:200px;text-align:center;top:681.60px;font-size:13px;color:#1c1cb4;">m</div>
<div class="t" style="left:463.875px;width:200px;text-align:center;top:681.60px;font-size:13px;color:#1c1cb4;">0</div>
<div class="t" style="left:474.625px;width:200px;text-align:center;top:681.60px;font-size:13px;color:#1c1cb4;">1</div>
<div class="t" style="left:489.0px;width:200px;text-align:center;top:681.60px;font-size:13px;color:#1c1cb4;">9</div>
<div class="t" style="left:500.0px;width:200px;text-align:center;top:681.60px;font-size:13px;color:#1c1cb4;">8</div>
<div class="t" style="left:511.0px;width:200px;text-align:center;top:681.60px;font-size:13px;color:#1c1cb4;">0</div>
<div class="t" style="left:521.75px;width:200px;text-align:center;top:681.60px;font-size:13px;color:#1c1cb4;">s</div>
<div class="abs" style="left:628px;top:678px;width:9px;height:18px;background:#b8bac4;border-left:1px solid #f0f0f0"></div>
<svg style="left:629px;top:684.5px" width="8" height="5"><path d="M0 0H8L4 4.5Z" fill="#000"/></svg>
<div class="t" style="left:482px;width:200px;text-align:center;top:681.50px;font-size:13px;color:#1c1cb4;">.</div>
<div class="abs" style="left:644px;top:648px;width:1px;height:55px;background:#c8c8c8"></div>
<div class="abs" style="left:648px;top:650px;width:6px;height:52px"><div style="position:absolute;left:1px;top:3px;width:4px;height:1px;background:#b4b4b8"></div><div style="position:absolute;left:1px;top:7px;width:4px;height:1px;background:#b4b4b8"></div><div style="position:absolute;left:1px;top:11px;width:4px;height:1px;background:#b4b4b8"></div><div style="position:absolute;left:1px;top:15px;width:4px;height:1px;background:#b4b4b8"></div><div style="position:absolute;left:1px;top:19px;width:4px;height:1px;background:#b4b4b8"></div><div style="position:absolute;left:1px;top:23px;width:4px;height:1px;background:#b4b4b8"></div><div style="position:absolute;left:1px;top:27px;width:4px;height:1px;background:#b4b4b8"></div><div style="position:absolute;left:1px;top:31px;width:4px;height:1px;background:#b4b4b8"></div><div style="position:absolute;left:1px;top:35px;width:4px;height:1px;background:#b4b4b8"></div><div style="position:absolute;left:1px;top:39px;width:4px;height:1px;background:#b4b4b8"></div><div style="position:absolute;left:1px;top:43px;width:4px;height:1px;background:#b4b4b8"></div><div style="position:absolute;left:1px;top:47px;width:4px;height:1px;background:#b4b4b8"></div></div>
<div class="abs" style="left:654px;top:648px;width:1px;height:55px;background:#d8d8d8"></div>
<div class="abs" style="left:657px;top:655.5px;width:224px;height:37px;background:#b6b9c6;border-top:2px solid #6e6e6e;border-left:2px solid #6e6e6e;border-right:1px solid #e8e8e8;border-bottom:1px solid #e8e8e8"></div>
<div class="abs" style="left:658.4px;top:657.5px;width:41px;height:34px;background:#c9cacf"></div>
<div class="abs" style="left:699.2px;top:657.5px;width:30.4px;height:34px;background:#b4b7c4"></div>
<div class="abs" style="left:729.6px;top:657.5px;width:40.4px;height:34px;background:#c9cacf"></div>
<div class="abs" style="left:770px;top:657.5px;width:37.8px;height:34px;background:#b4b7c4"></div>
<div class="abs" style="left:807.8px;top:657.5px;width:40.2px;height:34px;background:#c9cacf"></div>
<div class="abs" style="left:848px;top:657.5px;width:23px;height:34px;background:#b4b7c4"></div>
<div class="t" style="left:568.65px;width:200px;text-align:center;top:662.94px;font-size:27px;color:#1010b4;">0</div>
<div class="t" style="left:589.15px;width:200px;text-align:center;top:662.94px;font-size:27px;color:#1010b4;">0</div>
<div class="t" style="left:614.4000000000001px;width:200px;text-align:center;top:662.94px;font-size:27px;color:#1010b4;">h</div>
<div class="t" style="left:639.7px;width:200px;text-align:center;top:662.94px;font-size:27px;color:#1010b4;">0</div>
<div class="t" style="left:659.9px;width:200px;text-align:center;top:662.94px;font-size:27px;color:#1010b4;">0</div>
<div class="t" style="left:688.9px;width:200px;text-align:center;top:662.94px;font-size:27px;color:#1010b4;">m</div>
<div class="t" style="left:717.8499999999999px;width:200px;text-align:center;top:662.94px;font-size:27px;color:#1010b4;">0</div>
<div class="t" style="left:737.9499999999999px;width:200px;text-align:center;top:662.94px;font-size:27px;color:#1010b4;">2</div>
<div class="t" style="left:759.5px;width:200px;text-align:center;top:662.94px;font-size:27px;color:#1010b4;">s</div>
<div class="abs" style="left:871.5px;top:657.5px;width:9px;height:34px;background:#b8bac4;border-left:1px solid #f0f0f0"></div>
<svg style="left:872px;top:673px" width="8" height="5"><path d="M0 0H8L4 4.5Z" fill="#000"/></svg>
<div class="abs" style="left:891px;top:648px;width:1px;height:55px;background:#c8c8c8"></div>
<div class="abs" style="left:894px;top:648px;width:1px;height:55px;background:#c8c8c8"></div>
<div class="abs" style="left:895px;top:675px;width:326px;height:1px;background:#d0d0d0"></div>
<div class="abs" style="left:898px;top:650px;width:6px;height:24px"><div style="position:absolute;left:1px;top:3px;width:4px;height:1px;background:#b4b4b8"></div><div style="position:absolute;left:1px;top:7px;width:4px;height:1px;background:#b4b4b8"></div><div style="position:absolute;left:1px;top:11px;width:4px;height:1px;background:#b4b4b8"></div><div style="position:absolute;left:1px;top:15px;width:4px;height:1px;background:#b4b4b8"></div><div style="position:absolute;left:1px;top:19px;width:4px;height:1px;background:#b4b4b8"></div></div>
<div class="abs" style="left:907px;top:649px;width:27px;height:26px;background:#e6ebf5;border-right:1px solid #c8ccd8;border-bottom:1px solid #c8ccd8"></div>
<svg style="left:913px;top:654px" width="15" height="14"><path d="M0.5 0.5L14.5 7L0.5 13.5Z" fill="#3a8a5e"/></svg>
<div class="abs" style="left:939px;top:665px;width:138px;height:2px;background:#9a9a9a"></div>
<div class="abs" style="left:940px;top:662px;width:1px;height:3px;background:#9a9a9a"></div>
<div class="abs" style="left:949px;top:662px;width:1px;height:3px;background:#9a9a9a"></div>
<div class="abs" style="left:958px;top:662px;width:1px;height:3px;background:#9a9a9a"></div>
<div class="abs" style="left:968px;top:662px;width:1px;height:3px;background:#9a9a9a"></div>
<div class="abs" style="left:977px;top:662px;width:1px;height:3px;background:#9a9a9a"></div>
<div class="abs" style="left:986px;top:662px;width:1px;height:3px;background:#9a9a9a"></div>
<div class="abs" style="left:995px;top:662px;width:1px;height:3px;background:#9a9a9a"></div>
<div class="abs" style="left:1004px;top:662px;width:1px;height:3px;background:#9a9a9a"></div>
<div class="abs" style="left:1014px;top:662px;width:1px;height:3px;background:#9a9a9a"></div>
<div class="abs" style="left:1023px;top:662px;width:1px;height:3px;background:#9a9a9a"></div>
<div class="abs" style="left:1032px;top:662px;width:1px;height:3px;background:#9a9a9a"></div>
<div class="abs" style="left:1041px;top:662px;width:1px;height:3px;background:#9a9a9a"></div>
<div class="abs" style="left:1050px;top:662px;width:1px;height:3px;background:#9a9a9a"></div>
<div class="abs" style="left:1060px;top:662px;width:1px;height:3px;background:#9a9a9a"></div>
<div class="abs" style="left:1069px;top:662px;width:1px;height:3px;background:#9a9a9a"></div>
<div class="abs" style="left:939px;top:655px;width:5px;height:1.5px;background:#000"></div>
<div class="abs" style="left:1069px;top:655px;width:5px;height:1.5px;background:#000"></div>
<div class="abs" style="left:1070.8px;top:653px;width:1.5px;height:5px;background:#000"></div>
<div class="abs" style="left:980px;top:656px;width:10px;height:18px;background:#f8f8f8;border:1px solid #333;border-radius:2px"></div>
<div class="abs" style="left:984.5px;top:662px;width:1px;height:6px;background:#555"></div>
<div class="abs" style="left:1083px;top:648px;width:1px;height:28px;background:#c8c8c8"></div>
<div class="abs" style="left:1086px;top:648px;width:1px;height:28px;background:#c8c8c8"></div>
<div class="abs" style="left:117px;top:704px;width:1104px;height:23px;background:#f0f0f0;border-radius:0 0 8px 8px"></div>
<div class="abs" style="left:126px;top:705px;width:1px;height:22px;background:#d8d8d8"></div>
<div class="abs" style="left:297px;top:705px;width:1px;height:22px;background:#d8d8d8"></div>
<div class="abs" style="left:1042px;top:705px;width:1px;height:22px;background:#d8d8d8"></div>
<div class="t" style="left:131px;top:710.84px;font-size:12px;color:#000;">Stopped.</div>
<div class="abs" style="left:1216px;top:718px;width:1px;height:1px;background:#b0b0b0"></div>
<div class="abs" style="left:1216px;top:721px;width:1px;height:1px;background:#b0b0b0"></div>
<div class="abs" style="left:1213px;top:721px;width:1px;height:1px;background:#b0b0b0"></div>
<div class="abs" style="left:1216px;top:715px;width:1px;height:1px;background:#b0b0b0"></div>
<div class="abs" style="left:1213px;top:718px;width:1px;height:1px;background:#b0b0b0"></div>
<div class="abs" style="left:1210px;top:721px;width:1px;height:1px;background:#b0b0b0"></div>
<div class="abs" style="left:117px;top:72px;width:201px;height:260px;background:#f9f9f9;border-radius:0 8px 8px 8px;box-shadow:0 4px 10px rgba(0,0,0,0.22),0 0 1px rgba(0,0,0,0.3)"></div>
<div class="abs" style="left:157px;top:166px;width:153px;height:1px;background:#d8d8d8"></div>
<div class="abs" style="left:157px;top:197px;width:153px;height:1px;background:#d8d8d8"></div>
<div class="abs" style="left:157px;top:250px;width:153px;height:1px;background:#d8d8d8"></div>
<div class="abs" style="left:157px;top:303px;width:153px;height:1px;background:#d8d8d8"></div>
<div class="abs" style="left:122px;top:201px;width:196px;height:1px;background:#f2c4cc"></div>
<div class="abs" style="left:122px;top:201px;width:2px;height:25px;background:linear-gradient(180deg,#f4d0d8,#f080a0)"></div>
<div class="abs" style="left:127px;top:206px;width:182px;height:14px;background:#0078d4;border-radius:4px"></div>
<div class="t" style="left:155.5px;top:79.64px;font-size:12px;color:#000;letter-spacing:-0.1px">New</div>
<div class="t" style="left:-5.5px;width:300px;text-align:right;top:79.64px;font-size:12px;color:#000;letter-spacing:-0.1px">Ctrl+N</div>
<div class="t" style="left:155.5px;top:101.64px;font-size:12px;color:#000;letter-spacing:-0.1px">Open...</div>
<div class="t" style="left:-5.5px;width:300px;text-align:right;top:101.64px;font-size:12px;color:#000;letter-spacing:-0.1px">Ctrl+O</div>
<div class="t" style="left:155.5px;top:123.44px;font-size:12px;color:#000;letter-spacing:-0.1px">Recent Files</div>
<svg style="left:299px;top:124.1px" width="6" height="9"><path d="M1 1L4.8 4.5L1 8" stroke="#333" stroke-width="1.2" fill="none"/></svg>
<div class="t" style="left:155.5px;top:145.64px;font-size:12px;color:#000;letter-spacing:-0.1px">Close</div>
<div class="t" style="left:-5.5px;width:300px;text-align:right;top:145.64px;font-size:12px;color:#000;letter-spacing:-0.1px">Ctrl+W</div>
<div class="t" style="left:155.5px;top:176.44px;font-size:12px;color:#000;letter-spacing:-0.1px">Save Project</div>
<svg style="left:299px;top:177.1px" width="6" height="9"><path d="M1 1L4.8 4.5L1 8" stroke="#333" stroke-width="1.2" fill="none"/></svg>
<div class="t" style="left:155.5px;top:207.24px;font-size:12px;color:#ffffff;letter-spacing:-0.1px">Export</div>
<svg style="left:299px;top:207.9px" width="6" height="9"><path d="M1 1L4.8 4.5L1 8" stroke="#1a1a2e" stroke-width="1.2" fill="none"/></svg>
<div class="t" style="left:155.5px;top:229.34px;font-size:12px;color:#000;letter-spacing:-0.1px">Import</div>
<svg style="left:299px;top:230.0px" width="6" height="9"><path d="M1 1L4.8 4.5L1 8" stroke="#333" stroke-width="1.2" fill="none"/></svg>
<div class="t" style="left:155.5px;top:260.84px;font-size:12px;color:#000;letter-spacing:-0.1px">Page Setup...</div>
<div class="t" style="left:155.5px;top:282.54px;font-size:12px;color:#000;letter-spacing:-0.1px">Print...</div>
<div class="t" style="left:155.5px;top:313.74px;font-size:12px;color:#000;letter-spacing:-0.1px">Exit</div>
<div class="t" style="left:-5.5px;width:300px;text-align:right;top:313.74px;font-size:12px;color:#000;letter-spacing:-0.1px">Ctrl+Q</div>
<div class="abs" style="left:313px;top:200px;width:286px;height:181px;background:#f9f9f9;border-radius:8px;box-shadow:0 4px 10px rgba(0,0,0,0.22),0 0 1px rgba(0,0,0,0.3)"></div>
<div class="abs" style="left:313px;top:201px;width:281px;height:1px;background:#f2c4cc"></div>
<div class="abs" style="left:314px;top:201px;width:3px;height:25px;background:linear-gradient(180deg,#d8c0c8,#f07898)"></div>
<div class="abs" style="left:590px;top:201px;width:3px;height:25px;background:linear-gradient(180deg,#f4d0d8,#f080a0)"></div>
<div class="abs" style="left:323px;top:206px;width:266px;height:14px;background:#0078d4;border-radius:4px"></div>
<div class="t" style="left:351.2px;top:207.54px;font-size:12px;color:#ffffff;letter-spacing:-0.12px">Export as MP3</div>
<div class="t" style="left:351.2px;top:229.54px;font-size:12px;color:#000;letter-spacing:-0.12px">Export as WAV</div>
<div class="t" style="left:351.2px;top:251.54px;font-size:12px;color:#000;letter-spacing:-0.12px">Export as OGG</div>
<div class="t" style="left:351.2px;top:273.54px;font-size:12px;color:#000;letter-spacing:-0.12px">Export Audio...</div>
<div class="t" style="left:510.3px;top:273.54px;font-size:12px;color:#000;letter-spacing:0.05px">Ctrl+Shift+E</div>
<div class="t" style="left:351.2px;top:295.54px;font-size:12px;color:#000;letter-spacing:-0.12px">Export Selected Audio...</div>
<div class="t" style="left:351.2px;top:317.54px;font-size:12px;color:#a6a6a6;letter-spacing:-0.12px">Export Labels...</div>
<div class="t" style="left:351.2px;top:339.54px;font-size:12px;color:#000;letter-spacing:-0.12px">Export Multiple...</div>
<div class="t" style="left:510.3px;top:339.54px;font-size:12px;color:#000;letter-spacing:0.05px">Ctrl+Shift+L</div>
<div class="t" style="left:351.2px;top:361.54px;font-size:12px;color:#a6a6a6;letter-spacing:-0.12px">Export MIDI...</div>
</body></html>
